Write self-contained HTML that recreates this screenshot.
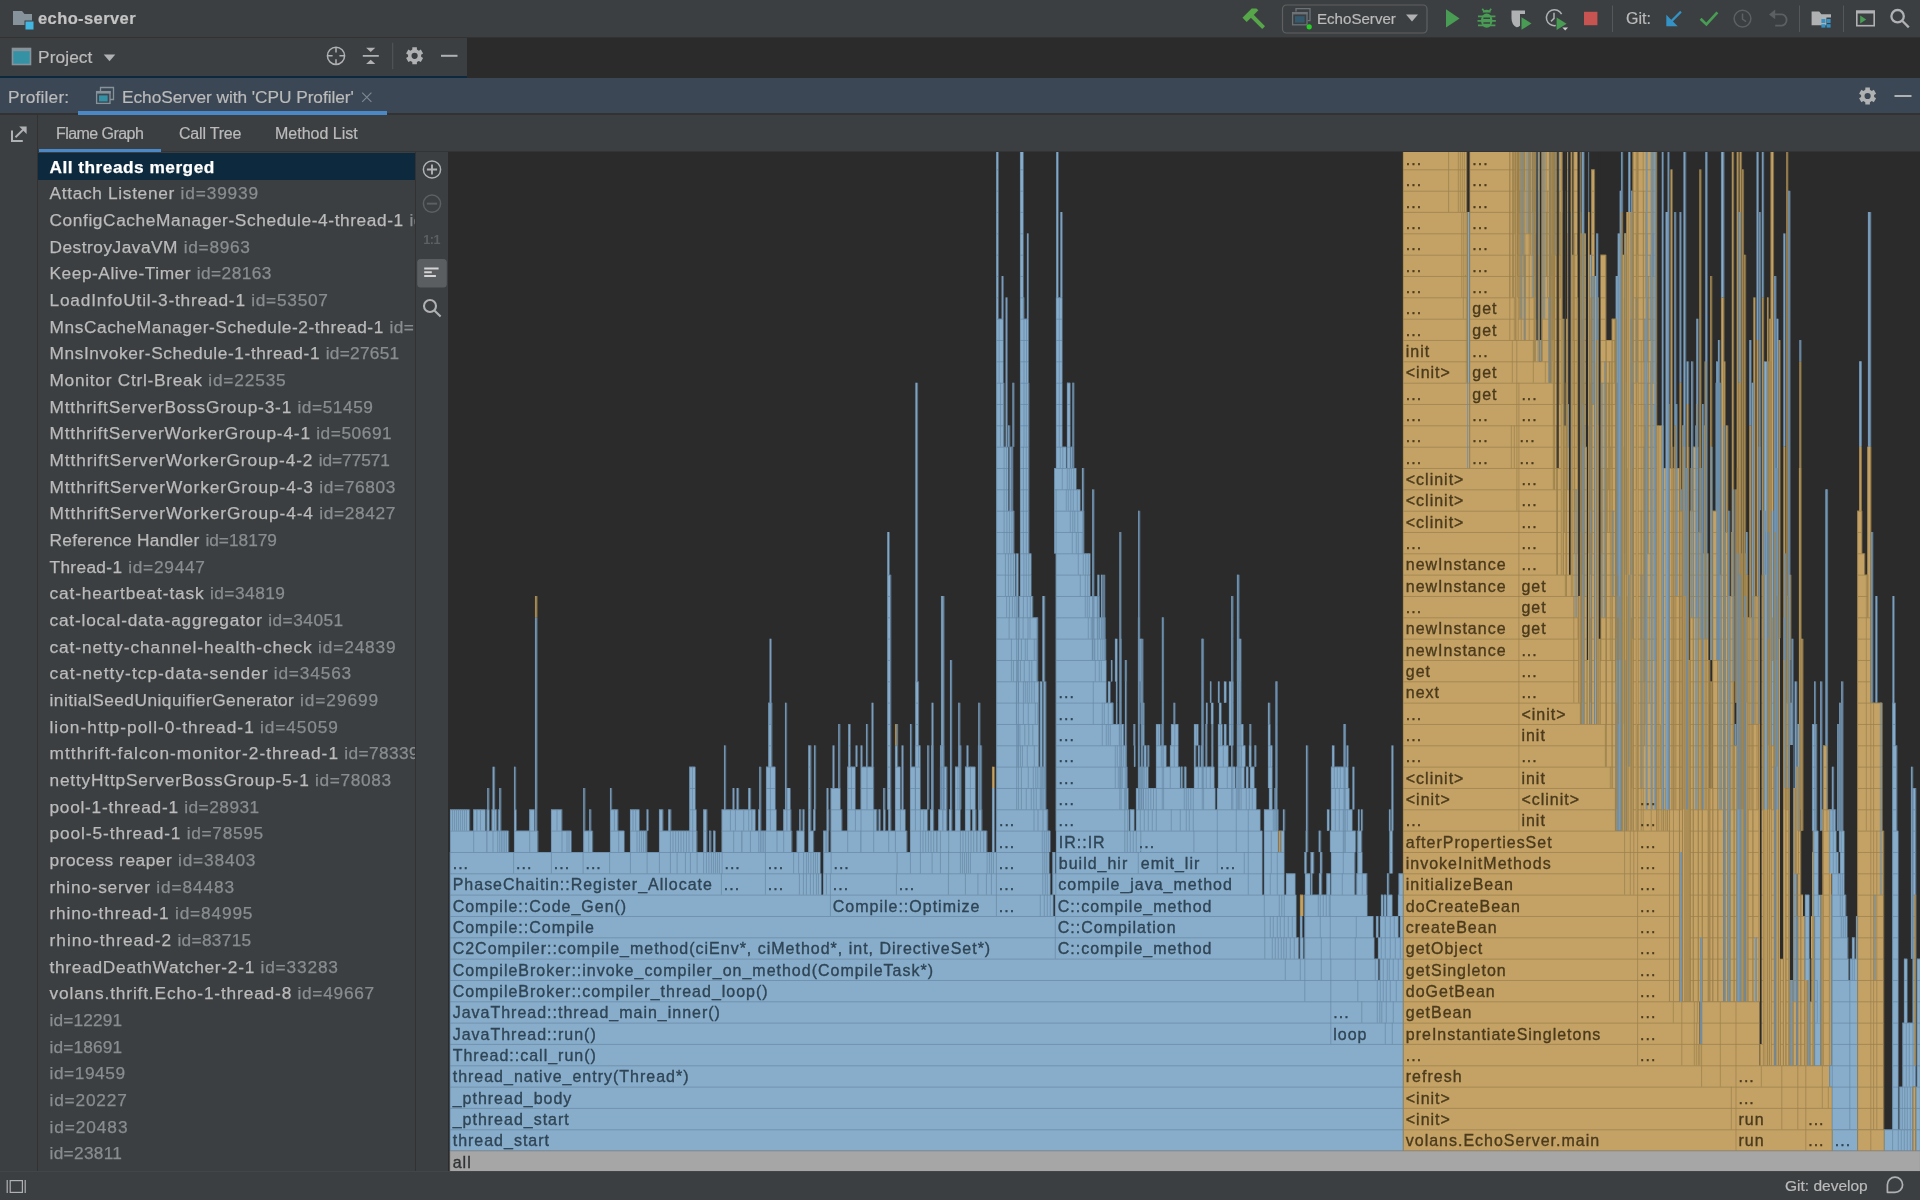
<!DOCTYPE html>
<html><head><meta charset="utf-8"><title>echo-server</title>
<style>
html,body{margin:0;padding:0;background:#3c3f41;}
body{width:1920px;height:1200px;overflow:hidden;position:relative;font-family:"Liberation Sans",sans-serif;color:#bbbbbb;}
.abs{position:absolute;}
svg,.t,#list{will-change:transform;}
.t{position:absolute;white-space:nowrap;line-height:1;-webkit-text-stroke:0.2px;}
#topbar{left:0;top:0;width:1920px;height:37px;background:#3c3f41;}
#topline{left:0;top:37px;width:1920px;height:1px;background:#323232;}
#editor{left:467px;top:38px;width:1453px;height:40px;background:#2b2b2b;}
#projhdr{left:0;top:38px;width:467px;height:38px;background:#3c3f41;}
#projline{left:0;top:76px;width:467px;height:2px;background:#0d293e;}
#profhdr{left:0;top:78px;width:1920px;height:35px;background:#3b4754;border-bottom:2px solid #323232;}
#subtabs{left:0;top:115px;width:1920px;height:36px;background:#3c3f41;border-bottom:1px solid #333435;}
#gutter{left:0;top:115px;width:37px;height:1056px;background:#3c3f41;border-right:1px solid #323232;}
#list{left:38px;top:152px;width:377px;height:1019px;background:#3c3f41;overflow:hidden;}
#tool{left:415px;top:152px;width:33.3px;height:1019px;background:#3c3f41;border-left:1px solid #323232;box-sizing:border-box;}
#flamebg{left:448.3px;top:152px;width:1471.7px;height:1019px;background:#2b2b2b;}
#status{left:0;top:1170.8px;width:1920px;height:29.2px;background:#3c3f41;border-top:1px solid #434547;box-sizing:border-box;}
.row{position:absolute;left:0;width:377px;height:27px;white-space:nowrap;font-size:17.3px;line-height:29.4px;color:#bbbbbb;-webkit-text-stroke:0.25px;overflow:hidden;}
.row b,.row i{position:absolute;top:0;font-weight:normal;font-style:normal;white-space:pre;}
.row i{color:#8a8d8f;}
.sel{background:#0d293e;color:#ffffff;}
.sel b{font-weight:bold;}
</style></head><body>
<div id="topbar" class="abs"></div>
<div id="topline" class="abs"></div>
<div id="editor" class="abs"></div>
<div id="projhdr" class="abs"></div>
<div id="projline" class="abs"></div>
<div id="profhdr" class="abs"></div>
<div id="subtabs" class="abs"></div>
<div id="gutter" class="abs"></div>
<div id="list" class="abs">
<div class="row sel" style="top:0.67px"><b style="left:11.5px;letter-spacing:0.485px">All threads merged</b></div>
<div class="row" style="top:27.34px"><b style="left:11.5px;letter-spacing:0.676px">Attach Listener</b> <i style="left:142.45px;letter-spacing:0.884px">id=39939</i></div>
<div class="row" style="top:54.00px"><b style="left:11.5px;letter-spacing:0.603px">ConfigCacheManager-Schedule-4-thread-1</b> <i style="left:371.45px;letter-spacing:0.42px">id=60675</i></div>
<div class="row" style="top:80.67px"><b style="left:11.5px;letter-spacing:0.503px">DestroyJavaVM</b> <i style="left:145.70px;letter-spacing:0.717px">id=8963</i></div>
<div class="row" style="top:107.34px"><b style="left:11.5px;letter-spacing:0.544px">Keep-Alive-Timer</b> <i style="left:158.70px;letter-spacing:0.456px">id=28163</i></div>
<div class="row" style="top:134.00px"><b style="left:11.5px;letter-spacing:0.808px">LoadInfoUtil-3-thread-1</b> <i style="left:213.20px;letter-spacing:0.742px">id=53507</i></div>
<div class="row" style="top:160.67px"><b style="left:11.5px;letter-spacing:0.578px">MnsCacheManager-Schedule-2-thread-1</b> <i style="left:351.45px;letter-spacing:0.42px">id=26883</i></div>
<div class="row" style="top:187.34px"><b style="left:11.5px;letter-spacing:0.599px">MnsInvoker-Schedule-1-thread-1</b> <i style="left:287.70px;letter-spacing:0.277px">id=27651</i></div>
<div class="row" style="top:214.00px"><b style="left:11.5px;letter-spacing:0.723px">Monitor Ctrl-Break</b> <i style="left:170.20px;letter-spacing:0.849px">id=22535</i></div>
<div class="row" style="top:240.67px"><b style="left:11.5px;letter-spacing:0.802px">MtthriftServerBossGroup-3-1</b> <i style="left:259.45px;letter-spacing:0.563px">id=51459</i></div>
<div class="row" style="top:267.34px"><b style="left:11.5px;letter-spacing:0.809px">MtthriftServerWorkerGroup-4-1</b> <i style="left:278.20px;letter-spacing:0.563px">id=50691</i></div>
<div class="row" style="top:294.00px"><b style="left:11.5px;letter-spacing:0.898px">MtthriftServerWorkerGroup-4-2</b> <i style="left:280.70px;letter-spacing:-0.044px">id=77571</i></div>
<div class="row" style="top:320.67px"><b style="left:11.5px;letter-spacing:0.916px">MtthriftServerWorkerGroup-4-3</b> <i style="left:281.20px;letter-spacing:0.67px">id=76803</i></div>
<div class="row" style="top:347.34px"><b style="left:11.5px;letter-spacing:0.916px">MtthriftServerWorkerGroup-4-4</b> <i style="left:281.20px;letter-spacing:0.67px">id=28427</i></div>
<div class="row" style="top:374.00px"><b style="left:11.5px;letter-spacing:0.293px">Reference Handler</b> <i style="left:167.45px;letter-spacing:-0.008px">id=18179</i></div>
<div class="row" style="top:400.67px"><b style="left:11.5px;letter-spacing:0.339px">Thread-1</b> <i style="left:90.20px;letter-spacing:0.742px">id=29447</i></div>
<div class="row" style="top:427.34px"><b style="left:11.5px;letter-spacing:0.881px">cat-heartbeat-task</b> <i style="left:171.95px;letter-spacing:0.492px">id=34819</i></div>
<div class="row" style="top:454.00px"><b style="left:11.5px;letter-spacing:0.809px">cat-local-data-aggregator</b> <i style="left:230.20px;letter-spacing:0.492px">id=34051</i></div>
<div class="row" style="top:480.67px"><b style="left:11.5px;letter-spacing:0.894px">cat-netty-channel-health-check</b> <i style="left:279.95px;letter-spacing:0.884px">id=24839</i></div>
<div class="row" style="top:507.34px"><b style="left:11.5px;letter-spacing:1.038px">cat-netty-tcp-data-sender</b> <i style="left:235.70px;letter-spacing:0.849px">id=34563</i></div>
<div class="row" style="top:534.00px"><b style="left:11.5px;letter-spacing:0.473px">initialSeedUniquifierGenerator</b> <i style="left:261.95px;letter-spacing:0.956px">id=29699</i></div>
<div class="row" style="top:560.67px"><b style="left:11.5px;letter-spacing:1.026px">lion-http-poll-0-thread-1</b> <i style="left:221.95px;letter-spacing:0.92px">id=45059</i></div>
<div class="row" style="top:587.34px"><b style="left:11.5px;letter-spacing:1.059px">mtthrift-falcon-monitor-2-thread-1</b> <i style="left:306.20px;letter-spacing:0.42px">id=78339</i></div>
<div class="row" style="top:614.00px"><b style="left:11.5px;letter-spacing:0.815px">nettyHttpServerBossGroup-5-1</b> <i style="left:276.95px;letter-spacing:0.67px">id=78083</i></div>
<div class="row" style="top:640.67px"><b style="left:11.5px;letter-spacing:0.738px">pool-1-thread-1</b> <i style="left:146.20px;letter-spacing:0.492px">id=28931</i></div>
<div class="row" style="top:667.34px"><b style="left:11.5px;letter-spacing:0.916px">pool-5-thread-1</b> <i style="left:148.70px;letter-spacing:0.706px">id=78595</i></div>
<div class="row" style="top:694.00px"><b style="left:11.5px;letter-spacing:0.537px">process reaper</b> <i style="left:139.95px;letter-spacing:0.849px">id=38403</i></div>
<div class="row" style="top:720.67px"><b style="left:11.5px;letter-spacing:0.754px">rhino-server</b> <i style="left:118.20px;letter-spacing:0.92px">id=84483</i></div>
<div class="row" style="top:747.34px"><b style="left:11.5px;letter-spacing:0.822px">rhino-thread-1</b> <i style="left:136.95px;letter-spacing:0.849px">id=84995</i></div>
<div class="row" style="top:774.00px"><b style="left:11.5px;letter-spacing:1.014px">rhino-thread-2</b> <i style="left:139.45px;letter-spacing:0.313px">id=83715</i></div>
<div class="row" style="top:800.67px"><b style="left:11.5px;letter-spacing:0.724px">threadDeathWatcher-2-1</b> <i style="left:222.45px;letter-spacing:0.849px">id=33283</i></div>
<div class="row" style="top:827.34px"><b style="left:11.5px;letter-spacing:0.847px">volans.thrift.Echo-1-thread-8</b> <i style="left:259.45px;letter-spacing:0.742px">id=49667</i></div>
<div class="row" style="top:854.00px"><i style="left:11.50px;letter-spacing:0.127px">id=12291</i></div>
<div class="row" style="top:880.67px"><i style="left:11.50px;letter-spacing:0.127px">id=18691</i></div>
<div class="row" style="top:907.34px"><i style="left:11.50px;letter-spacing:0.556px">id=19459</i></div>
<div class="row" style="top:934.00px"><i style="left:11.50px;letter-spacing:0.806px">id=20227</i></div>
<div class="row" style="top:960.67px"><i style="left:11.50px;letter-spacing:0.913px">id=20483</i></div>
<div class="row" style="top:987.34px"><i style="left:11.50px;letter-spacing:0.31px">id=23811</i></div>
</div>
<div id="tool" class="abs"></div>
<div id="flamebg" class="abs"></div>
<div id="status" class="abs"></div>

<!-- top bar text -->
<div class="t" style="left:37.5px;top:10px;font-size:16.5px;font-weight:bold;letter-spacing:0.4px;color:#c4c4c4;">echo-server</div>
<div class="t" style="left:1317.4px;top:11.3px;font-size:15.1px;color:#bbbbbb;">EchoServer</div>
<div class="t" style="left:1625.6px;top:11px;font-size:16px;color:#bbbbbb;">Git:</div>
<div class="t" style="left:37.6px;top:48.6px;font-size:17.3px;letter-spacing:0.1px;color:#bbbbbb;">Project</div>
<div class="t" style="left:8.3px;top:89px;font-size:17.3px;letter-spacing:0.2px;color:#bbbbbb;">Profiler:</div>
<div class="t" style="left:121.5px;top:89px;font-size:17.3px;letter-spacing:-0.05px;color:#bbbbbb;">EchoServer with 'CPU Profiler'</div>
<div class="t" style="left:56px;top:126px;font-size:16px;letter-spacing:-0.55px;color:#bbbbbb;">Flame Graph</div>
<div class="t" style="left:178.8px;top:126px;font-size:16px;letter-spacing:-0.2px;color:#bbbbbb;">Call Tree</div>
<div class="t" style="left:275px;top:126px;font-size:16px;color:#bbbbbb;">Method List</div>
<div class="t" style="left:1785px;top:1178px;font-size:15.5px;color:#bbbbbb;">Git: develop</div>

<!-- tab underlines -->
<div class="abs" style="left:78px;top:110.7px;width:309px;height:4.1px;background:#4a88c7;"></div>
<div class="abs" style="left:39px;top:149px;width:122px;height:3px;background:#4a88c7;"></div>

<svg class="abs" style="left:0;top:0" width="1920" height="1200" viewBox="0 0 1920 1200">
<path fill="#87939a" d="M13 11h9l2.5 3H32v11H13z"/><rect x="24.5" y="20.5" width="9.5" height="9.5" fill="#3c3f41"/><rect x="25.5" y="21.5" width="8" height="8" fill="#40b6e0"/>
<rect x="12.5" y="48.5" width="18" height="16" fill="#3592a5" stroke="#87939a" stroke-width="1.6"/><rect x="12" y="48" width="19" height="3.2" fill="#87939a"/>
<path fill="#afb1b3" d="M103.7 54.6h11.6l-5.8 6.6z"/>
<g fill="none" stroke="#afb1b3" stroke-width="1.5"><circle cx="336" cy="55.8" r="8.6"/><path d="M336 47.2v5.2M336 59.2v5.2M327.4 55.8h5.2M339.4 55.8h5.2"/></g>
<path fill="#afb1b3" d="M362.8 54.9h16v1.8h-16zM366.1 47.8h9.2l-4.6 4.3zM366.1 64h9.2l-4.6 -4.3z"/>
<rect x="392.2" y="42.7" width="1" height="26.5" fill="#555759"/>
<path fill="#afb1b3" fill-rule="evenodd" d="M412.27 49.62 L412.34 47.30 L416.86 47.30 L416.93 49.62 L418.79 50.70 L420.83 49.59 L423.10 53.51 L421.11 54.73 L421.11 56.87 L423.10 58.09 L420.83 62.01 L418.79 60.90 L416.93 61.98 L416.86 64.30 L412.34 64.30 L412.27 61.98 L410.41 60.90 L408.37 62.01 L406.10 58.09 L408.09 56.87 L408.09 54.73 L406.10 53.51 L408.37 49.59 L410.41 50.70Z M411.50 55.80 a3.10 3.10 0 1 0 6.20 0 a3.10 3.10 0 1 0 -6.20 0Z"/>
<rect x="441" y="54.8" width="16.5" height="2" fill="#afb1b3"/>
<g fill="none" stroke="#87939a" stroke-width="1.3"><path d="M100.5 91.5v-4h13v12h-3.5"/><rect x="96.6" y="91.6" width="13.4" height="11.8" fill="#3b4754"/></g><rect x="96" y="91" width="14.6" height="2.6" fill="#87939a"/><rect x="99" y="95.4" width="8.6" height="6" fill="#3592a5"/>
<path stroke="#7d8893" stroke-width="1.2" fill="none" d="M362.2 92.7l9.2 9.2M371.4 92.7l-9.2 9.2"/>
<path fill="#afb1b3" fill-rule="evenodd" d="M1865.27 89.82 L1865.34 87.50 L1869.86 87.50 L1869.93 89.82 L1871.79 90.90 L1873.83 89.79 L1876.10 93.71 L1874.11 94.93 L1874.11 97.07 L1876.10 98.29 L1873.83 102.21 L1871.79 101.10 L1869.93 102.18 L1869.86 104.50 L1865.34 104.50 L1865.27 102.18 L1863.41 101.10 L1861.37 102.21 L1859.10 98.29 L1861.09 97.07 L1861.09 94.93 L1859.10 93.71 L1861.37 89.79 L1863.41 90.90Z M1864.50 96.00 a3.10 3.10 0 1 0 6.20 0 a3.10 3.10 0 1 0 -6.20 0Z"/>
<rect x="1894.5" y="95" width="17" height="2" fill="#afb1b3"/>
<g fill="none" stroke="#afb1b3" stroke-width="2"><path d="M12 130.5v10.5h10.8"/><path d="M15.5 137.3L25.2 127.6"/></g><path fill="#afb1b3" d="M19.2 126.6h7.4v7.4z"/>
<g fill="none" stroke="#afb1b3" stroke-width="1.5"><circle cx="432" cy="169.5" r="8.6"/></g><path fill="#afb1b3" d="M426.9 168.6h10.2v1.9h-10.2zM431.05 164.4h1.9v10.2h-1.9z"/>
<g fill="none" stroke="#5d6062" stroke-width="1.5"><circle cx="432" cy="203.6" r="8.6"/></g><rect x="426.9" y="202.7" width="10.2" height="1.9" fill="#5d6062"/>
<text x="431.7" y="244.2" text-anchor="middle" font-family="Liberation Sans, sans-serif" font-weight="bold" font-size="12.6" letter-spacing="-0.4" fill="#5d6062">1:1</text>
<rect x="417.2" y="259" width="29.6" height="28.6" rx="3.5" fill="#5a5e61"/>
<path fill="#d4d4d4" d="M424.2 267.4h14.4v2.1h-14.4zM424.2 271.2h7.6v2h-7.6zM424.2 275h11.7v2.1h-11.7z"/>
<g fill="none" stroke="#afb1b3" stroke-width="2.1"><circle cx="430" cy="306" r="6"/><path d="M434.4 310.4l6.2 6.2"/></g>
<g transform="translate(1254.5 18.5) rotate(-45)"><rect x="-2" y="-4" width="4" height="17" rx="0.8" fill="#57a64a"/><path fill="#57a64a" d="M-8 -9h13l3.5 3.2v2.8h-16.5z"/></g>
<rect x="1282.5" y="5" width="144.5" height="28" rx="4" fill="none" stroke="#5e6162" stroke-width="1.2"/>
<g fill="none" stroke="#6b7379" stroke-width="1.3"><path d="M1296 11.5v-2.8h14v12h-2.5"/><rect x="1292.6" y="12.6" width="14.4" height="12.2" fill="#3c3f41"/></g><rect x="1292" y="12" width="15.6" height="2.4" fill="#6b7379"/><rect x="1295" y="16.2" width="9.6" height="6.4" fill="#355a6e"/><circle cx="1309.2" cy="26.8" r="2.6" fill="#23d123"/>
<path fill="#afb1b3" d="M1406 14.6h12l-6 7z"/>
<path fill="#499c54" d="M1446 9.2l13.6 9.2l-13.6 9.2z"/>
<g fill="#499c54"><ellipse cx="1486.7" cy="20.6" rx="5.7" ry="7.2"/><path d="M1482.6 12.6a4.2 3.6 0 0 1 8.2 0z"/><path d="M1478 15.6h17.4v1.7h-17.4zM1477.5 20h18.4v1.7h-18.4zM1478 24.6h17.4v1.7h-17.4z"/><path d="M1481.6 9.2l1.4-.9 2 3-1.4.9zM1491.8 9.2l-1.4-.9-2 3 1.4.9z"/></g><path fill="#3c3f41" d="M1483.4 17.5h6.6v1.5h-6.6zM1483.4 22.3h6.6v1.5h-6.6z"/>
<path fill="#afb1b3" d="M1511.5 10.5h13.5v3.4h-5v11.8q-2 1.6-3.5 1.6q-5-2.6-5-9z"/><path fill="#3c3f41" d="M1518.2 13.9h1.8v6h-1.8z" opacity="0"/><path fill="#499c54" d="M1521.5 17.2l10 6.3l-10 6.3z"/>
<g fill="none" stroke="#afb1b3" stroke-width="1.5"><path d="M1561.6 14.2a8 8 0 1 0 -5.8 11.4"/><path d="M1554 12.8v5.6l-3 3"/></g><path fill="#499c54" d="M1556.6 17.4l10 6.3l-10 6.3z"/><path fill="#d0d0d0" d="M1562.4 27.6h5.6l-2.8 3z"/>
<rect x="1584" y="11.8" width="13.4" height="13.4" fill="#c75450"/>
<rect x="1612" y="5.5" width="1" height="26.5" fill="#555759"/>
<path stroke="#3592c4" stroke-width="2.2" fill="none" d="M1681 11.6l-12.5 12.5"/><path fill="#3592c4" d="M1666.3 14.8v11.4h11.4z"/>
<path stroke="#499c54" stroke-width="2.7" fill="none" d="M1700.6 18.8l5.8 5.6l11-12"/>
<g fill="none" stroke="#5d6062" stroke-width="1.5"><circle cx="1742.5" cy="18.6" r="8.4"/><path d="M1742.5 13.5v5.6l3.6 2.6"/></g>
<path fill="none" stroke="#5d6062" stroke-width="1.8" d="M1772.5 14.4h9.2a4.9 5.6 0 0 1 0 11.2h-6.5"/><path fill="#5d6062" d="M1769 14.4l6.2-4.8v9.6z"/>
<rect x="1799" y="5.5" width="1" height="26.5" fill="#555759"/>
<path fill="#afb1b3" d="M1811.6 11.4h7.6l2.2 2.8h9.6v3.4h-4.6v7.6h-14.8z"/><g fill="#3592c4"><rect x="1821.4" y="19" width="4" height="4"/><rect x="1826.6" y="19" width="4" height="4"/><rect x="1821.4" y="24.2" width="4" height="3.4"/><rect x="1826.6" y="24.2" width="4" height="3.4"/></g>
<rect x="1843" y="5.5" width="1" height="26.5" fill="#555759"/>
<rect x="1856.8" y="11.3" width="17.4" height="14.4" fill="none" stroke="#afb1b3" stroke-width="1.6"/><rect x="1856" y="10.5" width="19" height="3" fill="#afb1b3"/><path fill="#499c54" d="M1860.2 15.4l6 4l-6 4z"/>
<g fill="none" stroke="#afb1b3" stroke-width="2.3"><circle cx="1897.6" cy="16.2" r="6.2"/><path d="M1902.2 20.8l6.6 6.6"/></g>
<g fill="none" stroke="#afb1b3" stroke-width="1.2"><rect x="10.2" y="1180.6" width="12.2" height="11.8"/><path d="M7.2 1180v13M25.2 1180v13"/></g>
<path fill="none" stroke="#afb1b3" stroke-width="1.7" stroke-linejoin="round" d="M1887.4 1184.7A7.6 7.6 0 1 1 1895 1192.3L1887.4 1192.3Z"/>
</svg>
<svg class="abs" style="left:449px;top:152px;" width="1471" height="1018.8" viewBox="449 152 1471 1018.8" font-family="Liberation Sans, sans-serif" font-size="16" letter-spacing="1">
<path fill="#a6a6a6" d="M449.9 1150.8h1470.2v21.3h-1470.2z"/>
<path fill="#87adcb" d="M449.9 1129.4h953.1v21.3h-953.1zM449.9 1108.1h953.1v21.3h-953.1zM449.9 1086.8h953.1v21.3h-953.1zM449.9 1065.4h953.1v21.3h-953.1zM449.9 1044.1h953.1v21.3h-953.1zM449.9 1022.8h880.6v21.3h-880.6zM1330.5 1022.8h54.5v21.3h-54.5zM1385 1022.8h7v21.3h-7zM1392 1022.8h11v21.3h-11zM449.9 1001.4h880.6v21.3h-880.6zM1330.5 1001.4h31v21.3h-31zM1361.5 1001.4h15.5v21.3h-15.5zM1377 1001.4h2.5v21.3h-2.5zM1379.5 1001.4h2v21.3h-2zM1381.5 1001.4h4.5v21.3h-4.5zM1386 1001.4h7v21.3h-7zM1393 1001.4h10v21.3h-10zM449.9 980.1h854.6v21.3h-854.6zM1304.5 980.1h26v21.3h-26zM1330.5 980.1h27v21.3h-27zM1357.5 980.1h19.5v21.3h-19.5zM1377 980.1h3v21.3h-3zM1380 980.1h3v21.3h-3zM1383 980.1h3v21.3h-3zM1386 980.1h4v21.3h-4zM1390 980.1h6v21.3h-6zM1396 980.1h7v21.3h-7zM449.9 958.8h835.1v21.3h-835.1zM1285 958.8h15v21.3h-15zM1300 958.8h4.5v21.3h-4.5zM1304.5 958.8h16.5v21.3h-16.5zM1321 958.8h9.5v21.3h-9.5zM1330.5 958.8h24.5v21.3h-24.5zM1355 958.8h20v21.3h-20zM1375 958.8h3v21.3h-3zM1379.7 958.8h3.3v21.3h-3.3zM1383 958.8h4v21.3h-4zM1387 958.8h2v21.3h-2zM1389 958.8h4v21.3h-4zM1393 958.8h5v21.3h-5zM1398 958.8h5v21.3h-5zM449.9 937.4h605.1v21.3h-605.1zM1055 937.4h209.5v21.3h-209.5zM1264.5 937.4h7.5v21.3h-7.5zM1272 937.4h3v21.3h-3zM1275 937.4h3v21.3h-3zM1278 937.4h3v21.3h-3zM1281 937.4h2.5v21.3h-2.5zM1283.5 937.4h2.5v21.3h-2.5zM1286 937.4h4v21.3h-4zM1290 937.4h4v21.3h-4zM1294 937.4h4.5v21.3h-4.5zM1300 937.4h3v21.3h-3zM1304.5 937.4h16.5v21.3h-16.5zM1321 937.4h9v21.3h-9zM1330 937.4h25v21.3h-25zM1355 937.4h19v21.3h-19zM1378 937.4h3v21.3h-3zM1381 937.4h4v21.3h-4zM1385 937.4h5v21.3h-5zM1390 937.4h5v21.3h-5zM1395 937.4h5v21.3h-5zM1400 937.4h3v21.3h-3zM449.9 916.1h605.1v21.3h-605.1zM1055 916.1h209.5v21.3h-209.5zM1264.5 916.1h5.5v21.3h-5.5zM1270 916.1h3v21.3h-3zM1273 916.1h4v21.3h-4zM1277 916.1h3v21.3h-3zM1280 916.1h4v21.3h-4zM1284 916.1h4v21.3h-4zM1288 916.1h4v21.3h-4zM1292 916.1h4v21.3h-4zM1300 916.1h2v21.3h-2zM1304.5 916.1h15.5v21.3h-15.5zM1320 916.1h10v21.3h-10zM1330 916.1h26v21.3h-26zM1356 916.1h17v21.3h-17zM1376 916.1h2v21.3h-2zM1380 916.1h5v21.3h-5zM1385 916.1h5v21.3h-5zM1390 916.1h4v21.3h-4zM1394 916.1h4v21.3h-4zM1400 916.1h3v21.3h-3zM449.9 894.8h380.1v21.3h-380.1zM830 894.8h166v21.3h-166zM996 894.8h44v21.3h-44zM1040 894.8h4v21.3h-4zM1044 894.8h3v21.3h-3zM1047 894.8h3v21.3h-3zM1050 894.8h3v21.3h-3zM1055 894.8h209v21.3h-209zM1264 894.8h15v21.3h-15zM1279 894.8h2.5v21.3h-2.5zM1281.5 894.8h2.5v21.3h-2.5zM1284 894.8h12v21.3h-12zM1304.5 894.8h13.5v21.3h-13.5zM1318 894.8h2v21.3h-2zM1320 894.8h3v21.3h-3zM1323 894.8h3v21.3h-3zM1326 894.8h3v21.3h-3zM1329 894.8h1v21.3h-1zM1330 894.8h37v21.3h-37zM1381 894.8h2v21.3h-2zM1384 894.8h2v21.3h-2zM1387 894.8h5v21.3h-5zM1398 894.8h5v21.3h-5zM449.9 873.4h271.1v21.3h-271.1zM721 873.4h44v21.3h-44zM765 873.4h34v21.3h-34zM799 873.4h4v21.3h-4zM803 873.4h3v21.3h-3zM806 873.4h4v21.3h-4zM810 873.4h3v21.3h-3zM813 873.4h3v21.3h-3zM816 873.4h2v21.3h-2zM818 873.4h3v21.3h-3zM823 873.4h3v21.3h-3zM826 873.4h4v21.3h-4zM830 873.4h66v21.3h-66zM896 873.4h52v21.3h-52zM948 873.4h17v21.3h-17zM965 873.4h12.5v21.3h-12.5zM977.5 873.4h8.5v21.3h-8.5zM986 873.4h5v21.3h-5zM991 873.4h5v21.3h-5zM996 873.4h46.5v21.3h-46.5zM1042.5 873.4h2.5v21.3h-2.5zM1045 873.4h2v21.3h-2zM1047 873.4h3v21.3h-3zM1052.5 873.4h3v21.3h-3zM1055.5 873.4h192.5v21.3h-192.5zM1248 873.4h14v21.3h-14zM1264 873.4h6v21.3h-6zM1270 873.4h7v21.3h-7zM1277 873.4h7v21.3h-7zM1286 873.4h9v21.3h-9zM1305 873.4h5v21.3h-5zM1311 873.4h1v21.3h-1zM1319 873.4h2.5v21.3h-2.5zM1326.5 873.4h3.5v21.3h-3.5zM1331 873.4h11v21.3h-11zM1342 873.4h12.7v21.3h-12.7zM1356.5 873.4h5.5v21.3h-5.5zM1362 873.4h4.7v21.3h-4.7zM1387 873.4h1.6v21.3h-1.6zM1398.7 873.4h4.3v21.3h-4.3zM449.9 852.1h63.4v21.3h-63.4zM513.3 852.1h37.7v21.3h-37.7zM551 852.1h31.7v21.3h-31.7zM582.7 852.1h26.6v21.3h-26.6zM609.3 852.1h20.7v21.3h-20.7zM630 852.1h16.7v21.3h-16.7zM646.7 852.1h12.3v21.3h-12.3zM659 852.1h11v21.3h-11zM670 852.1h6.7v21.3h-6.7zM676.7 852.1h8.3v21.3h-8.3zM685 852.1h5v21.3h-5zM690 852.1h6.7v21.3h-6.7zM696.7 852.1h6.6v21.3h-6.6zM703.3 852.1h2.7v21.3h-2.7zM706 852.1h2.5v21.3h-2.5zM708.5 852.1h2.5v21.3h-2.5zM711 852.1h2v21.3h-2zM713 852.1h2v21.3h-2zM715 852.1h2v21.3h-2zM717 852.1h2v21.3h-2zM719 852.1h2.7v21.3h-2.7zM721.7 852.1h43.3v21.3h-43.3zM765 852.1h28.3v21.3h-28.3zM793.3 852.1h5v21.3h-5zM798.3 852.1h5v21.3h-5zM803.3 852.1h2.7v21.3h-2.7zM806 852.1h2v21.3h-2zM808 852.1h2.5v21.3h-2.5zM810.5 852.1h2.5v21.3h-2.5zM813 852.1h2v21.3h-2zM815 852.1h2v21.3h-2zM817 852.1h3v21.3h-3zM823.3 852.1h7.4v21.3h-7.4zM830.7 852.1h66v21.3h-66zM896.7 852.1h13.3v21.3h-13.3zM910 852.1h10v21.3h-10zM920 852.1h11.7v21.3h-11.7zM931.7 852.1h8.3v21.3h-8.3zM940 852.1h8.3v21.3h-8.3zM948.3 852.1h11.7v21.3h-11.7zM960 852.1h2v21.3h-2zM962 852.1h2v21.3h-2zM964 852.1h2v21.3h-2zM966 852.1h2v21.3h-2zM968 852.1h2v21.3h-2zM970 852.1h16.7v21.3h-16.7zM986.7 852.1h2.3v21.3h-2.3zM989 852.1h2v21.3h-2zM991 852.1h2v21.3h-2zM993 852.1h3v21.3h-3zM996 852.1h46.5v21.3h-46.5zM1042.5 852.1h2v21.3h-2zM1044.5 852.1h2v21.3h-2zM1046.5 852.1h2.5v21.3h-2.5zM1052.5 852.1h2.5v21.3h-2.5zM1056 852.1h82v21.3h-82zM1138 852.1h79v21.3h-79zM1217 852.1h27v21.3h-27zM1244 852.1h4v21.3h-4zM1248 852.1h14v21.3h-14zM1264 852.1h7v21.3h-7zM1271 852.1h6v21.3h-6zM1277 852.1h7v21.3h-7zM1304.5 852.1h1.8v21.3h-1.8zM1310.7 852.1h2.8v21.3h-2.8zM1320 852.1h1.8v21.3h-1.8zM1331 852.1h12v21.3h-12zM1343 852.1h11.7v21.3h-11.7zM1357.5 852.1h4.5v21.3h-4.5zM1389.5 852.1h2.8v21.3h-2.8zM450 830.8h23.3v21.3h-23.3zM473.3 830.8h13.3v21.3h-13.3zM486.7 830.8h6v21.3h-6zM492.7 830.8h4.7v21.3h-4.7zM497.3 830.8h2v21.3h-2zM499.3 830.8h1.7v21.3h-1.7zM501 830.8h1.7v21.3h-1.7zM502.7 830.8h1.7v21.3h-1.7zM504.3 830.8h1.7v21.3h-1.7zM506 830.8h2.3v21.3h-2.3zM514 830.8h15.3v21.3h-15.3zM529.3 830.8h8.3v21.3h-8.3zM551 830.8h10.7v21.3h-10.7zM561.7 830.8h5v21.3h-5zM566.7 830.8h2v21.3h-2zM568.7 830.8h2.3v21.3h-2.3zM583.3 830.8h5v21.3h-5zM588.3 830.8h4v21.3h-4zM610 830.8h8.3v21.3h-8.3zM618.3 830.8h5.7v21.3h-5.7zM630 830.8h6.7v21.3h-6.7zM636.7 830.8h2.3v21.3h-2.3zM639 830.8h2v21.3h-2zM641 830.8h2v21.3h-2zM643 830.8h2v21.3h-2zM645 830.8h1.7v21.3h-1.7zM659 830.8h11v21.3h-11zM670 830.8h2.7v21.3h-2.7zM672.7 830.8h2.7v21.3h-2.7zM675.3 830.8h2.7v21.3h-2.7zM678 830.8h2.7v21.3h-2.7zM680.7 830.8h2.7v21.3h-2.7zM683.3 830.8h2.7v21.3h-2.7zM686 830.8h2.7v21.3h-2.7zM688.7 830.8h3.7v21.3h-3.7zM692.3 830.8h4.3v21.3h-4.3zM703.3 830.8h3.3v21.3h-3.3zM709.3 830.8h1.3v21.3h-1.3zM713.3 830.8h1.7v21.3h-1.7zM721.7 830.8h11.7v21.3h-11.7zM733.3 830.8h8.3v21.3h-8.3zM741.7 830.8h8.3v21.3h-8.3zM750 830.8h8.3v21.3h-8.3zM758.3 830.8h1.7v21.3h-1.7zM760 830.8h1.7v21.3h-1.7zM761.7 830.8h1.7v21.3h-1.7zM763.3 830.8h1.7v21.3h-1.7zM765 830.8h11.7v21.3h-11.7zM776.7 830.8h6.7v21.3h-6.7zM783.3 830.8h8.3v21.3h-8.3zM796.7 830.8h7.3v21.3h-7.3zM808.3 830.8h5v21.3h-5zM823.3 830.8h2v21.3h-2zM825.3 830.8h1.3v21.3h-1.3zM826.7 830.8h1.7v21.3h-1.7zM830.7 830.8h16.7v21.3h-16.7zM847.3 830.8h13.3v21.3h-13.3zM860.7 830.8h12.7v21.3h-12.7zM873.3 830.8h15v21.3h-15zM888.3 830.8h6.7v21.3h-6.7zM895 830.8h11.7v21.3h-11.7zM910 830.8h10v21.3h-10zM920 830.8h2.7v21.3h-2.7zM922.7 830.8h2.7v21.3h-2.7zM925.3 830.8h2.7v21.3h-2.7zM928 830.8h2.7v21.3h-2.7zM930.7 830.8h2.7v21.3h-2.7zM933.3 830.8h3.3v21.3h-3.3zM936.7 830.8h3.3v21.3h-3.3zM940 830.8h8.3v21.3h-8.3zM948.3 830.8h11.7v21.3h-11.7zM960 830.8h2.7v21.3h-2.7zM962.7 830.8h2.7v21.3h-2.7zM965.3 830.8h2.7v21.3h-2.7zM968 830.8h2.7v21.3h-2.7zM970.7 830.8h2.7v21.3h-2.7zM973.3 830.8h3.3v21.3h-3.3zM976.7 830.8h3.3v21.3h-3.3zM980 830.8h3.3v21.3h-3.3zM983.3 830.8h3.3v21.3h-3.3zM996 830.8h46v21.3h-46zM1042 830.8h2v21.3h-2zM1044 830.8h2v21.3h-2zM1046 830.8h2v21.3h-2zM1048 830.8h2v21.3h-2zM1056 830.8h68.5v21.3h-68.5zM1124.5 830.8h2.5v21.3h-2.5zM1127 830.8h3v21.3h-3zM1130 830.8h3v21.3h-3zM1133 830.8h3v21.3h-3zM1136 830.8h4.5v21.3h-4.5zM1140.5 830.8h53.1v21.3h-53.1zM1193.6 830.8h23.4v21.3h-23.4zM1217 830.8h19v21.3h-19zM1236 830.8h12v21.3h-12zM1248 830.8h14v21.3h-14zM1264 830.8h7v21.3h-7zM1271 830.8h7v21.3h-7zM1280.6 830.8h3.4v21.3h-3.4zM1305.8 830.8h1.6v21.3h-1.6zM1318.8 830.8h1.6v21.3h-1.6zM1330 830.8h13v21.3h-13zM1343 830.8h12.5v21.3h-12.5zM1357.5 830.8h4v21.3h-4zM1389.5 830.8h2.8v21.3h-2.8zM450 809.4h2v21.3h-2zM452 809.4h2v21.3h-2zM454 809.4h2v21.3h-2zM456 809.4h2v21.3h-2zM458 809.4h2v21.3h-2zM460 809.4h2v21.3h-2zM462 809.4h2v21.3h-2zM464 809.4h2v21.3h-2zM466 809.4h3.3v21.3h-3.3zM473.3 809.4h3.3v21.3h-3.3zM476.7 809.4h3.3v21.3h-3.3zM480 809.4h5v21.3h-5zM486.7 809.4h2.3v21.3h-2.3zM491.7 809.4h2.7v21.3h-2.7zM494.3 809.4h2.3v21.3h-2.3zM498.3 809.4h2.3v21.3h-2.3zM514 809.4h2v21.3h-2zM529.3 809.4h5v21.3h-5zM535 809.4h1.7v21.3h-1.7zM551 809.4h5.7v21.3h-5.7zM556.7 809.4h5v21.3h-5zM583.3 809.4h1.3v21.3h-1.3zM589.3 809.4h1.3v21.3h-1.3zM610 809.4h4v21.3h-4zM614 809.4h3.7v21.3h-3.7zM630 809.4h2.7v21.3h-2.7zM632.7 809.4h2.7v21.3h-2.7zM635.3 809.4h3.7v21.3h-3.7zM646.7 809.4h1.3v21.3h-1.3zM659 809.4h3.7v21.3h-3.7zM668.3 809.4h2.3v21.3h-2.3zM689.3 809.4h3v21.3h-3zM692.3 809.4h3.7v21.3h-3.7zM703.3 809.4h3.3v21.3h-3.3zM721.7 809.4h8.3v21.3h-8.3zM730 809.4h5v21.3h-5zM735 809.4h8.3v21.3h-8.3zM743.3 809.4h5v21.3h-5zM748.3 809.4h3.3v21.3h-3.3zM751.7 809.4h3.3v21.3h-3.3zM758.3 809.4h2.3v21.3h-2.3zM766 809.4h4v21.3h-4zM770 809.4h6v21.3h-6zM783.3 809.4h3.3v21.3h-3.3zM786.7 809.4h4v21.3h-4zM799.3 809.4h1.3v21.3h-1.3zM802.7 809.4h1.3v21.3h-1.3zM808.3 809.4h2.3v21.3h-2.3zM813.3 809.4h1.7v21.3h-1.7zM826.7 809.4h2v21.3h-2zM830.7 809.4h11v21.3h-11zM847.3 809.4h7.7v21.3h-7.7zM855 809.4h5.7v21.3h-5.7zM860.7 809.4h12.7v21.3h-12.7zM873.3 809.4h3.3v21.3h-3.3zM878.7 809.4h1.3v21.3h-1.3zM883.3 809.4h1.7v21.3h-1.7zM888.3 809.4h2.3v21.3h-2.3zM895 809.4h5v21.3h-5zM900 809.4h5v21.3h-5zM910 809.4h5v21.3h-5zM915 809.4h5v21.3h-5zM920 809.4h3.3v21.3h-3.3zM923.3 809.4h4v21.3h-4zM930 809.4h3.3v21.3h-3.3zM938.3 809.4h4.3v21.3h-4.3zM942.7 809.4h4v21.3h-4zM949 809.4h2.7v21.3h-2.7zM955 809.4h5v21.3h-5zM965 809.4h5v21.3h-5zM972.3 809.4h3.3v21.3h-3.3zM978.3 809.4h3.3v21.3h-3.3zM992 788.1h2.2v64h-2.2zM487.3 788.1h1.3v21.3h-1.3zM492.7 766.8h1.7v42.7h-1.7zM499.3 788.1h1.3v21.3h-1.3zM514 766.8h1.3v42.7h-1.3zM583.3 788.1h1.3v21.3h-1.3zM610 788.1h1.3v21.3h-1.3zM724 745.4h1.3v64h-1.3zM732.7 788.1h1.3v21.3h-1.3zM736.7 788.1h1.7v21.3h-1.7zM748.3 788.1h2v21.3h-2zM759.3 766.8h1.3v42.7h-1.3zM785 702.8h1.3v106.7h-1.3zM786.7 788.1h3.3v21.3h-3.3zM814 745.4h1.3v64h-1.3zM826.7 788.1h1.3v21.3h-1.3zM832.7 745.4h1.3v42.7h-1.3zM838.3 724.1h1.3v64h-1.3zM855.7 745.4h1.3v21.3h-1.3zM860.7 745.4h1.3v21.3h-1.3zM866 724.1h1.3v42.7h-1.3zM871.7 702.8h1.3v64h-1.3zM883.3 788.1h1.3v21.3h-1.3zM901.7 745.4h1.3v64h-1.3zM910 724.1h1.3v42.7h-1.3zM927.3 745.4h1.3v64h-1.3zM931.7 702.8h1.3v106.7h-1.3zM950 660.1h1.3v149.3h-1.3zM958.3 702.8h1.3v64h-1.3zM966.7 745.4h1.3v21.3h-1.3zM980 745.4h1.3v64h-1.3zM978.3 702.8h1.3v106.7h-1.3zM689.3 766.8h2.7v42.7h-2.7zM692 766.8h3v42.7h-3zM766 766.8h4v42.7h-4zM770 766.8h5v42.7h-5zM768.3 702.8h3.3v64h-3.3zM769.7 638.8h1.3v85.3h-1.3zM808.3 745.4h2.3v64h-2.3zM830.7 788.1h9.3v21.3h-9.3zM847.3 766.8h3.7v42.7h-3.7zM851 766.8h4v42.7h-4zM848.3 724.1h1.7v42.7h-1.7zM860.7 766.8h6v42.7h-6zM866.7 766.8h6.7v42.7h-6.7zM895 766.8h5v42.7h-5zM895 745.4h2.3v21.3h-2.3zM896.3 724.1h1v21.3h-1zM910 766.8h5v42.7h-5zM915 745.4h5v64h-5zM940 745.4h3.3v64h-3.3zM943.3 766.8h3.3v42.7h-3.3zM955 766.8h5v42.7h-5zM965 766.8h5v42.7h-5zM970 766.8h5v42.7h-5zM535 617.4h1.7v192h-1.7zM887.3 574.8h3.2v234.7h-3.2zM887.3 532.1h1.7v42.7h-1.7zM915.3 681.4h3v85.3h-3zM915.5 382.8h1.7v298.7h-1.7zM941 596.1h1.5v213.3h-1.5zM931.2 745.4h1.2v64h-1.2zM940 766.8h1.2v42.7h-1.2zM942.5 596.1h1.2v213.3h-1.2zM950 660.1h1.2v149.3h-1.2zM957.5 766.8h2v42.7h-2zM959.5 745.4h1.2v64h-1.2zM978 745.4h1.2v64h-1.2zM996.2 809.4h37.5v21.3h-37.5zM1033.7 809.4h4v21.3h-4zM1037.7 809.4h5v21.3h-5zM1042.7 809.4h4v21.3h-4zM1046.7 809.4h0.8v21.3h-0.8zM996.2 788.1h24.8v21.3h-24.8zM1021 788.1h5v21.3h-5zM1026 788.1h5v21.3h-5zM1031 788.1h2.5v21.3h-2.5zM1033.5 788.1h2.5v21.3h-2.5zM1036 788.1h5v21.3h-5zM1041 788.1h4v21.3h-4zM996.2 766.8h24.8v21.3h-24.8zM1021 766.8h7v21.3h-7zM1028 766.8h5v21.3h-5zM1033 766.8h2.5v21.3h-2.5zM1035.5 766.8h2v21.3h-2zM1037.5 766.8h4v21.3h-4zM1041.5 766.8h3v21.3h-3zM996.2 745.4h21.3v21.3h-21.3zM1017.5 745.4h2.5v21.3h-2.5zM1020 745.4h2v21.3h-2zM1022 745.4h5v21.3h-5zM1027 745.4h7v21.3h-7zM1034 745.4h4.7v21.3h-4.7zM996.2 724.1h21.3v21.3h-21.3zM1017.5 724.1h2v21.3h-2zM1019.5 724.1h5v21.3h-5zM1024.5 724.1h4v21.3h-4zM1028.5 724.1h4v21.3h-4zM1032.5 724.1h6.2v21.3h-6.2zM996.2 702.8h19.8v21.3h-19.8zM1016 702.8h7v21.3h-7zM1023 702.8h5v21.3h-5zM1028 702.8h7v21.3h-7zM1035 702.8h2.5v21.3h-2.5zM1037.5 702.8h1.2v21.3h-1.2zM996.2 681.4h19.8v21.3h-19.8zM1016 681.4h2v21.3h-2zM1018 681.4h5v21.3h-5zM1023 681.4h2v21.3h-2zM1025 681.4h2v21.3h-2zM1027 681.4h2v21.3h-2zM1029 681.4h2.5v21.3h-2.5zM1031.5 681.4h2.5v21.3h-2.5zM1034 681.4h4.7v21.3h-4.7zM996.2 660.1h14.8v21.3h-14.8zM1011 660.1h2v21.3h-2zM1013 660.1h4v21.3h-4zM1017 660.1h3v21.3h-3zM1020 660.1h4v21.3h-4zM1024 660.1h5v21.3h-5zM1029 660.1h2.5v21.3h-2.5zM1031.5 660.1h5v21.3h-5zM1036.5 660.1h1v21.3h-1zM996.2 638.8h14.8v21.3h-14.8zM1011 638.8h7v21.3h-7zM1018 638.8h3v21.3h-3zM1021 638.8h4v21.3h-4zM1025 638.8h2v21.3h-2zM1027 638.8h7v21.3h-7zM1034 638.8h2v21.3h-2zM1036 638.8h1.5v21.3h-1.5zM996.2 617.4h12.5v21.3h-12.5zM1008.7 617.4h7v21.3h-7zM1015.7 617.4h3v21.3h-3zM1018.7 617.4h4v21.3h-4zM1022.7 617.4h5v21.3h-5zM1027.7 617.4h2v21.3h-2zM1029.7 617.4h7v21.3h-7zM1036.7 617.4h0.8v21.3h-0.8zM1040 681.4h2v128h-2zM1043.5 681.4h2.2v128h-2.2zM1042.5 596.1h2v85.3h-2zM996.2 596.1h10v21.3h-10zM1006.2 596.1h2.8v21.3h-2.8zM1009 596.1h3v21.3h-3zM1012 596.1h2.5v21.3h-2.5zM1014.5 596.1h3v21.3h-3zM1019 596.1h4v21.3h-4zM1023 596.1h4v21.3h-4zM1027 596.1h3v21.3h-3zM1030 596.1h2.5v21.3h-2.5zM996.2 574.8h8.8v21.3h-8.8zM1005 574.8h3v21.3h-3zM1008 574.8h2.5v21.3h-2.5zM1010.5 574.8h2.5v21.3h-2.5zM1013 574.8h2v21.3h-2zM1020 574.8h3.5v21.3h-3.5zM1023.5 574.8h2.5v21.3h-2.5zM1026 574.8h2.5v21.3h-2.5zM1028.5 574.8h2.5v21.3h-2.5zM996.2 553.4h8.8v21.3h-8.8zM1005 553.4h3v21.3h-3zM1008 553.4h2.5v21.3h-2.5zM1010.5 553.4h2.5v21.3h-2.5zM1013 553.4h2v21.3h-2zM1020 553.4h3.5v21.3h-3.5zM1023.5 553.4h2.5v21.3h-2.5zM1026 553.4h2.5v21.3h-2.5zM1028.5 553.4h2.5v21.3h-2.5zM1016.2 553.4h1.8v256h-1.8zM996.2 532.1h7.5v21.3h-7.5zM1003.7 532.1h2.8v21.3h-2.8zM1006.5 532.1h2.5v21.3h-2.5zM1009 532.1h2.5v21.3h-2.5zM1011.5 532.1h2.2v21.3h-2.2zM1020 532.1h3v21.3h-3zM1023 532.1h3v21.3h-3zM1026 532.1h2.7v21.3h-2.7zM996.2 510.8h7.5v21.3h-7.5zM1003.7 510.8h2.8v21.3h-2.8zM1006.5 510.8h2.5v21.3h-2.5zM1009 510.8h2.5v21.3h-2.5zM1011.5 510.8h2.2v21.3h-2.2zM1020 510.8h3v21.3h-3zM1023 510.8h3v21.3h-3zM1026 510.8h2.7v21.3h-2.7zM996.2 489.4h7.5v21.3h-7.5zM1003.7 489.4h2.3v21.3h-2.3zM1006 489.4h2v21.3h-2zM1009.5 489.4h1.5v21.3h-1.5zM1011.5 489.4h1v21.3h-1zM1020 489.4h3v21.3h-3zM1023 489.4h3v21.3h-3zM1026 489.4h2.7v21.3h-2.7zM996.2 468.1h7.5v21.3h-7.5zM1003.7 468.1h2.3v21.3h-2.3zM1006 468.1h2v21.3h-2zM1009.5 468.1h1.5v21.3h-1.5zM1011.5 468.1h1v21.3h-1zM1020 468.1h3v21.3h-3zM1023 468.1h3v21.3h-3zM1026 468.1h2.7v21.3h-2.7zM996.2 446.8h7.5v21.3h-7.5zM1003.7 446.8h2.3v21.3h-2.3zM1006 446.8h2v21.3h-2zM1009.5 446.8h1.5v21.3h-1.5zM1011.5 446.8h1v21.3h-1zM1020 446.8h3v21.3h-3zM1023 446.8h3v21.3h-3zM1026 446.8h2.7v21.3h-2.7zM996.2 425.4h3.8v21.3h-3.8zM1000 425.4h3.7v21.3h-3.7zM1020 425.4h3.7v21.3h-3.7zM1023.7 425.4h2.3v21.3h-2.3zM1026 425.4h2.7v21.3h-2.7zM996.2 404.1h3.8v21.3h-3.8zM1000 404.1h3.7v21.3h-3.7zM1020 404.1h3.7v21.3h-3.7zM1023.7 404.1h2.3v21.3h-2.3zM1026 404.1h2.7v21.3h-2.7zM996.2 382.8h3.8v21.3h-3.8zM1000 382.8h3.7v21.3h-3.7zM1020 382.8h3.7v21.3h-3.7zM1023.7 382.8h2.3v21.3h-2.3zM1026 382.8h2.7v21.3h-2.7zM1005.7 297.4h1.3v149.3h-1.3zM1012.5 382.8h1.2v64h-1.2zM1008 425.4h1.5v21.3h-1.5zM996.2 361.4h2.5v21.3h-2.5zM998.7 361.4h4.3v21.3h-4.3zM1020 361.4h3.7v21.3h-3.7zM1023.7 361.4h2.5v21.3h-2.5zM1026.2 361.4h2v21.3h-2zM996.2 340.1h2.5v21.3h-2.5zM998.7 340.1h4.3v21.3h-4.3zM1020 340.1h3.7v21.3h-3.7zM1023.7 340.1h2.5v21.3h-2.5zM1026.2 340.1h2v21.3h-2zM996.2 318.8h2.5v21.3h-2.5zM998.7 318.8h4.3v21.3h-4.3zM1020 318.8h3.7v21.3h-3.7zM1023.7 318.8h2.5v21.3h-2.5zM1026.2 318.8h2v21.3h-2zM996.2 148.1h1.8v170.7h-1.8zM1001.7 276.1h1.3v42.7h-1.3zM1020 148.1h3v170.7h-3zM1023 297.4h0.7v21.3h-0.7zM1027 233.4h1.2v85.3h-1.2zM1055.8 809.4h68.7v21.3h-68.7zM1124.5 809.4h3v21.3h-3zM1127.5 809.4h1.5v21.3h-1.5zM1055.8 788.1h68.7v21.3h-68.7zM1124.5 788.1h3.5v21.3h-3.5zM1055.8 766.8h59.2v21.3h-59.2zM1115 766.8h3v21.3h-3zM1118 766.8h2v21.3h-2zM1120 766.8h2v21.3h-2zM1122 766.8h5v21.3h-5zM1055.8 745.4h59.2v21.3h-59.2zM1115 745.4h2v21.3h-2zM1117 745.4h4v21.3h-4zM1121 745.4h2v21.3h-2zM1123 745.4h3v21.3h-3zM1055.8 724.1h46.2v21.3h-46.2zM1102 724.1h4v21.3h-4zM1106 724.1h2v21.3h-2zM1108 724.1h2v21.3h-2zM1110 724.1h9v21.3h-9zM1119 724.1h2v21.3h-2zM1121 724.1h2.5v21.3h-2.5zM1055.8 702.8h37.2v21.3h-37.2zM1093 702.8h9v21.3h-9zM1102 702.8h2v21.3h-2zM1104 702.8h4v21.3h-4zM1108 702.8h4v21.3h-4zM1112 702.8h1v21.3h-1zM1055.8 681.4h37.2v21.3h-37.2zM1093 681.4h13v21.3h-13zM1130 809.4h4v21.3h-4zM1055.8 660.1h39.2v21.3h-39.2zM1095 660.1h4v21.3h-4zM1099 660.1h2v21.3h-2zM1101 660.1h5v21.3h-5zM1055.8 638.8h36.2v21.3h-36.2zM1092 638.8h2.5v21.3h-2.5zM1094.5 638.8h3v21.3h-3zM1097.5 638.8h3v21.3h-3zM1100.5 638.8h2v21.3h-2zM1102.5 638.8h3v21.3h-3zM1055.8 617.4h32.2v21.3h-32.2zM1088 617.4h3v21.3h-3zM1091 617.4h2v21.3h-2zM1093 617.4h4v21.3h-4zM1097 617.4h2v21.3h-2zM1099 617.4h2.5v21.3h-2.5zM1101.5 617.4h2.5v21.3h-2.5zM1104 617.4h1v21.3h-1zM1055.8 596.1h29.2v21.3h-29.2zM1085 596.1h2v21.3h-2zM1087 596.1h2v21.3h-2zM1089 596.1h4v21.3h-4zM1093 596.1h4v21.3h-4zM1097 596.1h2v21.3h-2zM1055.8 574.8h24.2v21.3h-24.2zM1080 574.8h5v21.3h-5zM1085 574.8h2.5v21.3h-2.5zM1087.5 574.8h2.5v21.3h-2.5zM1055.8 553.4h22.2v21.3h-22.2zM1078 553.4h5v21.3h-5zM1083 553.4h2.5v21.3h-2.5zM1085.5 553.4h2.5v21.3h-2.5zM1088 553.4h2v21.3h-2zM1055.8 532.1h16.2v21.3h-16.2zM1054.2 532.1h1.6v21.3h-1.6zM1072 532.1h4v21.3h-4zM1076 532.1h2v21.3h-2zM1078 532.1h4v21.3h-4zM1082 532.1h1.7v21.3h-1.7zM1055.8 510.8h14.2v21.3h-14.2zM1054.2 510.8h1.6v21.3h-1.6zM1070 510.8h2.5v21.3h-2.5zM1072.5 510.8h2v21.3h-2zM1074.5 510.8h3v21.3h-3zM1077.5 510.8h5v21.3h-5zM1082.5 510.8h1.2v21.3h-1.2zM1055.8 489.4h10.2v21.3h-10.2zM1054.2 489.4h1.6v21.3h-1.6zM1066 489.4h2v21.3h-2zM1068 489.4h2.5v21.3h-2.5zM1070.5 489.4h2.5v21.3h-2.5zM1073 489.4h4v21.3h-4zM1077 489.4h3v21.3h-3zM1054.2 468.1h7.8v21.3h-7.8zM1062 468.1h5v21.3h-5zM1067 468.1h2v21.3h-2zM1069 468.1h2v21.3h-2zM1071 468.1h2.5v21.3h-2.5zM1073.5 468.1h2.5v21.3h-2.5zM1097.5 574.8h1.5v64h-1.5zM1101 574.8h1.5v64h-1.5zM1103.5 574.8h1v64h-1zM1082 468.1h1.5v42.7h-1.5zM1092.2 489.4h1.5v170.7h-1.5zM1056 446.8h4v21.3h-4zM1060 446.8h2.5v21.3h-2.5zM1062.5 446.8h3.5v21.3h-3.5zM1067 446.8h3v21.3h-3zM1070.5 446.8h1.5v21.3h-1.5zM1072.5 446.8h1.2v21.3h-1.2zM1056 425.4h3v21.3h-3zM1059 425.4h3v21.3h-3zM1067 425.4h3v21.3h-3zM1072.5 425.4h1.2v21.3h-1.2zM1056 404.1h3v21.3h-3zM1059 404.1h3v21.3h-3zM1067 404.1h3v21.3h-3zM1072.5 404.1h1.2v21.3h-1.2zM1056 382.8h3v21.3h-3zM1059 382.8h3v21.3h-3zM1067 382.8h3v21.3h-3zM1072.5 382.8h1.2v21.3h-1.2zM1056 297.4h3v85.3h-3zM1059 297.4h3v85.3h-3zM1056.2 148.1h1.8v149.3h-1.8zM1060.5 212.1h1.5v85.3h-1.5zM1119.5 532.1h1.2v277.3h-1.2zM1138.2 510.8h1.2v298.7h-1.2zM1162 617.4h1.2v192h-1.2zM1125 660.1h1.2v149.3h-1.2zM1141.2 638.8h1.5v170.7h-1.5zM1202 638.8h1.2v170.7h-1.2zM1231.2 596.1h1.2v213.3h-1.2zM1237 574.8h1.5v234.7h-1.5zM1238.8 638.8h2v170.7h-2zM1275.8 681.4h1.2v149.3h-1.2zM1343.8 724.1h1.2v128h-1.2zM1136 809.4h4v21.3h-4zM1140 809.4h4v21.3h-4zM1144 809.4h4v21.3h-4zM1148 809.4h4v21.3h-4zM1152 809.4h4v21.3h-4zM1156 809.4h15v21.3h-15zM1171 809.4h9v21.3h-9zM1180 809.4h6v21.3h-6zM1186 809.4h3v21.3h-3zM1189 809.4h4v21.3h-4zM1193 809.4h24v21.3h-24zM1217 809.4h19v21.3h-19zM1236 809.4h12v21.3h-12zM1248 809.4h12v21.3h-12zM1264 809.4h9v21.3h-9zM1273 809.4h1.4v21.3h-1.4zM1274.4 809.4h1.6v21.3h-1.6zM1276 809.4h2v21.3h-2zM1136 788.1h2.4v21.3h-2.4zM1138.4 788.1h2.4v21.3h-2.4zM1140.8 788.1h2.4v21.3h-2.4zM1143.2 788.1h2.4v21.3h-2.4zM1145.6 788.1h2.4v21.3h-2.4zM1148 788.1h2.4v21.3h-2.4zM1150.4 788.1h2.8v21.3h-2.8zM1153.2 788.1h2.8v21.3h-2.8zM1156 788.1h28v21.3h-28zM1184 788.1h2v21.3h-2zM1186 788.1h2v21.3h-2zM1188 788.1h2.4v21.3h-2.4zM1190.4 788.1h2.6v21.3h-2.6zM1193 788.1h22v21.3h-22zM1217 788.1h19v21.3h-19zM1236 788.1h10v21.3h-10zM1246 788.1h3v21.3h-3zM1249 788.1h3v21.3h-3zM1252 788.1h4v21.3h-4zM1269 788.1h3v21.3h-3zM1274.6 788.1h1v21.3h-1zM1138 766.8h2v21.3h-2zM1140 766.8h2v21.3h-2zM1142 766.8h2v21.3h-2zM1144 766.8h2v21.3h-2zM1146 766.8h2v21.3h-2zM1156 766.8h14v21.3h-14zM1170 766.8h10v21.3h-10zM1181 766.8h1.4v21.3h-1.4zM1184.4 766.8h1.6v21.3h-1.6zM1194 766.8h4v21.3h-4zM1198 766.8h4v21.3h-4zM1202 766.8h4v21.3h-4zM1206 766.8h4v21.3h-4zM1210 766.8h4v21.3h-4zM1218 766.8h9v21.3h-9zM1227 766.8h8v21.3h-8zM1236 766.8h4v21.3h-4zM1240 766.8h4v21.3h-4zM1246 766.8h2v21.3h-2zM1250 766.8h4v21.3h-4zM1268 766.8h4v21.3h-4zM1275.6 766.8h1v21.3h-1zM1134 745.4h1v21.3h-1zM1138 745.4h1.2v21.3h-1.2zM1141 745.4h1.2v21.3h-1.2zM1144 745.4h2v21.3h-2zM1147.6 745.4h1.2v21.3h-1.2zM1156 745.4h5v21.3h-5zM1161 745.4h5v21.3h-5zM1170 745.4h4v21.3h-4zM1174 745.4h4v21.3h-4zM1194 745.4h1.6v21.3h-1.6zM1198 745.4h1.6v21.3h-1.6zM1201 745.4h1.4v21.3h-1.4zM1205.6 745.4h1.2v21.3h-1.2zM1211.6 745.4h1.2v21.3h-1.2zM1218 745.4h5v21.3h-5zM1223 745.4h5v21.3h-5zM1237 745.4h4v21.3h-4zM1241 745.4h4v21.3h-4zM1249 745.4h2v21.3h-2zM1254.6 745.4h1.2v21.3h-1.2zM1268 745.4h2v21.3h-2zM1270 745.4h2v21.3h-2zM1275.6 745.4h1v21.3h-1zM1133.6 724.1h1.2v21.3h-1.2zM1138 724.1h1.4v21.3h-1.4zM1142 724.1h2v21.3h-2zM1156 724.1h2v21.3h-2zM1158 724.1h2v21.3h-2zM1161.6 724.1h1.2v21.3h-1.2zM1171 724.1h3.4v21.3h-3.4zM1174.4 724.1h3.6v21.3h-3.6zM1194 724.1h2v21.3h-2zM1196 724.1h2v21.3h-2zM1201.6 724.1h1.2v21.3h-1.2zM1205.6 724.1h1.2v21.3h-1.2zM1211.6 724.1h1.2v21.3h-1.2zM1218 724.1h2v21.3h-2zM1220 724.1h2v21.3h-2zM1224 724.1h2v21.3h-2zM1229 724.1h2v21.3h-2zM1231 724.1h2v21.3h-2zM1237 724.1h3v21.3h-3zM1240 724.1h3v21.3h-3zM1249.6 724.1h1.2v21.3h-1.2zM1268 724.1h2v21.3h-2zM1275.6 724.1h1v21.3h-1zM1116 702.8h1v21.3h-1zM1120 702.8h1v21.3h-1zM1138 702.8h1.6v21.3h-1.6zM1140.8 702.8h1.6v21.3h-1.6zM1142.8 702.8h1.2v21.3h-1.2zM1162 702.8h1v21.3h-1zM1173.6 702.8h1.2v21.3h-1.2zM1201.6 702.8h1v21.3h-1zM1206 702.8h1.2v21.3h-1.2zM1211 702.8h2v21.3h-2zM1219 702.8h2v21.3h-2zM1229 702.8h2v21.3h-2zM1231 702.8h2v21.3h-2zM1238 702.8h2v21.3h-2zM1268 702.8h1.6v21.3h-1.6zM1275.6 702.8h1v21.3h-1zM1108 681.4h2v21.3h-2zM1116 681.4h1v21.3h-1zM1120 681.4h1v21.3h-1zM1138 681.4h1.6v21.3h-1.6zM1140.4 681.4h1.6v21.3h-1.6zM1162 681.4h1v21.3h-1zM1201.6 681.4h1v21.3h-1zM1210 681.4h1v21.3h-1zM1218 681.4h1.2v21.3h-1.2zM1224 681.4h2v21.3h-2zM1229 681.4h2v21.3h-2zM1231 681.4h2v21.3h-2zM1238 681.4h2v21.3h-2zM1275.6 681.4h1v21.3h-1zM1111 660.1h1v21.3h-1zM1115 660.1h2v21.3h-2zM1120 660.1h1v21.3h-1zM1125 660.1h1v21.3h-1zM1138 660.1h1.6v21.3h-1.6zM1139.6 660.1h1.4v21.3h-1.4zM1162 660.1h1v21.3h-1zM1201.6 660.1h1v21.3h-1zM1231.6 660.1h1v21.3h-1zM1237 660.1h2v21.3h-2zM1104 638.8h1v21.3h-1zM1115 638.8h2v21.3h-2zM1120 638.8h1v21.3h-1zM1138 638.8h1.6v21.3h-1.6zM1139.6 638.8h1.4v21.3h-1.4zM1162 638.8h1v21.3h-1zM1201.6 638.8h1v21.3h-1zM1231.6 638.8h1v21.3h-1zM1237.6 638.8h1.2v21.3h-1.2zM1138 617.4h1.2v21.3h-1.2zM1162 617.4h1v21.3h-1zM1231.6 617.4h1v21.3h-1zM1237.6 617.4h1v21.3h-1zM1231.6 596.1h1v21.3h-1zM1237.6 596.1h1v21.3h-1zM1237.6 574.8h1v21.3h-1zM1283 809.4h1.4v21.3h-1.4zM1306 745.4h1.4v85.3h-1.4zM1327 809.4h2v21.3h-2zM1331 809.4h4v21.3h-4zM1335 809.4h4v21.3h-4zM1339 809.4h4v21.3h-4zM1343 809.4h4v21.3h-4zM1347 809.4h5v21.3h-5zM1331 788.1h4v21.3h-4zM1335 788.1h4v21.3h-4zM1339 788.1h5v21.3h-5zM1344 788.1h5v21.3h-5zM1331 766.8h3v21.3h-3zM1334 766.8h3v21.3h-3zM1337 766.8h3v21.3h-3zM1340 766.8h4v21.3h-4zM1344 766.8h4v21.3h-4zM1332 745.4h2v21.3h-2zM1343.7 724.1h1.6v42.7h-1.6zM1346.7 745.4h1.3v21.3h-1.3zM1352.6 766.8h1.4v42.7h-1.4zM1358 809.4h1.3v21.3h-1.3zM1361 809.4h1.3v21.3h-1.3zM1389 809.4h1.4v21.3h-1.4zM1391.6 745.4h1.4v85.3h-1.4zM1832 1129.4h25.3v21.3h-25.3zM1884 1129.4h8.3v21.3h-8.3zM1892.3 1129.4h5.7v21.3h-5.7zM1898 1129.4h3v21.3h-3zM1901 1129.4h3v21.3h-3zM1904 1129.4h3v21.3h-3zM1907 1129.4h3v21.3h-3zM1910 1129.4h2.7v21.3h-2.7zM1915.6 1129.4h4.4v21.3h-4.4zM1467.3 212.1h1.9v256h-1.9zM1539.2 148.1h2v213.3h-2zM1549.2 148.1h1.3v234.7h-1.3zM1581.8 148.1h2v576h-2zM1586.8 148.1h1.6v64h-1.6zM1589.3 254.8h2v469.3h-2zM1594.3 276.1h2v448h-2zM1596.3 233.4h1.5v106.7h-1.5zM1615.8 276.1h2v554.7h-2zM1617.8 233.4h2v597.3h-2zM1619.8 190.8h1.3v640h-1.3zM1621.1 148.1h1.3v64h-1.3zM1628.4 148.1h1.6v64h-1.6zM1644.2 318.8h1.3v320h-1.3zM1581.1 318.8h1.3v256h-1.3zM1535.7 148.1h1.3v170.7h-1.3zM1531.9 148.1h1.3v149.3h-1.3zM1574.8 489.4h1.3v128h-1.3zM1593 276.1h1.3v128h-1.3zM1651.6 233.4h1.3v149.3h-1.3zM1557.5 148.1h1.3v106.7h-1.3zM1553.8 148.1h1.3v106.7h-1.3zM1640.4 574.8h1.3v213.3h-1.3zM1624.6 233.4h1.3v341.3h-1.3zM1624.6 660.1h1.3v170.7h-1.3zM1598.2 318.8h1.3v106.7h-1.3zM1631.1 190.8h1.3v213.3h-1.3zM1649.8 254.8h1.3v85.3h-1.3zM1615.4 553.4h1.3v106.7h-1.3zM1630.4 318.8h1.3v256h-1.3zM1537.7 190.8h1.3v170.7h-1.3zM1543 148.1h1.3v170.7h-1.3zM1611.9 510.8h1.3v85.3h-1.3zM1528.6 148.1h1.3v85.3h-1.3zM1523.8 254.8h1.3v85.3h-1.3zM1651.9 148.1h1.3v128h-1.3zM1579.3 254.8h1.3v277.3h-1.3zM1522.3 148.1h1.3v106.7h-1.3zM1537 148.1h1.3v192h-1.3zM1568.7 212.1h1.3v277.3h-1.3zM1604.2 361.4h1.3v256h-1.3zM1653.7 404.1h1.3v256h-1.3zM1539.6 148.1h1.3v85.3h-1.3zM1628.1 574.8h1.3v192h-1.3zM1563.1 190.8h1.3v234.7h-1.3zM1601.1 382.8h1.3v234.7h-1.3zM1526.6 148.1h1.3v85.3h-1.3zM1592.4 276.1h1.3v128h-1.3zM1520.2 148.1h1.3v170.7h-1.3zM1635.7 297.4h1.3v85.3h-1.3zM1548.2 297.4h1.3v85.3h-1.3zM1643.6 446.8h1.3v234.7h-1.3zM1615.9 382.8h1.3v213.3h-1.3zM1583.1 425.4h1.3v170.7h-1.3zM1631.8 382.8h1.3v256h-1.3zM1590.2 382.8h1.3v192h-1.3zM1567.8 148.1h1.3v298.7h-1.3z"/>
<path fill="#c4a265" d="M1300 894.8h3v21.3h-3zM1278.6 830.8h2v21.3h-2zM992 766.8h2.2v21.3h-2.2zM895 724.1h1.3v21.3h-1.3zM535 596.1h1.7v21.3h-1.7zM1403 1129.4h332.7v21.3h-332.7zM1735.7 1129.4h69.7v21.3h-69.7zM1805.4 1129.4h26.6v21.3h-26.6zM1857.3 1129.4h13.1v21.3h-13.1zM1870.4 1129.4h13.6v21.3h-13.6zM1912.7 1129.4h2.9v21.3h-2.9zM1403 1108.1h328v21.3h-328zM1731 1108.1h4.7v21.3h-4.7zM1735.7 1108.1h45.8v21.3h-45.8zM1781.5 1108.1h16v21.3h-16zM1797.5 1108.1h7.9v21.3h-7.9zM1805.4 1108.1h26.6v21.3h-26.6zM1403 1086.8h328v21.3h-328zM1731 1086.8h4.7v21.3h-4.7zM1735.7 1086.8h45.8v21.3h-45.8zM1781.5 1086.8h16v21.3h-16zM1797.5 1086.8h7.9v21.3h-7.9zM1805.4 1086.8h16.6v21.3h-16.6zM1822 1086.8h6v21.3h-6zM1828 1086.8h4v21.3h-4zM1403 1065.4h298.3v21.3h-298.3zM1701.3 1065.4h18.7v21.3h-18.7zM1720 1065.4h15.7v21.3h-15.7zM1735.7 1065.4h25.3v21.3h-25.3zM1761 1065.4h20.5v21.3h-20.5zM1781.5 1065.4h16v21.3h-16zM1797.5 1065.4h7.9v21.3h-7.9zM1805.4 1065.4h16.6v21.3h-16.6zM1822 1065.4h7.5v21.3h-7.5zM1403 1044.1h234.3v21.3h-234.3zM1637.3 1044.1h44.1v21.3h-44.1zM1681.4 1044.1h12.6v21.3h-12.6zM1694 1044.1h2v21.3h-2zM1696 1044.1h2v21.3h-2zM1698 1044.1h1.5v21.3h-1.5zM1699.5 1044.1h1.8v21.3h-1.8zM1701.3 1044.1h18.7v21.3h-18.7zM1720 1044.1h15.7v21.3h-15.7zM1735.7 1044.1h23.8v21.3h-23.8zM1403 1022.8h234.3v21.3h-234.3zM1637.3 1022.8h44.1v21.3h-44.1zM1681.4 1022.8h12.6v21.3h-12.6zM1694 1022.8h2.5v21.3h-2.5zM1696.5 1022.8h3v21.3h-3zM1701.3 1022.8h18.7v21.3h-18.7zM1720 1022.8h15.7v21.3h-15.7zM1735.7 1022.8h23.8v21.3h-23.8zM1403 1001.4h234.3v21.3h-234.3zM1637.3 1001.4h35.7v21.3h-35.7zM1673 1001.4h8.4v21.3h-8.4zM1681.4 1001.4h12.6v21.3h-12.6zM1694 1001.4h3v21.3h-3zM1697 1001.4h2.5v21.3h-2.5zM1701.3 1001.4h18.7v21.3h-18.7zM1720 1001.4h15.7v21.3h-15.7zM1735.7 1001.4h23.8v21.3h-23.8zM1403 980.1h234.3v21.3h-234.3zM1637.3 980.1h31.9v21.3h-31.9zM1403 958.8h234.3v21.3h-234.3zM1637.3 958.8h31.9v21.3h-31.9zM1403 937.4h234.3v21.3h-234.3zM1637.3 937.4h31.9v21.3h-31.9zM1403 916.1h234.3v21.3h-234.3zM1637.3 916.1h31.9v21.3h-31.9zM1403 894.8h234.3v21.3h-234.3zM1637.3 894.8h31.9v21.3h-31.9zM1403 873.4h221.3v21.3h-221.3zM1624.3 873.4h5.7v21.3h-5.7zM1630 873.4h3.5v21.3h-3.5zM1633.5 873.4h3.8v21.3h-3.8zM1637.3 873.4h31.9v21.3h-31.9zM1403 852.1h221.3v21.3h-221.3zM1624.3 852.1h5.7v21.3h-5.7zM1630 852.1h3.5v21.3h-3.5zM1633.5 852.1h3.8v21.3h-3.8zM1637.3 852.1h31.9v21.3h-31.9zM1403 830.8h221.3v21.3h-221.3zM1624.3 830.8h5.7v21.3h-5.7zM1630 830.8h3.5v21.3h-3.5zM1633.5 830.8h3.8v21.3h-3.8zM1637.3 830.8h31.9v21.3h-31.9zM1403 809.4h115.6v21.3h-115.6zM1518.6 809.4h96.4v21.3h-96.4zM1403 788.1h115.6v21.3h-115.6zM1518.6 788.1h96.4v21.3h-96.4zM1403 766.8h115.6v21.3h-115.6zM1518.6 766.8h91.4v21.3h-91.4zM1403 745.4h115.6v21.3h-115.6zM1518.6 745.4h86.4v21.3h-86.4zM1403 724.1h115.6v21.3h-115.6zM1518.6 724.1h86.4v21.3h-86.4zM1403 702.8h115.6v21.3h-115.6zM1518.6 702.8h61.4v21.3h-61.4zM1403 681.4h115.6v21.3h-115.6zM1518.6 681.4h54.9v21.3h-54.9zM1403 660.1h115.6v21.3h-115.6zM1518.6 660.1h54.9v21.3h-54.9zM1403 638.8h115.6v21.3h-115.6zM1518.6 638.8h54.9v21.3h-54.9zM1403 617.4h115.6v21.3h-115.6zM1518.6 617.4h54.9v21.3h-54.9zM1403 596.1h115.6v21.3h-115.6zM1518.6 596.1h54.9v21.3h-54.9zM1403 574.8h115.6v21.3h-115.6zM1518.6 574.8h46.4v21.3h-46.4zM1403 553.4h115.6v21.3h-115.6zM1518.6 553.4h37.9v21.3h-37.9zM1403 532.1h115.6v21.3h-115.6zM1518.6 532.1h37.9v21.3h-37.9zM1403 510.8h115.6v21.3h-115.6zM1518.6 510.8h37.9v21.3h-37.9zM1403 489.4h113.6v21.3h-113.6zM1516.6 489.4h2v21.3h-2zM1518.6 489.4h37.9v21.3h-37.9zM1403 468.1h113.6v21.3h-113.6zM1516.6 468.1h2v21.3h-2zM1518.6 468.1h34.4v21.3h-34.4zM1403 446.8h66.5v21.3h-66.5zM1469.5 446.8h41.5v21.3h-41.5zM1511 446.8h3v21.3h-3zM1514 446.8h2.6v21.3h-2.6zM1516.6 446.8h2v21.3h-2zM1518.6 446.8h34.4v21.3h-34.4zM1403 425.4h66.5v21.3h-66.5zM1469.5 425.4h41.5v21.3h-41.5zM1511 425.4h3v21.3h-3zM1514 425.4h2.6v21.3h-2.6zM1516.6 425.4h2v21.3h-2zM1518.6 425.4h34.4v21.3h-34.4zM1403 404.1h66.5v21.3h-66.5zM1469.5 404.1h46.9v21.3h-46.9zM1516.4 404.1h2.2v21.3h-2.2zM1518.6 404.1h34.4v21.3h-34.4zM1403 382.8h66.5v21.3h-66.5zM1469.5 382.8h46.9v21.3h-46.9zM1516.4 382.8h2.2v21.3h-2.2zM1518.6 382.8h34.4v21.3h-34.4zM1403 361.4h63v21.3h-63zM1466 361.4h1.2v21.3h-1.2zM1469.5 361.4h42.5v21.3h-42.5zM1512 361.4h4.4v21.3h-4.4zM1516.4 361.4h16.6v21.3h-16.6zM1533 361.4h12v21.3h-12zM1403 340.1h63v21.3h-63zM1466 340.1h1.2v21.3h-1.2zM1469.5 340.1h42.5v21.3h-42.5zM1512 340.1h4.4v21.3h-4.4zM1516.4 340.1h16.6v21.3h-16.6zM1403 318.8h63v21.3h-63zM1466 318.8h1.2v21.3h-1.2zM1469.5 318.8h39.9v21.3h-39.9zM1509.4 318.8h4.6v21.3h-4.6zM1403 297.4h60v21.3h-60zM1463 297.4h3v21.3h-3zM1466 297.4h1.2v21.3h-1.2zM1469.5 297.4h39.9v21.3h-39.9zM1509.4 297.4h4.6v21.3h-4.6zM1403 276.1h58.5v21.3h-58.5zM1461.5 276.1h2v21.3h-2zM1463.5 276.1h2.3v21.3h-2.3zM1465.8 276.1h1.4v21.3h-1.4zM1469.5 276.1h39.9v21.3h-39.9zM1403 254.8h58.5v21.3h-58.5zM1461.5 254.8h2v21.3h-2zM1463.5 254.8h2.3v21.3h-2.3zM1465.8 254.8h1.4v21.3h-1.4zM1469.5 254.8h39.9v21.3h-39.9zM1403 233.4h58.5v21.3h-58.5zM1461.5 233.4h2v21.3h-2zM1463.5 233.4h2.3v21.3h-2.3zM1465.8 233.4h1.4v21.3h-1.4zM1469.5 233.4h39.9v21.3h-39.9zM1403 212.1h58.5v21.3h-58.5zM1461.5 212.1h2v21.3h-2zM1463.5 212.1h2.3v21.3h-2.3zM1465.8 212.1h1.4v21.3h-1.4zM1469.5 212.1h39.9v21.3h-39.9zM1403 190.8h45.3v21.3h-45.3zM1448.3 190.8h9.7v21.3h-9.7zM1458 190.8h2v21.3h-2zM1460 190.8h2v21.3h-2zM1462 190.8h2v21.3h-2zM1464 190.8h2.6v21.3h-2.6zM1469.5 190.8h39.9v21.3h-39.9zM1403 169.4h45.3v21.3h-45.3zM1448.3 169.4h9.7v21.3h-9.7zM1458 169.4h2v21.3h-2zM1460 169.4h2v21.3h-2zM1462 169.4h2v21.3h-2zM1464 169.4h2.6v21.3h-2.6zM1469.5 169.4h39.9v21.3h-39.9zM1403 148.1h45.3v21.3h-45.3zM1448.3 148.1h9.7v21.3h-9.7zM1458 148.1h2v21.3h-2zM1460 148.1h2v21.3h-2zM1462 148.1h2v21.3h-2zM1464 148.1h2.6v21.3h-2.6zM1469.5 148.1h39.9v21.3h-39.9zM1509.4 148.1h6v149.3h-6zM1515.4 148.1h2.5v192h-2.5zM1517.9 148.1h3v192h-3zM1520.9 148.1h8v192h-8zM1528.9 148.1h5v192h-5zM1533.9 148.1h1.3v213.3h-1.3zM1535.2 148.1h4v213.3h-4zM1541.2 148.1h8v213.3h-8zM1550.5 148.1h2v234.7h-2zM1552.5 148.1h1.5v234.7h-1.5zM1554 148.1h3v341.3h-3zM1557 148.1h4v426.7h-4zM1561 148.1h2v426.7h-2zM1563 382.8h3v192h-3zM1566 148.1h5v448h-5zM1571 148.1h1.5v448h-1.5zM1572.5 148.1h6v448h-6zM1578.5 148.1h2v554.7h-2zM1580.5 233.4h1.3v490.7h-1.3zM1583.8 233.4h3v490.7h-3zM1586.8 212.1h2.5v512h-2.5zM1591.3 169.4h3v554.7h-3zM1596.3 340.1h1.5v384h-1.5zM1597.8 297.4h2v426.7h-2zM1599.8 254.8h6v469.3h-6zM1605.8 340.1h6v426.7h-6zM1611.8 318.8h4v469.3h-4zM1621.1 212.1h1.3v618.7h-1.3zM1622.4 254.8h2v576h-2zM1624.4 233.4h2v597.3h-2zM1626.4 212.1h2v618.7h-2zM1628.4 212.1h2v618.7h-2zM1630.4 212.1h2.5v618.7h-2.5zM1632.9 148.1h3v682.7h-3zM1635.9 148.1h2v682.7h-2zM1637.9 148.1h5v682.7h-5zM1642.9 148.1h8v682.7h-8zM1650.9 148.1h5.6v682.7h-5.6zM1615 809.4h0.8v21.3h-0.8zM1615 788.1h0.8v21.3h-0.8zM1610 766.8h1.8v21.3h-1.8zM1605 745.4h0.8v21.3h-0.8zM1605 724.1h0.8v21.3h-0.8zM1580 702.8h0.5v21.3h-0.5zM1573.5 681.4h5v21.3h-5zM1573.5 660.1h5v21.3h-5zM1573.5 638.8h5v21.3h-5zM1573.5 617.4h5v21.3h-5zM1573.5 596.1h5v21.3h-5zM1565 574.8h1v21.3h-1zM1556.5 553.4h0.5v21.3h-0.5zM1556.5 532.1h0.5v21.3h-0.5zM1556.5 510.8h0.5v21.3h-0.5zM1556.5 489.4h0.5v21.3h-0.5zM1553 468.1h1v21.3h-1zM1553 446.8h1v21.3h-1zM1553 425.4h1v21.3h-1zM1553 404.1h1v21.3h-1zM1553 382.8h1v21.3h-1zM1545 361.4h4.2v21.3h-4.2zM1533 340.1h0.9v21.3h-0.9zM1514 318.8h1.4v21.3h-1.4zM1514 297.4h1.4v21.3h-1.4zM1656.5 425.4h2v405.3h-2zM1658.5 425.4h2.5v405.3h-2.5zM1661 425.4h2v405.3h-2zM1663 468.1h4v362.7h-4zM1667 404.1h2.2v426.7h-2.2zM1637.3 809.4h27.7v21.3h-27.7zM1637.3 788.1h27.7v21.3h-27.7zM1637.3 766.8h22.7v21.3h-22.7zM1637.3 745.4h22.7v21.3h-22.7zM1637.3 724.1h22.7v21.3h-22.7z"/>
<path fill="none" stroke="#8e8e8e" stroke-width="0.7" d="M449.9 1151.1h1470.2"/>
<path fill="none" stroke="#6788a5" stroke-width="0.7" d="M996.2 148.4h1.8M1020 148.4h3M996.2 169.8h1.8M1020 169.8h3M996.2 191.2h1.8M1020 191.2h3M996.2 212.4h1.8M1020 212.4h3M996.2 233.8h1.8M1020 233.8h3M996.2 255.2h1.8M1020 255.2h3M996.2 276.5h1.8M1020 276.5h3M996.2 297.8h1.8M1020 297.8h3.7M1056 297.8h6M996.2 319.2h6.8M1020 319.2h8.2M1056 319.2h6M996.2 340.5h6.8M1020 340.5h8.2M1056 340.5h6M996.2 361.8h6.8M1020 361.8h8.2M1056 361.8h6M996.2 383.2h7.5M1020 383.2h8.7M1056 383.2h6M1067 383.2h3M1072.5 383.2h1.2M996.2 404.5h7.5M1020 404.5h8.7M1056 404.5h6M1067 404.5h3M1072.5 404.5h1.2M996.2 425.8h7.5M1020 425.8h8.7M1056 425.8h6M1067 425.8h3M1072.5 425.8h1.2M996.2 447.2h11.8M1009.5 447.2h1.5M1011.5 447.2h1M1020 447.2h8.7M1056 447.2h10M1067 447.2h3M1070.5 447.2h1.5M1072.5 447.2h1.2M996.2 468.5h11.8M1009.5 468.5h1.5M1011.5 468.5h1M1020 468.5h8.7M1054.2 468.5h21.8M996.2 489.8h11.8M1009.5 489.8h1.5M1011.5 489.8h1M1020 489.8h8.7M1054.2 489.8h25.8M996.2 511.2h17.5M1020 511.2h8.7M1054.2 511.2h29.5M996.2 532.5h17.5M1020 532.5h8.7M1054.2 532.5h29.5M996.2 553.8h18.8M1020 553.8h11M1055.8 553.8h34.2M887.3 575.1h3.2M996.2 575.1h18.8M1020 575.1h11M1055.8 575.1h34.2M887.3 596.5h3.2M996.2 596.5h21.3M1019 596.5h13.5M1055.8 596.5h43.2M887.3 617.8h3.2M996.2 617.8h41.3M1055.8 617.8h49.2M887.3 639.1h3.2M996.2 639.1h41.3M1055.8 639.1h49.7M887.3 660.5h3.2M996.2 660.5h41.3M1055.8 660.5h50.2M887.3 681.8h3.2M915.3 681.8h3M996.2 681.8h42.5M1055.8 681.8h50.2M768.3 703.1h3.3M887.3 703.1h3.2M915.3 703.1h3M996.2 703.1h42.5M1055.8 703.1h57.2M768.3 724.5h3.3M848.3 724.5h1.7M887.3 724.5h3.2M896.3 724.5h1M915.3 724.5h3M996.2 724.5h42.5M1055.8 724.5h67.7M1133.6 724.5h1.2M1138 724.5h1.4M1142 724.5h2M1156 724.5h4M1161.6 724.5h1.2M1171 724.5h7M1194 724.5h4M1201.6 724.5h1.2M1205.6 724.5h1.2M1211.6 724.5h1.2M1218 724.5h4M1224 724.5h2M1229 724.5h4M1237 724.5h6M1249.6 724.5h1.2M1268 724.5h2M1275.6 724.5h1M768.3 745.8h3.3M808.3 745.8h2.3M848.3 745.8h1.7M887.3 745.8h3.2M895 745.8h2.3M915 745.8h5M940 745.8h3.3M996.2 745.8h42.5M1055.8 745.8h70.2M1134 745.8h1M1138 745.8h1.2M1141 745.8h1.2M1144 745.8h2M1147.6 745.8h1.2M1156 745.8h10M1170 745.8h8M1194 745.8h1.6M1198 745.8h1.6M1201 745.8h1.4M1205.6 745.8h1.2M1211.6 745.8h1.2M1218 745.8h10M1237 745.8h8M1249 745.8h2M1254.6 745.8h1.2M1268 745.8h4M1275.6 745.8h1M689.3 767.1h5.7M766 767.1h9M808.3 767.1h2.3M847.3 767.1h7.7M860.7 767.1h12.7M887.3 767.1h3.2M895 767.1h5M910 767.1h10M940 767.1h6.7M955 767.1h5M965 767.1h10M996.2 767.1h48.3M1055.8 767.1h71.2M1138 767.1h10M1156 767.1h24M1181 767.1h1.4M1184.4 767.1h1.6M1194 767.1h20M1218 767.1h17M1236 767.1h8M1246 767.1h2M1250 767.1h4M1268 767.1h4M1275.6 767.1h1M1331 767.1h17M689.3 788.5h5.7M766 788.5h9M808.3 788.5h2.3M830.7 788.5h9.3M847.3 788.5h7.7M860.7 788.5h12.7M887.3 788.5h3.2M895 788.5h5M910 788.5h10M940 788.5h6.7M955 788.5h5M965 788.5h10M996.2 788.5h48.8M1055.8 788.5h72.2M1136 788.5h79M1217 788.5h39M1269 788.5h3M1274.6 788.5h1M1331 788.5h18M450 809.8h19.3M473.3 809.8h11.7M486.7 809.8h2.3M491.7 809.8h5M498.3 809.8h2.3M514 809.8h2M529.3 809.8h5M535 809.8h1.7M551 809.8h10.7M583.3 809.8h1.3M589.3 809.8h1.3M610 809.8h7.7M630 809.8h9M646.7 809.8h1.3M659 809.8h3.7M668.3 809.8h2.3M689.3 809.8h6.7M703.3 809.8h3.3M721.7 809.8h33.3M758.3 809.8h2.3M766 809.8h10M783.3 809.8h7.3M799.3 809.8h1.3M802.7 809.8h1.3M808.3 809.8h2.3M813.3 809.8h1.7M826.7 809.8h2M830.7 809.8h11M847.3 809.8h29.3M878.7 809.8h1.3M883.3 809.8h1.7M888.3 809.8h2.3M895 809.8h10M910 809.8h17.3M930 809.8h3.3M938.3 809.8h8.3M949 809.8h2.7M955 809.8h5M965 809.8h5M972.3 809.8h3.3M978.3 809.8h3.3M996.2 809.8h51.3M1055.8 809.8h73.2M1130 809.8h4M1136 809.8h124M1264 809.8h14M1331 809.8h21M450 831.1h58.3M514 831.1h23.7M551 831.1h20M583.3 831.1h9M610 831.1h14M630 831.1h16.7M659 831.1h37.7M703.3 831.1h3.3M709.3 831.1h1.3M713.3 831.1h1.7M721.7 831.1h70M796.7 831.1h7.3M808.3 831.1h5M823.3 831.1h5M830.7 831.1h76M910 831.1h76.7M996 831.1h54M1056 831.1h206M1264 831.1h14M1280.6 831.1h3.4M1305.8 831.1h1.6M1318.8 831.1h1.6M1330 831.1h25.5M1357.5 831.1h4M1389.5 831.1h2.8M449.9 852.5h370.1M823.3 852.5h225.7M1052.5 852.5h2.5M1056 852.5h206M1264 852.5h20M1304.5 852.5h1.8M1310.7 852.5h2.8M1320 852.5h1.8M1331 852.5h23.7M1357.5 852.5h4.5M1389.5 852.5h2.8M449.9 873.8h371.1M823 873.8h227M1052.5 873.8h209.5M1264 873.8h20M1286 873.8h9M1305 873.8h5M1311 873.8h1M1319 873.8h2.5M1326.5 873.8h3.5M1331 873.8h23.7M1356.5 873.8h10.2M1387 873.8h1.6M1398.7 873.8h4.3M449.9 895.1h603.1M1055 895.1h241M1304.5 895.1h62.5M1381 895.1h2M1384 895.1h2M1387 895.1h5M1398 895.1h5M449.9 916.5h846.1M1300 916.5h2M1304.5 916.5h68.5M1376 916.5h2M1380 916.5h18M1400 916.5h3M449.9 937.8h848.6M1300 937.8h3M1304.5 937.8h69.5M1378 937.8h25M449.9 959.1h928.1M1379.7 959.1h23.3M449.9 980.5h953.1M449.9 1001.8h953.1M449.9 1023.1h953.1M449.9 1044.4h953.1M449.9 1065.8h953.1M449.9 1087.1h953.1M449.9 1108.4h953.1M449.9 1129.8h953.1M1832 1129.8h25.3M1884 1129.8h28.7M1915.6 1129.8h4.4"/>
<path fill="none" stroke="#9a7f4c" stroke-width="0.7" d="M1403 148.4h63.6M1469.5 148.4h45.9M1517.9 148.4h16M1535.2 148.4h4M1541.2 148.4h8M1554 148.4h7M1566 148.4h5M1572.5 148.4h6M1632.9 148.4h3M1637.9 148.4h18.6M1403 169.8h63.6M1469.5 169.8h45.9M1517.9 169.8h16M1535.2 169.8h4M1541.2 169.8h8M1554 169.8h7M1566 169.8h5M1572.5 169.8h6M1591.3 169.8h3M1632.9 169.8h3M1637.9 169.8h18.6M1403 191.2h63.6M1469.5 191.2h45.9M1517.9 191.2h16M1535.2 191.2h4M1541.2 191.2h8M1554 191.2h7M1566 191.2h5M1572.5 191.2h6M1591.3 191.2h3M1632.9 191.2h3M1637.9 191.2h18.6M1403 212.4h64.2M1469.5 212.4h45.9M1517.9 212.4h16M1535.2 212.4h4M1541.2 212.4h8M1554 212.4h7M1566 212.4h5M1572.5 212.4h6M1591.3 212.4h3M1632.9 212.4h3M1637.9 212.4h18.6M1403 233.8h64.2M1469.5 233.8h45.9M1517.9 233.8h16M1535.2 233.8h4M1541.2 233.8h8M1554 233.8h7M1566 233.8h5M1572.5 233.8h6M1583.8 233.8h3M1591.3 233.8h3M1632.9 233.8h3M1637.9 233.8h18.6M1403 255.2h64.2M1469.5 255.2h45.9M1517.9 255.2h16M1535.2 255.2h4M1541.2 255.2h8M1554 255.2h7M1566 255.2h5M1572.5 255.2h6M1583.8 255.2h3M1591.3 255.2h3M1599.8 255.2h6M1632.9 255.2h3M1637.9 255.2h18.6M1403 276.5h64.2M1469.5 276.5h45.9M1517.9 276.5h16M1535.2 276.5h4M1541.2 276.5h8M1554 276.5h7M1566 276.5h5M1572.5 276.5h6M1583.8 276.5h3M1591.3 276.5h3M1599.8 276.5h6M1632.9 276.5h3M1637.9 276.5h18.6M1403 297.8h64.2M1469.5 297.8h45.9M1517.9 297.8h16M1535.2 297.8h4M1541.2 297.8h8M1554 297.8h7M1566 297.8h5M1572.5 297.8h6M1583.8 297.8h3M1591.3 297.8h3M1599.8 297.8h6M1632.9 297.8h3M1637.9 297.8h18.6M1403 319.2h64.2M1469.5 319.2h45.9M1517.9 319.2h16M1535.2 319.2h4M1541.2 319.2h8M1554 319.2h7M1566 319.2h5M1572.5 319.2h6M1583.8 319.2h3M1591.3 319.2h3M1599.8 319.2h6M1611.8 319.2h4M1632.9 319.2h3M1637.9 319.2h18.6M1403 340.5h64.2M1469.5 340.5h64.4M1535.2 340.5h4M1541.2 340.5h8M1554 340.5h7M1566 340.5h5M1572.5 340.5h6M1583.8 340.5h3M1591.3 340.5h3M1599.8 340.5h16M1632.9 340.5h3M1637.9 340.5h18.6M1403 361.8h64.2M1469.5 361.8h79.7M1554 361.8h7M1566 361.8h5M1572.5 361.8h6M1583.8 361.8h3M1591.3 361.8h3M1599.8 361.8h16M1632.9 361.8h3M1637.9 361.8h18.6M1403 383.2h158M1563 383.2h8M1572.5 383.2h6M1583.8 383.2h3M1591.3 383.2h3M1599.8 383.2h16M1632.9 383.2h3M1637.9 383.2h18.6M1403 404.5h158M1563 404.5h8M1572.5 404.5h6M1583.8 404.5h3M1591.3 404.5h3M1599.8 404.5h16M1632.9 404.5h3M1637.9 404.5h18.6M1667 404.5h2.2M1403 425.8h158M1563 425.8h8M1572.5 425.8h6M1583.8 425.8h3M1591.3 425.8h3M1599.8 425.8h16M1632.9 425.8h3M1637.9 425.8h18.6M1667 425.8h2.2M1403 447.2h158M1563 447.2h8M1572.5 447.2h6M1583.8 447.2h3M1591.3 447.2h3M1599.8 447.2h16M1632.9 447.2h3M1637.9 447.2h18.6M1667 447.2h2.2M1403 468.5h158M1563 468.5h8M1572.5 468.5h6M1583.8 468.5h3M1591.3 468.5h3M1599.8 468.5h16M1632.9 468.5h3M1637.9 468.5h18.6M1663 468.5h6.2M1403 489.8h158M1563 489.8h8M1572.5 489.8h6M1583.8 489.8h3M1591.3 489.8h3M1599.8 489.8h16M1632.9 489.8h3M1637.9 489.8h18.6M1663 489.8h6.2M1403 511.2h158M1563 511.2h8M1572.5 511.2h6M1583.8 511.2h3M1591.3 511.2h3M1599.8 511.2h16M1632.9 511.2h3M1637.9 511.2h18.6M1663 511.2h6.2M1403 532.5h158M1563 532.5h8M1572.5 532.5h6M1583.8 532.5h3M1591.3 532.5h3M1599.8 532.5h16M1632.9 532.5h3M1637.9 532.5h18.6M1663 532.5h6.2M1403 553.8h158M1563 553.8h8M1572.5 553.8h6M1583.8 553.8h3M1591.3 553.8h3M1599.8 553.8h16M1632.9 553.8h3M1637.9 553.8h18.6M1663 553.8h6.2M1403 575.1h168M1572.5 575.1h6M1583.8 575.1h3M1591.3 575.1h3M1599.8 575.1h16M1632.9 575.1h3M1637.9 575.1h18.6M1663 575.1h6.2M1403 596.5h175.5M1583.8 596.5h3M1591.3 596.5h3M1599.8 596.5h16M1632.9 596.5h3M1637.9 596.5h18.6M1663 596.5h6.2M1403 617.8h175.5M1583.8 617.8h3M1591.3 617.8h3M1599.8 617.8h16M1632.9 617.8h3M1637.9 617.8h18.6M1663 617.8h6.2M1403 639.1h175.5M1583.8 639.1h3M1591.3 639.1h3M1599.8 639.1h16M1632.9 639.1h3M1637.9 639.1h18.6M1663 639.1h6.2M1403 660.5h175.5M1583.8 660.5h3M1591.3 660.5h3M1599.8 660.5h16M1632.9 660.5h3M1637.9 660.5h18.6M1663 660.5h6.2M1403 681.8h175.5M1583.8 681.8h3M1591.3 681.8h3M1599.8 681.8h16M1632.9 681.8h3M1637.9 681.8h18.6M1663 681.8h6.2M1403 703.1h177.5M1583.8 703.1h3M1591.3 703.1h3M1599.8 703.1h16M1632.9 703.1h3M1637.9 703.1h18.6M1663 703.1h6.2M895 724.5h1.3M1403 724.5h212.8M1632.9 724.5h3M1637.3 724.5h22.7M1663 724.5h6.2M1403 745.8h212.8M1632.9 745.8h3M1637.3 745.8h22.7M1663 745.8h6.2M1403 767.1h212.8M1632.9 767.1h3M1637.3 767.1h22.7M1663 767.1h6.2M1403 788.5h212.8M1632.9 788.5h3M1637.3 788.5h31.9M1403 809.8h212.8M1632.9 809.8h3M1637.3 809.8h31.9M1278.6 831.1h2M1403 831.1h266.2M1403 852.5h266.2M1403 873.8h266.2M1300 895.1h3M1403 895.1h266.2M1403 916.5h266.2M1403 937.8h266.2M1403 959.1h266.2M1403 980.5h266.2M1403 1001.8h296.5M1701.3 1001.8h58.2M1403 1023.1h296.5M1701.3 1023.1h58.2M1403 1044.4h356.5M1403 1065.8h426.5M1403 1087.1h429M1403 1108.4h429M1403 1129.8h429M1857.3 1129.8h26.7M1912.7 1129.8h2.9"/>
<path fill="none" stroke="#8e8e8e" stroke-width="0.7" d="M450.2 1150.8v21.3M1920.3 1150.8v21.3"/>
<path fill="none" stroke="#6788a5" stroke-width="0.7" d="M450.2 1129.4v21.3M1403.3 1129.4v21.3M450.2 1108.1v21.3M1403.3 1108.1v21.3M450.2 1086.8v21.3M1403.3 1086.8v21.3M450.2 1065.4v21.3M1403.3 1065.4v21.3M450.2 1044.1v21.3M1403.3 1044.1v21.3M450.2 1022.8v21.3M1330.8 1022.8v21.3M1385.3 1022.8v21.3M1392.3 1022.8v21.3M1403.3 1022.8v21.3M450.2 1001.4v21.3M1330.8 1001.4v21.3M1361.8 1001.4v21.3M1377.3 1001.4v21.3M1379.8 1001.4v21.3M1381.8 1001.4v21.3M1386.3 1001.4v21.3M1393.3 1001.4v21.3M1403.3 1001.4v21.3M450.2 980.1v21.3M1304.8 980.1v21.3M1330.8 980.1v21.3M1357.8 980.1v21.3M1377.3 980.1v21.3M1380.3 980.1v21.3M1383.3 980.1v21.3M1386.3 980.1v21.3M1390.3 980.1v21.3M1396.3 980.1v21.3M1403.3 980.1v21.3M450.2 958.8v21.3M1285.3 958.8v21.3M1300.3 958.8v21.3M1304.8 958.8v21.3M1321.3 958.8v21.3M1330.8 958.8v21.3M1355.3 958.8v21.3M1375.3 958.8v21.3M1378.3 958.8v21.3M1380 958.8v21.3M1383.3 958.8v21.3M1387.3 958.8v21.3M1389.3 958.8v21.3M1393.3 958.8v21.3M1398.3 958.8v21.3M1403.3 958.8v21.3M450.2 937.4v21.3M1055.3 937.4v21.3M1264.8 937.4v21.3M1272.3 937.4v21.3M1275.3 937.4v21.3M1278.3 937.4v21.3M1281.3 937.4v21.3M1283.8 937.4v21.3M1286.3 937.4v21.3M1290.3 937.4v21.3M1294.3 937.4v21.3M1298.8 937.4v21.3M1300.3 937.4v21.3M1303.3 937.4v21.3M1304.8 937.4v21.3M1321.3 937.4v21.3M1330.3 937.4v21.3M1355.3 937.4v21.3M1374.3 937.4v21.3M1378.3 937.4v21.3M1381.3 937.4v21.3M1385.3 937.4v21.3M1390.3 937.4v21.3M1395.3 937.4v21.3M1400.3 937.4v21.3M1403.3 937.4v21.3M450.2 916.1v21.3M1055.3 916.1v21.3M1264.8 916.1v21.3M1270.3 916.1v21.3M1273.3 916.1v21.3M1277.3 916.1v21.3M1280.3 916.1v21.3M1284.3 916.1v21.3M1288.3 916.1v21.3M1292.3 916.1v21.3M1296.3 916.1v21.3M1300.3 916.1v21.3M1302.3 916.1v21.3M1304.8 916.1v21.3M1320.3 916.1v21.3M1330.3 916.1v21.3M1356.3 916.1v21.3M1373.3 916.1v21.3M1376.3 916.1v21.3M1378.3 916.1v21.3M1380.3 916.1v21.3M1385.3 916.1v21.3M1390.3 916.1v21.3M1394.3 916.1v21.3M1398.3 916.1v21.3M1400.3 916.1v21.3M1403.3 916.1v21.3M450.2 894.8v21.3M830.4 894.8v21.3M996.4 894.8v21.3M1040.3 894.8v21.3M1044.3 894.8v21.3M1047.3 894.8v21.3M1050.3 894.8v21.3M1053.3 894.8v21.3M1055.3 894.8v21.3M1264.3 894.8v21.3M1279.3 894.8v21.3M1281.8 894.8v21.3M1284.3 894.8v21.3M1296.3 894.8v21.3M1304.8 894.8v21.3M1318.3 894.8v21.3M1320.3 894.8v21.3M1323.3 894.8v21.3M1326.3 894.8v21.3M1329.3 894.8v21.3M1330.3 894.8v21.3M1367.3 894.8v21.3M1381.3 894.8v21.3M1383.3 894.8v21.3M1384.3 894.8v21.3M1386.3 894.8v21.3M1387.3 894.8v21.3M1392.3 894.8v21.3M1398.3 894.8v21.3M1403.3 894.8v21.3M450.2 873.4v21.3M721.4 873.4v21.3M765.4 873.4v21.3M799.4 873.4v21.3M803.4 873.4v21.3M806.4 873.4v21.3M810.4 873.4v21.3M813.4 873.4v21.3M816.4 873.4v21.3M818.4 873.4v21.3M821.4 873.4v21.3M823.4 873.4v21.3M826.4 873.4v21.3M830.4 873.4v21.3M896.4 873.4v21.3M948.4 873.4v21.3M965.4 873.4v21.3M977.9 873.4v21.3M986.4 873.4v21.3M991.4 873.4v21.3M996.4 873.4v21.3M1042.8 873.4v21.3M1045.3 873.4v21.3M1047.3 873.4v21.3M1050.3 873.4v21.3M1052.8 873.4v21.3M1055.8 873.4v21.3M1248.3 873.4v21.3M1262.3 873.4v21.3M1264.3 873.4v21.3M1270.3 873.4v21.3M1277.3 873.4v21.3M1284.3 873.4v21.3M1286.3 873.4v21.3M1295.3 873.4v21.3M1305.3 873.4v21.3M1310.3 873.4v21.3M1311.3 873.4v21.3M1312.3 873.4v21.3M1319.3 873.4v21.3M1321.8 873.4v21.3M1326.8 873.4v21.3M1330.3 873.4v21.3M1331.3 873.4v21.3M1342.3 873.4v21.3M1355 873.4v21.3M1356.8 873.4v21.3M1362.3 873.4v21.3M1367 873.4v21.3M1387.3 873.4v21.3M1388.9 873.4v21.3M1399 873.4v21.3M1403.3 873.4v21.3M450.2 852.1v21.3M513.6 852.1v21.3M551.4 852.1v21.3M583.1 852.1v21.3M609.6 852.1v21.3M630.4 852.1v21.3M647.1 852.1v21.3M659.4 852.1v21.3M670.4 852.1v21.3M677.1 852.1v21.3M685.4 852.1v21.3M690.4 852.1v21.3M697.1 852.1v21.3M703.6 852.1v21.3M706.4 852.1v21.3M708.9 852.1v21.3M711.4 852.1v21.3M713.4 852.1v21.3M715.4 852.1v21.3M717.4 852.1v21.3M719.4 852.1v21.3M722.1 852.1v21.3M765.4 852.1v21.3M793.6 852.1v21.3M798.6 852.1v21.3M803.6 852.1v21.3M806.4 852.1v21.3M808.4 852.1v21.3M810.9 852.1v21.3M813.4 852.1v21.3M815.4 852.1v21.3M817.4 852.1v21.3M820.4 852.1v21.3M823.6 852.1v21.3M831.1 852.1v21.3M897.1 852.1v21.3M910.4 852.1v21.3M920.4 852.1v21.3M932.1 852.1v21.3M940.4 852.1v21.3M948.6 852.1v21.3M960.4 852.1v21.3M962.4 852.1v21.3M964.4 852.1v21.3M966.4 852.1v21.3M968.4 852.1v21.3M970.4 852.1v21.3M987.1 852.1v21.3M989.4 852.1v21.3M991.4 852.1v21.3M993.4 852.1v21.3M996.4 852.1v21.3M1042.8 852.1v21.3M1044.8 852.1v21.3M1046.8 852.1v21.3M1049.3 852.1v21.3M1052.8 852.1v21.3M1055.3 852.1v21.3M1056.3 852.1v21.3M1138.3 852.1v21.3M1217.3 852.1v21.3M1244.3 852.1v21.3M1248.3 852.1v21.3M1262.3 852.1v21.3M1264.3 852.1v21.3M1271.3 852.1v21.3M1277.3 852.1v21.3M1284.3 852.1v21.3M1304.8 852.1v21.3M1306.6 852.1v21.3M1311 852.1v21.3M1313.8 852.1v21.3M1320.3 852.1v21.3M1322.1 852.1v21.3M1331.3 852.1v21.3M1343.3 852.1v21.3M1355 852.1v21.3M1357.8 852.1v21.3M1362.3 852.1v21.3M1389.8 852.1v21.3M1392.6 852.1v21.3M450.4 830.8v21.3M473.7 830.8v21.3M487 830.8v21.3M493 830.8v21.3M497.7 830.8v21.3M499.7 830.8v21.3M501.4 830.8v21.3M503 830.8v21.3M504.7 830.8v21.3M506.4 830.8v21.3M508.7 830.8v21.3M514.4 830.8v21.3M529.7 830.8v21.3M538 830.8v21.3M551.4 830.8v21.3M562 830.8v21.3M567 830.8v21.3M569 830.8v21.3M571.4 830.8v21.3M583.7 830.8v21.3M588.7 830.8v21.3M592.7 830.8v21.3M610.4 830.8v21.3M618.7 830.8v21.3M624.4 830.8v21.3M630.4 830.8v21.3M637 830.8v21.3M639.4 830.8v21.3M641.4 830.8v21.3M643.4 830.8v21.3M645.4 830.8v21.3M647 830.8v21.3M659.4 830.8v21.3M670.4 830.8v21.3M673 830.8v21.3M675.7 830.8v21.3M678.4 830.8v21.3M681 830.8v21.3M683.7 830.8v21.3M686.4 830.8v21.3M689 830.8v21.3M692.7 830.8v21.3M697 830.8v21.3M703.7 830.8v21.3M707 830.8v21.3M709.7 830.8v21.3M711 830.8v21.3M713.7 830.8v21.3M715.4 830.8v21.3M722 830.8v21.3M733.7 830.8v21.3M742 830.8v21.3M750.4 830.8v21.3M758.7 830.8v21.3M760.4 830.8v21.3M762 830.8v21.3M763.7 830.8v21.3M765.4 830.8v21.3M777 830.8v21.3M783.7 830.8v21.3M792 830.8v21.3M797 830.8v21.3M804.4 830.8v21.3M808.7 830.8v21.3M813.7 830.8v21.3M823.7 830.8v21.3M825.7 830.8v21.3M827 830.8v21.3M828.7 830.8v21.3M831 830.8v21.3M847.7 830.8v21.3M861 830.8v21.3M873.7 830.8v21.3M888.7 830.8v21.3M895.4 830.8v21.3M907 830.8v21.3M910.4 830.8v21.3M920.4 830.8v21.3M923 830.8v21.3M925.7 830.8v21.3M928.4 830.8v21.3M931 830.8v21.3M933.7 830.8v21.3M937 830.8v21.3M940.4 830.8v21.3M948.7 830.8v21.3M960.4 830.8v21.3M963 830.8v21.3M965.7 830.8v21.3M968.4 830.8v21.3M971 830.8v21.3M973.7 830.8v21.3M977 830.8v21.3M980.4 830.8v21.3M983.7 830.8v21.3M987 830.8v21.3M996.4 830.8v21.3M1042.3 830.8v21.3M1044.3 830.8v21.3M1046.3 830.8v21.3M1048.3 830.8v21.3M1050.3 830.8v21.3M1056.3 830.8v21.3M1124.8 830.8v21.3M1127.3 830.8v21.3M1130.3 830.8v21.3M1133.3 830.8v21.3M1136.3 830.8v21.3M1140.8 830.8v21.3M1193.9 830.8v21.3M1217.3 830.8v21.3M1236.3 830.8v21.3M1248.3 830.8v21.3M1262.3 830.8v21.3M1264.3 830.8v21.3M1271.3 830.8v21.3M1278.3 830.8v21.3M1280.9 830.8v21.3M1284.3 830.8v21.3M1306.1 830.8v21.3M1307.8 830.8v21.3M1319.1 830.8v21.3M1320.8 830.8v21.3M1330.3 830.8v21.3M1343.3 830.8v21.3M1355.8 830.8v21.3M1357.8 830.8v21.3M1361.8 830.8v21.3M1389.8 830.8v21.3M1392.6 830.8v21.3M450.4 809.4v21.3M452.4 809.4v21.3M454.4 809.4v21.3M456.4 809.4v21.3M458.4 809.4v21.3M460.4 809.4v21.3M462.4 809.4v21.3M464.4 809.4v21.3M466.4 809.4v21.3M469.7 809.4v21.3M473.7 809.4v21.3M477 809.4v21.3M480.4 809.4v21.3M485.4 809.4v21.3M487 809.4v21.3M489.4 809.4v21.3M492 809.4v21.3M494.7 809.4v21.3M497 809.4v21.3M498.7 809.4v21.3M501 809.4v21.3M514.4 809.4v21.3M516.4 809.4v21.3M529.7 809.4v21.3M534.7 809.4v21.3M535.4 809.4v21.3M537 809.4v21.3M551.4 809.4v21.3M557 809.4v21.3M562 809.4v21.3M583.7 809.4v21.3M585 809.4v21.3M589.7 809.4v21.3M591 809.4v21.3M610.4 809.4v21.3M614.4 809.4v21.3M618 809.4v21.3M630.4 809.4v21.3M633 809.4v21.3M635.7 809.4v21.3M639.4 809.4v21.3M647 809.4v21.3M648.4 809.4v21.3M659.4 809.4v21.3M663 809.4v21.3M668.7 809.4v21.3M671 809.4v21.3M689.7 809.4v21.3M692.7 809.4v21.3M696.4 809.4v21.3M703.7 809.4v21.3M707 809.4v21.3M722 809.4v21.3M730.4 809.4v21.3M735.4 809.4v21.3M743.7 809.4v21.3M748.7 809.4v21.3M752 809.4v21.3M755.4 809.4v21.3M758.7 809.4v21.3M761 809.4v21.3M766.4 809.4v21.3M770.4 809.4v21.3M776.4 809.4v21.3M783.7 809.4v21.3M787 809.4v21.3M791 809.4v21.3M799.7 809.4v21.3M801 809.4v21.3M803 809.4v21.3M804.4 809.4v21.3M808.7 809.4v21.3M811 809.4v21.3M813.7 809.4v21.3M815.4 809.4v21.3M827 809.4v21.3M829 809.4v21.3M831 809.4v21.3M842 809.4v21.3M847.7 809.4v21.3M855.4 809.4v21.3M861 809.4v21.3M873.7 809.4v21.3M877 809.4v21.3M879 809.4v21.3M880.4 809.4v21.3M883.7 809.4v21.3M885.4 809.4v21.3M888.7 809.4v21.3M891 809.4v21.3M895.4 809.4v21.3M900.4 809.4v21.3M905.4 809.4v21.3M910.4 809.4v21.3M915.4 809.4v21.3M920.4 809.4v21.3M923.7 809.4v21.3M927.7 809.4v21.3M930.4 809.4v21.3M933.7 809.4v21.3M938.7 809.4v21.3M943 809.4v21.3M947 809.4v21.3M949.4 809.4v21.3M952 809.4v21.3M955.4 809.4v21.3M960.4 809.4v21.3M965.4 809.4v21.3M970.4 809.4v21.3M972.7 809.4v21.3M976 809.4v21.3M978.7 809.4v21.3M982 809.4v21.3M992.4 788.1v64M994.6 788.1v64M487.7 788.1v21.3M489 788.1v21.3M493 766.8v42.7M494.7 766.8v42.7M499.7 788.1v21.3M501 788.1v21.3M514.4 766.8v42.7M515.7 766.8v42.7M583.7 788.1v21.3M585 788.1v21.3M610.4 788.1v21.3M611.7 788.1v21.3M724.4 745.4v64M725.7 745.4v64M733 788.1v21.3M734.4 788.1v21.3M737 788.1v21.3M738.7 788.1v21.3M748.7 788.1v21.3M750.7 788.1v21.3M759.7 766.8v42.7M761 766.8v42.7M785.4 702.8v106.7M786.7 702.8v106.7M787 788.1v21.3M790.4 788.1v21.3M814.4 745.4v64M815.7 745.4v64M827 788.1v21.3M828.4 788.1v21.3M833 745.4v42.7M834.4 745.4v42.7M838.7 724.1v64M840 724.1v64M856 745.4v21.3M857.4 745.4v21.3M861 745.4v21.3M862.4 745.4v21.3M866.4 724.1v42.7M867.7 724.1v42.7M872 702.8v64M873.4 702.8v64M883.7 788.1v21.3M885 788.1v21.3M902 745.4v64M903.4 745.4v64M910.4 724.1v42.7M911.7 724.1v42.7M927.7 745.4v64M929 745.4v64M932 702.8v106.7M933.4 702.8v106.7M950.4 660.1v149.3M951.7 660.1v149.3M958.7 702.8v64M960 702.8v64M967 745.4v21.3M968.4 745.4v21.3M980.4 745.4v64M981.7 745.4v64M978.7 702.8v106.7M980 702.8v106.7M689.7 766.8v42.7M692.4 766.8v42.7M695.4 766.8v42.7M766.4 766.8v42.7M770.4 766.8v42.7M775.4 766.8v42.7M768.7 702.8v64M772 702.8v64M770 638.8v85.3M771.4 638.8v85.3M808.7 745.4v64M811 745.4v64M831 788.1v21.3M840.4 788.1v21.3M847.7 766.8v42.7M851.4 766.8v42.7M855.4 766.8v42.7M848.7 724.1v42.7M850.4 724.1v42.7M861 766.8v42.7M867 766.8v42.7M873.7 766.8v42.7M895.4 766.8v42.7M900.4 766.8v42.7M895.4 745.4v21.3M897.7 745.4v21.3M896.7 724.1v21.3M897.7 724.1v21.3M910.4 766.8v42.7M915.4 766.8v42.7M915.4 745.4v64M920.4 745.4v64M940.4 745.4v64M943.7 745.4v64M943.7 766.8v42.7M947 766.8v42.7M955.4 766.8v42.7M960.4 766.8v42.7M965.4 766.8v42.7M970.4 766.8v42.7M975.4 766.8v42.7M535.4 617.4v192M537.1 617.4v192M887.6 574.8v234.7M890.9 574.8v234.7M887.6 532.1v42.7M889.4 532.1v42.7M915.6 681.4v85.3M918.6 681.4v85.3M915.9 382.8v298.7M917.6 382.8v298.7M941.4 596.1v213.3M942.9 596.1v213.3M931.6 745.4v64M932.9 745.4v64M940.4 766.8v42.7M941.6 766.8v42.7M944.1 596.1v213.3M951.6 660.1v149.3M957.9 766.8v42.7M959.9 766.8v42.7M959.9 745.4v64M961.1 745.4v64M978.4 745.4v64M979.6 745.4v64M996.6 809.4v21.3M1034 809.4v21.3M1038 809.4v21.3M1043 809.4v21.3M1047 809.4v21.3M1047.8 809.4v21.3M996.6 788.1v21.3M1021.4 788.1v21.3M1026.3 788.1v21.3M1031.3 788.1v21.3M1033.8 788.1v21.3M1036.3 788.1v21.3M1041.3 788.1v21.3M1045.3 788.1v21.3M996.6 766.8v21.3M1021.4 766.8v21.3M1028.3 766.8v21.3M1033.3 766.8v21.3M1035.8 766.8v21.3M1037.8 766.8v21.3M1041.8 766.8v21.3M1044.8 766.8v21.3M996.6 745.4v21.3M1017.9 745.4v21.3M1020.4 745.4v21.3M1022.4 745.4v21.3M1027.3 745.4v21.3M1034.3 745.4v21.3M1039 745.4v21.3M996.6 724.1v21.3M1017.9 724.1v21.3M1019.9 724.1v21.3M1024.8 724.1v21.3M1028.8 724.1v21.3M1032.8 724.1v21.3M1039 724.1v21.3M996.6 702.8v21.3M1016.4 702.8v21.3M1023.4 702.8v21.3M1028.3 702.8v21.3M1035.3 702.8v21.3M1037.8 702.8v21.3M1039 702.8v21.3M996.6 681.4v21.3M1016.4 681.4v21.3M1018.4 681.4v21.3M1023.4 681.4v21.3M1025.3 681.4v21.3M1027.3 681.4v21.3M1029.3 681.4v21.3M1031.8 681.4v21.3M1034.3 681.4v21.3M1039 681.4v21.3M996.6 660.1v21.3M1011.4 660.1v21.3M1013.4 660.1v21.3M1017.4 660.1v21.3M1020.4 660.1v21.3M1024.3 660.1v21.3M1029.3 660.1v21.3M1031.8 660.1v21.3M1036.8 660.1v21.3M1037.8 660.1v21.3M996.6 638.8v21.3M1011.4 638.8v21.3M1018.4 638.8v21.3M1021.4 638.8v21.3M1025.3 638.8v21.3M1027.3 638.8v21.3M1034.3 638.8v21.3M1036.3 638.8v21.3M1037.8 638.8v21.3M996.6 617.4v21.3M1009.1 617.4v21.3M1016.1 617.4v21.3M1019.1 617.4v21.3M1023.1 617.4v21.3M1028 617.4v21.3M1030 617.4v21.3M1037 617.4v21.3M1037.8 617.4v21.3M1040.3 681.4v128M1042.3 681.4v128M1043.8 681.4v128M1046 681.4v128M1042.8 596.1v85.3M1044.8 596.1v85.3M996.6 596.1v21.3M1006.6 596.1v21.3M1009.4 596.1v21.3M1012.4 596.1v21.3M1014.9 596.1v21.3M1017.9 596.1v21.3M1019.4 596.1v21.3M1023.4 596.1v21.3M1027.3 596.1v21.3M1030.3 596.1v21.3M1032.8 596.1v21.3M996.6 574.8v21.3M1005.4 574.8v21.3M1008.4 574.8v21.3M1010.9 574.8v21.3M1013.4 574.8v21.3M1015.4 574.8v21.3M1020.4 574.8v21.3M1023.9 574.8v21.3M1026.3 574.8v21.3M1028.8 574.8v21.3M1031.3 574.8v21.3M996.6 553.4v21.3M1005.4 553.4v21.3M1008.4 553.4v21.3M1010.9 553.4v21.3M1013.4 553.4v21.3M1015.4 553.4v21.3M1020.4 553.4v21.3M1023.9 553.4v21.3M1026.3 553.4v21.3M1028.8 553.4v21.3M1031.3 553.4v21.3M1016.6 553.4v256M1018.4 553.4v256M996.6 532.1v21.3M1004.1 532.1v21.3M1006.9 532.1v21.3M1009.4 532.1v21.3M1011.9 532.1v21.3M1014.1 532.1v21.3M1020.4 532.1v21.3M1023.4 532.1v21.3M1026.3 532.1v21.3M1029 532.1v21.3M996.6 510.8v21.3M1004.1 510.8v21.3M1006.9 510.8v21.3M1009.4 510.8v21.3M1011.9 510.8v21.3M1014.1 510.8v21.3M1020.4 510.8v21.3M1023.4 510.8v21.3M1026.3 510.8v21.3M1029 510.8v21.3M996.6 489.4v21.3M1004.1 489.4v21.3M1006.4 489.4v21.3M1008.4 489.4v21.3M1009.9 489.4v21.3M1011.4 489.4v21.3M1011.9 489.4v21.3M1012.9 489.4v21.3M1020.4 489.4v21.3M1023.4 489.4v21.3M1026.3 489.4v21.3M1029 489.4v21.3M996.6 468.1v21.3M1004.1 468.1v21.3M1006.4 468.1v21.3M1008.4 468.1v21.3M1009.9 468.1v21.3M1011.4 468.1v21.3M1011.9 468.1v21.3M1012.9 468.1v21.3M1020.4 468.1v21.3M1023.4 468.1v21.3M1026.3 468.1v21.3M1029 468.1v21.3M996.6 446.8v21.3M1004.1 446.8v21.3M1006.4 446.8v21.3M1008.4 446.8v21.3M1009.9 446.8v21.3M1011.4 446.8v21.3M1011.9 446.8v21.3M1012.9 446.8v21.3M1020.4 446.8v21.3M1023.4 446.8v21.3M1026.3 446.8v21.3M1029 446.8v21.3M996.6 425.4v21.3M1000.4 425.4v21.3M1004.1 425.4v21.3M1020.4 425.4v21.3M1024 425.4v21.3M1026.3 425.4v21.3M1029 425.4v21.3M996.6 404.1v21.3M1000.4 404.1v21.3M1004.1 404.1v21.3M1020.4 404.1v21.3M1024 404.1v21.3M1026.3 404.1v21.3M1029 404.1v21.3M996.6 382.8v21.3M1000.4 382.8v21.3M1004.1 382.8v21.3M1020.4 382.8v21.3M1024 382.8v21.3M1026.3 382.8v21.3M1029 382.8v21.3M1006.1 297.4v149.3M1007.4 297.4v149.3M1012.9 382.8v64M1014.1 382.8v64M1008.4 425.4v21.3M1009.9 425.4v21.3M996.6 361.4v21.3M999.1 361.4v21.3M1003.4 361.4v21.3M1020.4 361.4v21.3M1024 361.4v21.3M1026.5 361.4v21.3M1028.5 361.4v21.3M996.6 340.1v21.3M999.1 340.1v21.3M1003.4 340.1v21.3M1020.4 340.1v21.3M1024 340.1v21.3M1026.5 340.1v21.3M1028.5 340.1v21.3M996.6 318.8v21.3M999.1 318.8v21.3M1003.4 318.8v21.3M1020.4 318.8v21.3M1024 318.8v21.3M1026.5 318.8v21.3M1028.5 318.8v21.3M996.6 148.1v170.7M998.4 148.1v170.7M1002.1 276.1v42.7M1003.4 276.1v42.7M1020.4 148.1v170.7M1023.4 148.1v170.7M1023.4 297.4v21.3M1024 297.4v21.3M1027.3 233.4v85.3M1028.5 233.4v85.3M1056.1 809.4v21.3M1124.8 809.4v21.3M1127.8 809.4v21.3M1129.3 809.4v21.3M1056.1 788.1v21.3M1124.8 788.1v21.3M1128.3 788.1v21.3M1056.1 766.8v21.3M1115.3 766.8v21.3M1118.3 766.8v21.3M1120.3 766.8v21.3M1122.3 766.8v21.3M1127.3 766.8v21.3M1056.1 745.4v21.3M1115.3 745.4v21.3M1117.3 745.4v21.3M1121.3 745.4v21.3M1123.3 745.4v21.3M1126.3 745.4v21.3M1056.1 724.1v21.3M1102.3 724.1v21.3M1106.3 724.1v21.3M1108.3 724.1v21.3M1110.3 724.1v21.3M1119.3 724.1v21.3M1121.3 724.1v21.3M1123.8 724.1v21.3M1056.1 702.8v21.3M1093.3 702.8v21.3M1102.3 702.8v21.3M1104.3 702.8v21.3M1108.3 702.8v21.3M1112.3 702.8v21.3M1113.3 702.8v21.3M1056.1 681.4v21.3M1093.3 681.4v21.3M1106.3 681.4v21.3M1130.3 809.4v21.3M1134.3 809.4v21.3M1056.1 660.1v21.3M1095.3 660.1v21.3M1099.3 660.1v21.3M1101.3 660.1v21.3M1106.3 660.1v21.3M1056.1 638.8v21.3M1092.3 638.8v21.3M1094.8 638.8v21.3M1097.8 638.8v21.3M1100.8 638.8v21.3M1102.8 638.8v21.3M1105.8 638.8v21.3M1056.1 617.4v21.3M1088.3 617.4v21.3M1091.3 617.4v21.3M1093.3 617.4v21.3M1097.3 617.4v21.3M1099.3 617.4v21.3M1101.8 617.4v21.3M1104.3 617.4v21.3M1105.3 617.4v21.3M1056.1 596.1v21.3M1085.3 596.1v21.3M1087.3 596.1v21.3M1089.3 596.1v21.3M1093.3 596.1v21.3M1097.3 596.1v21.3M1099.3 596.1v21.3M1056.1 574.8v21.3M1080.3 574.8v21.3M1085.3 574.8v21.3M1087.8 574.8v21.3M1090.3 574.8v21.3M1056.1 553.4v21.3M1078.3 553.4v21.3M1083.3 553.4v21.3M1085.8 553.4v21.3M1088.3 553.4v21.3M1090.3 553.4v21.3M1056.1 532.1v21.3M1072.3 532.1v21.3M1054.5 532.1v21.3M1076.3 532.1v21.3M1078.3 532.1v21.3M1082.3 532.1v21.3M1084 532.1v21.3M1056.1 510.8v21.3M1070.3 510.8v21.3M1054.5 510.8v21.3M1072.8 510.8v21.3M1074.8 510.8v21.3M1077.8 510.8v21.3M1082.8 510.8v21.3M1084 510.8v21.3M1056.1 489.4v21.3M1066.3 489.4v21.3M1054.5 489.4v21.3M1068.3 489.4v21.3M1070.8 489.4v21.3M1073.3 489.4v21.3M1077.3 489.4v21.3M1080.3 489.4v21.3M1054.5 468.1v21.3M1062.3 468.1v21.3M1067.3 468.1v21.3M1069.3 468.1v21.3M1071.3 468.1v21.3M1073.8 468.1v21.3M1076.3 468.1v21.3M1097.8 574.8v64M1099.3 574.8v64M1101.3 574.8v64M1102.8 574.8v64M1103.8 574.8v64M1104.8 574.8v64M1082.3 468.1v42.7M1083.8 468.1v42.7M1092.5 489.4v170.7M1094 489.4v170.7M1056.3 446.8v21.3M1060.3 446.8v21.3M1062.8 446.8v21.3M1066.3 446.8v21.3M1067.3 446.8v21.3M1070.3 446.8v21.3M1070.8 446.8v21.3M1072.3 446.8v21.3M1072.8 446.8v21.3M1074 446.8v21.3M1056.3 425.4v21.3M1059.3 425.4v21.3M1062.3 425.4v21.3M1067.3 425.4v21.3M1070.3 425.4v21.3M1072.8 425.4v21.3M1074 425.4v21.3M1056.3 404.1v21.3M1059.3 404.1v21.3M1062.3 404.1v21.3M1067.3 404.1v21.3M1070.3 404.1v21.3M1072.8 404.1v21.3M1074 404.1v21.3M1056.3 382.8v21.3M1059.3 382.8v21.3M1062.3 382.8v21.3M1067.3 382.8v21.3M1070.3 382.8v21.3M1072.8 382.8v21.3M1074 382.8v21.3M1056.3 297.4v85.3M1059.3 297.4v85.3M1062.3 297.4v85.3M1056.5 148.1v149.3M1058.3 148.1v149.3M1060.8 212.1v85.3M1062.3 212.1v85.3M1119.8 532.1v277.3M1121.1 532.1v277.3M1138.6 510.8v298.7M1139.8 510.8v298.7M1162.3 617.4v192M1163.6 617.4v192M1125.3 660.1v149.3M1126.6 660.1v149.3M1141.6 638.8v170.7M1143.1 638.8v170.7M1202.3 638.8v170.7M1203.6 638.8v170.7M1231.6 596.1v213.3M1232.8 596.1v213.3M1237.3 574.8v234.7M1238.8 574.8v234.7M1239.1 638.8v170.7M1241.1 638.8v170.7M1276.1 681.4v149.3M1277.3 681.4v149.3M1344.1 724.1v128M1345.3 724.1v128M1136.3 809.4v21.3M1140.3 809.4v21.3M1144.3 809.4v21.3M1148.3 809.4v21.3M1152.3 809.4v21.3M1156.3 809.4v21.3M1171.3 809.4v21.3M1180.3 809.4v21.3M1186.3 809.4v21.3M1189.3 809.4v21.3M1193.3 809.4v21.3M1217.3 809.4v21.3M1236.3 809.4v21.3M1248.3 809.4v21.3M1260.3 809.4v21.3M1264.3 809.4v21.3M1273.3 809.4v21.3M1274.8 809.4v21.3M1276.3 809.4v21.3M1278.3 809.4v21.3M1136.3 788.1v21.3M1138.8 788.1v21.3M1141.1 788.1v21.3M1143.5 788.1v21.3M1145.9 788.1v21.3M1148.3 788.1v21.3M1150.8 788.1v21.3M1153.5 788.1v21.3M1156.3 788.1v21.3M1184.3 788.1v21.3M1186.3 788.1v21.3M1188.3 788.1v21.3M1190.8 788.1v21.3M1193.3 788.1v21.3M1215.3 788.1v21.3M1217.3 788.1v21.3M1236.3 788.1v21.3M1246.3 788.1v21.3M1249.3 788.1v21.3M1252.3 788.1v21.3M1256.3 788.1v21.3M1269.3 788.1v21.3M1272.3 788.1v21.3M1274.9 788.1v21.3M1275.9 788.1v21.3M1138.3 766.8v21.3M1140.3 766.8v21.3M1142.3 766.8v21.3M1144.3 766.8v21.3M1146.3 766.8v21.3M1148.3 766.8v21.3M1156.3 766.8v21.3M1170.3 766.8v21.3M1180.3 766.8v21.3M1181.3 766.8v21.3M1182.8 766.8v21.3M1184.8 766.8v21.3M1186.3 766.8v21.3M1194.3 766.8v21.3M1198.3 766.8v21.3M1202.3 766.8v21.3M1206.3 766.8v21.3M1210.3 766.8v21.3M1214.3 766.8v21.3M1218.3 766.8v21.3M1227.3 766.8v21.3M1235.3 766.8v21.3M1236.3 766.8v21.3M1240.3 766.8v21.3M1244.3 766.8v21.3M1246.3 766.8v21.3M1248.3 766.8v21.3M1250.3 766.8v21.3M1254.3 766.8v21.3M1268.3 766.8v21.3M1272.3 766.8v21.3M1275.9 766.8v21.3M1276.9 766.8v21.3M1134.3 745.4v21.3M1135.3 745.4v21.3M1138.3 745.4v21.3M1139.5 745.4v21.3M1141.3 745.4v21.3M1142.5 745.4v21.3M1144.3 745.4v21.3M1146.3 745.4v21.3M1147.9 745.4v21.3M1149.1 745.4v21.3M1156.3 745.4v21.3M1161.3 745.4v21.3M1166.3 745.4v21.3M1170.3 745.4v21.3M1174.3 745.4v21.3M1178.3 745.4v21.3M1194.3 745.4v21.3M1195.9 745.4v21.3M1198.3 745.4v21.3M1199.9 745.4v21.3M1201.3 745.4v21.3M1202.8 745.4v21.3M1205.9 745.4v21.3M1207.1 745.4v21.3M1211.9 745.4v21.3M1213.1 745.4v21.3M1218.3 745.4v21.3M1223.3 745.4v21.3M1228.3 745.4v21.3M1237.3 745.4v21.3M1241.3 745.4v21.3M1245.3 745.4v21.3M1249.3 745.4v21.3M1251.3 745.4v21.3M1254.9 745.4v21.3M1256.1 745.4v21.3M1268.3 745.4v21.3M1270.3 745.4v21.3M1272.3 745.4v21.3M1275.9 745.4v21.3M1276.9 745.4v21.3M1133.9 724.1v21.3M1135.1 724.1v21.3M1138.3 724.1v21.3M1139.8 724.1v21.3M1142.3 724.1v21.3M1144.3 724.1v21.3M1156.3 724.1v21.3M1158.3 724.1v21.3M1160.3 724.1v21.3M1161.9 724.1v21.3M1163.1 724.1v21.3M1171.3 724.1v21.3M1174.8 724.1v21.3M1178.3 724.1v21.3M1194.3 724.1v21.3M1196.3 724.1v21.3M1198.3 724.1v21.3M1201.9 724.1v21.3M1203.1 724.1v21.3M1205.9 724.1v21.3M1207.1 724.1v21.3M1211.9 724.1v21.3M1213.1 724.1v21.3M1218.3 724.1v21.3M1220.3 724.1v21.3M1222.3 724.1v21.3M1224.3 724.1v21.3M1226.3 724.1v21.3M1229.3 724.1v21.3M1231.3 724.1v21.3M1233.3 724.1v21.3M1237.3 724.1v21.3M1240.3 724.1v21.3M1243.3 724.1v21.3M1249.9 724.1v21.3M1251.1 724.1v21.3M1268.3 724.1v21.3M1270.3 724.1v21.3M1275.9 724.1v21.3M1276.9 724.1v21.3M1116.3 702.8v21.3M1117.3 702.8v21.3M1120.3 702.8v21.3M1121.3 702.8v21.3M1138.3 702.8v21.3M1139.9 702.8v21.3M1141.1 702.8v21.3M1142.7 702.8v21.3M1143.1 702.8v21.3M1144.3 702.8v21.3M1162.3 702.8v21.3M1163.3 702.8v21.3M1173.9 702.8v21.3M1175.1 702.8v21.3M1201.9 702.8v21.3M1202.9 702.8v21.3M1206.3 702.8v21.3M1207.5 702.8v21.3M1211.3 702.8v21.3M1213.3 702.8v21.3M1219.3 702.8v21.3M1221.3 702.8v21.3M1229.3 702.8v21.3M1231.3 702.8v21.3M1233.3 702.8v21.3M1238.3 702.8v21.3M1240.3 702.8v21.3M1268.3 702.8v21.3M1269.9 702.8v21.3M1275.9 702.8v21.3M1276.9 702.8v21.3M1108.3 681.4v21.3M1110.3 681.4v21.3M1116.3 681.4v21.3M1117.3 681.4v21.3M1120.3 681.4v21.3M1121.3 681.4v21.3M1138.3 681.4v21.3M1139.9 681.4v21.3M1140.8 681.4v21.3M1142.3 681.4v21.3M1162.3 681.4v21.3M1163.3 681.4v21.3M1201.9 681.4v21.3M1202.9 681.4v21.3M1210.3 681.4v21.3M1211.3 681.4v21.3M1218.3 681.4v21.3M1219.5 681.4v21.3M1224.3 681.4v21.3M1226.3 681.4v21.3M1229.3 681.4v21.3M1231.3 681.4v21.3M1233.3 681.4v21.3M1238.3 681.4v21.3M1240.3 681.4v21.3M1275.9 681.4v21.3M1276.9 681.4v21.3M1111.3 660.1v21.3M1112.3 660.1v21.3M1115.3 660.1v21.3M1117.3 660.1v21.3M1120.3 660.1v21.3M1121.3 660.1v21.3M1125.3 660.1v21.3M1126.3 660.1v21.3M1138.3 660.1v21.3M1139.9 660.1v21.3M1141.3 660.1v21.3M1162.3 660.1v21.3M1163.3 660.1v21.3M1201.9 660.1v21.3M1202.9 660.1v21.3M1231.9 660.1v21.3M1232.9 660.1v21.3M1237.3 660.1v21.3M1239.3 660.1v21.3M1104.3 638.8v21.3M1105.3 638.8v21.3M1115.3 638.8v21.3M1117.3 638.8v21.3M1120.3 638.8v21.3M1121.3 638.8v21.3M1138.3 638.8v21.3M1139.9 638.8v21.3M1141.3 638.8v21.3M1162.3 638.8v21.3M1163.3 638.8v21.3M1201.9 638.8v21.3M1202.9 638.8v21.3M1231.9 638.8v21.3M1232.9 638.8v21.3M1237.9 638.8v21.3M1239.1 638.8v21.3M1138.3 617.4v21.3M1139.5 617.4v21.3M1162.3 617.4v21.3M1163.3 617.4v21.3M1231.9 617.4v21.3M1232.9 617.4v21.3M1237.9 617.4v21.3M1238.9 617.4v21.3M1231.9 596.1v21.3M1232.9 596.1v21.3M1237.9 596.1v21.3M1238.9 596.1v21.3M1237.9 574.8v21.3M1238.9 574.8v21.3M1283.3 809.4v21.3M1284.8 809.4v21.3M1306.3 745.4v85.3M1307.8 745.4v85.3M1327.3 809.4v21.3M1329.3 809.4v21.3M1331.3 809.4v21.3M1335.3 809.4v21.3M1339.3 809.4v21.3M1343.3 809.4v21.3M1347.3 809.4v21.3M1352.3 809.4v21.3M1331.3 788.1v21.3M1335.3 788.1v21.3M1339.3 788.1v21.3M1344.3 788.1v21.3M1349.3 788.1v21.3M1331.3 766.8v21.3M1334.3 766.8v21.3M1337.3 766.8v21.3M1340.3 766.8v21.3M1344.3 766.8v21.3M1348.3 766.8v21.3M1332.3 745.4v21.3M1334.3 745.4v21.3M1344 724.1v42.7M1345.6 724.1v42.7M1347 745.4v21.3M1348.3 745.4v21.3M1352.9 766.8v42.7M1354.3 766.8v42.7M1358.3 809.4v21.3M1359.6 809.4v21.3M1361.3 809.4v21.3M1362.6 809.4v21.3M1389.3 809.4v21.3M1390.8 809.4v21.3M1391.9 745.4v85.3M1393.3 745.4v85.3M1832.3 1129.4v21.3M1857.6 1129.4v21.3M1884.3 1129.4v21.3M1892.6 1129.4v21.3M1898.3 1129.4v21.3M1901.3 1129.4v21.3M1904.3 1129.4v21.3M1907.3 1129.4v21.3M1910.3 1129.4v21.3M1913 1129.4v21.3M1915.9 1129.4v21.3M1920.3 1129.4v21.3M1467.6 212.1v256M1469.5 212.1v256M1539.5 148.1v213.3M1541.5 148.1v213.3M1549.5 148.1v234.7M1550.8 148.1v234.7M1582.1 148.1v576M1584.1 148.1v576M1587.1 148.1v64M1588.7 148.1v64M1589.6 254.8v469.3M1591.6 254.8v469.3M1594.6 276.1v448M1596.6 276.1v448M1596.6 233.4v106.7M1598.1 233.4v106.7M1616.1 276.1v554.7M1618.1 276.1v554.7M1618.1 233.4v597.3M1620.1 233.4v597.3M1620.1 190.8v640M1621.4 190.8v640M1621.4 148.1v64M1622.7 148.1v64M1628.7 148.1v64M1630.3 148.1v64M1644.5 318.8v320M1645.8 318.8v320M1581.4 318.8v256M1582.7 318.8v256M1536.1 148.1v170.7M1537.4 148.1v170.7M1532.3 148.1v149.3M1533.6 148.1v149.3M1575.1 489.4v128M1576.4 489.4v128M1593.3 276.1v128M1594.6 276.1v128M1652 233.4v149.3M1653.3 233.4v149.3M1557.9 148.1v106.7M1559.2 148.1v106.7M1554.2 148.1v106.7M1555.5 148.1v106.7M1640.8 574.8v213.3M1642.1 574.8v213.3M1625 233.4v341.3M1626.3 233.4v341.3M1625 660.1v170.7M1626.3 660.1v170.7M1598.5 318.8v106.7M1599.8 318.8v106.7M1631.4 190.8v213.3M1632.7 190.8v213.3M1650.2 254.8v85.3M1651.5 254.8v85.3M1615.7 553.4v106.7M1617 553.4v106.7M1630.8 318.8v256M1632.1 318.8v256M1538.1 190.8v170.7M1539.4 190.8v170.7M1543.4 148.1v170.7M1544.7 148.1v170.7M1612.3 510.8v85.3M1613.6 510.8v85.3M1529 148.1v85.3M1530.3 148.1v85.3M1524.1 254.8v85.3M1525.4 254.8v85.3M1652.2 148.1v128M1653.5 148.1v128M1579.6 254.8v277.3M1580.9 254.8v277.3M1522.6 148.1v106.7M1523.9 148.1v106.7M1537.4 148.1v192M1538.7 148.1v192M1569.1 212.1v277.3M1570.4 212.1v277.3M1604.6 361.4v256M1605.9 361.4v256M1654 404.1v256M1655.3 404.1v256M1539.9 148.1v85.3M1541.2 148.1v85.3M1628.4 574.8v192M1629.7 574.8v192M1563.5 190.8v234.7M1564.8 190.8v234.7M1601.4 382.8v234.7M1602.7 382.8v234.7M1526.9 148.1v85.3M1528.2 148.1v85.3M1592.8 276.1v128M1594.1 276.1v128M1520.6 148.1v170.7M1521.9 148.1v170.7M1636 297.4v85.3M1637.3 297.4v85.3M1548.6 297.4v85.3M1549.9 297.4v85.3M1644 446.8v234.7M1645.3 446.8v234.7M1616.2 382.8v213.3M1617.5 382.8v213.3M1583.5 425.4v170.7M1584.8 425.4v170.7M1632.1 382.8v256M1633.4 382.8v256M1590.5 382.8v192M1591.8 382.8v192M1568.2 148.1v298.7M1569.5 148.1v298.7"/>
<path fill="none" stroke="#9a7f4c" stroke-width="0.7" d="M1300.3 894.8v21.3M1303.3 894.8v21.3M1278.9 830.8v21.3M1280.9 830.8v21.3M992.4 766.8v21.3M994.6 766.8v21.3M895.4 724.1v21.3M896.7 724.1v21.3M535.4 596.1v21.3M537.1 596.1v21.3M1403.3 1129.4v21.3M1736 1129.4v21.3M1805.8 1129.4v21.3M1832.3 1129.4v21.3M1857.6 1129.4v21.3M1870.8 1129.4v21.3M1884.3 1129.4v21.3M1913 1129.4v21.3M1915.9 1129.4v21.3M1403.3 1108.1v21.3M1731.3 1108.1v21.3M1736 1108.1v21.3M1781.8 1108.1v21.3M1797.8 1108.1v21.3M1805.8 1108.1v21.3M1832.3 1108.1v21.3M1403.3 1086.8v21.3M1731.3 1086.8v21.3M1736 1086.8v21.3M1781.8 1086.8v21.3M1797.8 1086.8v21.3M1805.8 1086.8v21.3M1822.3 1086.8v21.3M1828.3 1086.8v21.3M1832.3 1086.8v21.3M1403.3 1065.4v21.3M1701.6 1065.4v21.3M1720.3 1065.4v21.3M1736 1065.4v21.3M1761.3 1065.4v21.3M1781.8 1065.4v21.3M1797.8 1065.4v21.3M1805.8 1065.4v21.3M1822.3 1065.4v21.3M1829.8 1065.4v21.3M1403.3 1044.1v21.3M1637.6 1044.1v21.3M1681.8 1044.1v21.3M1694.3 1044.1v21.3M1696.3 1044.1v21.3M1698.3 1044.1v21.3M1699.8 1044.1v21.3M1701.6 1044.1v21.3M1720.3 1044.1v21.3M1736 1044.1v21.3M1759.8 1044.1v21.3M1403.3 1022.8v21.3M1637.6 1022.8v21.3M1681.8 1022.8v21.3M1694.3 1022.8v21.3M1696.8 1022.8v21.3M1699.8 1022.8v21.3M1701.6 1022.8v21.3M1720.3 1022.8v21.3M1736 1022.8v21.3M1759.8 1022.8v21.3M1403.3 1001.4v21.3M1637.6 1001.4v21.3M1673.3 1001.4v21.3M1681.8 1001.4v21.3M1694.3 1001.4v21.3M1697.3 1001.4v21.3M1699.8 1001.4v21.3M1701.6 1001.4v21.3M1720.3 1001.4v21.3M1736 1001.4v21.3M1759.8 1001.4v21.3M1403.3 980.1v21.3M1637.6 980.1v21.3M1669.5 980.1v21.3M1403.3 958.8v21.3M1637.6 958.8v21.3M1669.5 958.8v21.3M1403.3 937.4v21.3M1637.6 937.4v21.3M1669.5 937.4v21.3M1403.3 916.1v21.3M1637.6 916.1v21.3M1669.5 916.1v21.3M1403.3 894.8v21.3M1637.6 894.8v21.3M1669.5 894.8v21.3M1403.3 873.4v21.3M1624.6 873.4v21.3M1630.3 873.4v21.3M1633.8 873.4v21.3M1637.6 873.4v21.3M1669.5 873.4v21.3M1403.3 852.1v21.3M1624.6 852.1v21.3M1630.3 852.1v21.3M1633.8 852.1v21.3M1637.6 852.1v21.3M1669.5 852.1v21.3M1403.3 830.8v21.3M1624.6 830.8v21.3M1630.3 830.8v21.3M1633.8 830.8v21.3M1637.6 830.8v21.3M1669.5 830.8v21.3M1403.3 809.4v21.3M1518.9 809.4v21.3M1615.3 809.4v21.3M1403.3 788.1v21.3M1518.9 788.1v21.3M1615.3 788.1v21.3M1403.3 766.8v21.3M1518.9 766.8v21.3M1610.3 766.8v21.3M1403.3 745.4v21.3M1518.9 745.4v21.3M1605.3 745.4v21.3M1403.3 724.1v21.3M1518.9 724.1v21.3M1605.3 724.1v21.3M1403.3 702.8v21.3M1518.9 702.8v21.3M1580.3 702.8v21.3M1403.3 681.4v21.3M1518.9 681.4v21.3M1573.8 681.4v21.3M1403.3 660.1v21.3M1518.9 660.1v21.3M1573.8 660.1v21.3M1403.3 638.8v21.3M1518.9 638.8v21.3M1573.8 638.8v21.3M1403.3 617.4v21.3M1518.9 617.4v21.3M1573.8 617.4v21.3M1403.3 596.1v21.3M1518.9 596.1v21.3M1573.8 596.1v21.3M1403.3 574.8v21.3M1518.9 574.8v21.3M1565.3 574.8v21.3M1403.3 553.4v21.3M1518.9 553.4v21.3M1556.8 553.4v21.3M1403.3 532.1v21.3M1518.9 532.1v21.3M1556.8 532.1v21.3M1403.3 510.8v21.3M1518.9 510.8v21.3M1556.8 510.8v21.3M1403.3 489.4v21.3M1516.9 489.4v21.3M1518.9 489.4v21.3M1556.8 489.4v21.3M1403.3 468.1v21.3M1516.9 468.1v21.3M1518.9 468.1v21.3M1553.3 468.1v21.3M1403.3 446.8v21.3M1469.8 446.8v21.3M1511.3 446.8v21.3M1514.3 446.8v21.3M1516.9 446.8v21.3M1518.9 446.8v21.3M1553.3 446.8v21.3M1403.3 425.4v21.3M1469.8 425.4v21.3M1511.3 425.4v21.3M1514.3 425.4v21.3M1516.9 425.4v21.3M1518.9 425.4v21.3M1553.3 425.4v21.3M1403.3 404.1v21.3M1469.8 404.1v21.3M1516.8 404.1v21.3M1518.9 404.1v21.3M1553.3 404.1v21.3M1403.3 382.8v21.3M1469.8 382.8v21.3M1516.8 382.8v21.3M1518.9 382.8v21.3M1553.3 382.8v21.3M1403.3 361.4v21.3M1466.3 361.4v21.3M1467.5 361.4v21.3M1469.8 361.4v21.3M1512.3 361.4v21.3M1516.8 361.4v21.3M1533.3 361.4v21.3M1545.3 361.4v21.3M1403.3 340.1v21.3M1466.3 340.1v21.3M1467.5 340.1v21.3M1469.8 340.1v21.3M1512.3 340.1v21.3M1516.8 340.1v21.3M1533.3 340.1v21.3M1403.3 318.8v21.3M1466.3 318.8v21.3M1467.5 318.8v21.3M1469.8 318.8v21.3M1509.8 318.8v21.3M1514.3 318.8v21.3M1403.3 297.4v21.3M1463.3 297.4v21.3M1466.3 297.4v21.3M1467.5 297.4v21.3M1469.8 297.4v21.3M1509.8 297.4v21.3M1514.3 297.4v21.3M1403.3 276.1v21.3M1461.8 276.1v21.3M1463.8 276.1v21.3M1466.1 276.1v21.3M1467.5 276.1v21.3M1469.8 276.1v21.3M1509.8 276.1v21.3M1403.3 254.8v21.3M1461.8 254.8v21.3M1463.8 254.8v21.3M1466.1 254.8v21.3M1467.5 254.8v21.3M1469.8 254.8v21.3M1509.8 254.8v21.3M1403.3 233.4v21.3M1461.8 233.4v21.3M1463.8 233.4v21.3M1466.1 233.4v21.3M1467.5 233.4v21.3M1469.8 233.4v21.3M1509.8 233.4v21.3M1403.3 212.1v21.3M1461.8 212.1v21.3M1463.8 212.1v21.3M1466.1 212.1v21.3M1467.5 212.1v21.3M1469.8 212.1v21.3M1509.8 212.1v21.3M1403.3 190.8v21.3M1448.6 190.8v21.3M1458.3 190.8v21.3M1460.3 190.8v21.3M1462.3 190.8v21.3M1464.3 190.8v21.3M1466.9 190.8v21.3M1469.8 190.8v21.3M1509.8 190.8v21.3M1403.3 169.4v21.3M1448.6 169.4v21.3M1458.3 169.4v21.3M1460.3 169.4v21.3M1462.3 169.4v21.3M1464.3 169.4v21.3M1466.9 169.4v21.3M1469.8 169.4v21.3M1509.8 169.4v21.3M1403.3 148.1v21.3M1448.6 148.1v21.3M1458.3 148.1v21.3M1460.3 148.1v21.3M1462.3 148.1v21.3M1464.3 148.1v21.3M1466.9 148.1v21.3M1469.8 148.1v21.3M1509.8 148.1v21.3M1509.8 148.1v149.3M1515.8 148.1v149.3M1515.8 148.1v192M1518.2 148.1v192M1521.2 148.1v192M1529.2 148.1v192M1534.2 148.1v192M1534.2 148.1v213.3M1535.5 148.1v213.3M1539.5 148.1v213.3M1541.5 148.1v213.3M1549.5 148.1v213.3M1550.8 148.1v234.7M1552.8 148.1v234.7M1554.3 148.1v234.7M1554.3 148.1v341.3M1557.3 148.1v341.3M1557.3 148.1v426.7M1561.3 148.1v426.7M1563.3 148.1v426.7M1563.3 382.8v192M1566.3 382.8v192M1566.3 148.1v448M1571.3 148.1v448M1572.8 148.1v448M1578.8 148.1v448M1578.8 148.1v554.7M1580.8 148.1v554.7M1580.8 233.4v490.7M1582.1 233.4v490.7M1584.1 233.4v490.7M1587.1 233.4v490.7M1587.1 212.1v512M1589.6 212.1v512M1591.6 169.4v554.7M1594.6 169.4v554.7M1596.6 340.1v384M1598.1 340.1v384M1598.1 297.4v426.7M1600.1 297.4v426.7M1600.1 254.8v469.3M1606.1 254.8v469.3M1606.1 340.1v426.7M1612.1 340.1v426.7M1612.1 318.8v469.3M1616.1 318.8v469.3M1621.4 212.1v618.7M1622.7 212.1v618.7M1622.7 254.8v576M1624.7 254.8v576M1624.7 233.4v597.3M1626.7 233.4v597.3M1626.7 212.1v618.7M1628.7 212.1v618.7M1630.7 212.1v618.7M1633.2 212.1v618.7M1633.2 148.1v682.7M1636.2 148.1v682.7M1638.2 148.1v682.7M1643.2 148.1v682.7M1651.2 148.1v682.7M1656.8 148.1v682.7M1616.1 809.4v21.3M1616.1 788.1v21.3M1612.1 766.8v21.3M1606.1 745.4v21.3M1606.1 724.1v21.3M1580.8 702.8v21.3M1578.8 681.4v21.3M1578.8 660.1v21.3M1578.8 638.8v21.3M1578.8 617.4v21.3M1578.8 596.1v21.3M1566.3 574.8v21.3M1557.3 553.4v21.3M1557.3 532.1v21.3M1557.3 510.8v21.3M1557.3 489.4v21.3M1554.3 468.1v21.3M1554.3 446.8v21.3M1554.3 425.4v21.3M1554.3 404.1v21.3M1554.3 382.8v21.3M1549.5 361.4v21.3M1534.2 340.1v21.3M1515.8 318.8v21.3M1515.8 297.4v21.3M1564.7 190.8v213.3M1550.5 148.1v149.3M1559.3 190.8v213.3M1553.9 148.1v170.7M1609.4 361.4v170.7M1551.8 148.1v128M1647.4 382.8v170.7M1645.2 425.4v298.7M1577.1 297.4v170.7M1587 276.1v106.7M1541 148.1v106.7M1553.1 148.1v213.3M1609 382.8v106.7M1608.2 382.8v106.7M1551.3 254.8v128M1535.4 148.1v64M1606 382.8v234.7M1518.4 148.1v42.7M1536.2 233.4v85.3M1558 254.8v213.3M1540.2 169.4v192M1579.4 212.1v234.7M1546.6 212.1v64M1562.8 212.1v192M1637.1 148.1v213.3M1566.2 340.1v234.7M1600.7 510.8v149.3M1590.9 297.4v213.3M1554.6 276.1v106.7M1572.7 148.1v64M1589.9 318.8v106.7M1534.9 148.1v85.3M1581 489.4v106.7M1600 361.4v128M1512.5 148.1v149.3M1532.6 148.1v64M1574.5 340.1v213.3M1554.3 148.1v106.7M1567.6 233.4v256M1583.8 382.8v64M1558.3 169.4v213.3M1646.2 532.1v213.3M1515.8 148.1v42.7M1554.6 148.1v85.3M1631.4 617.4v213.3M1589 425.4v128M1647 233.4v64M1547.7 190.8v106.7M1616.2 489.4v149.3M1583.2 233.4v170.7M1641.2 510.8v320M1530.5 148.1v106.7M1614.3 340.1v42.7M1617.7 617.4v213.3M1562.7 148.1v42.7M1517.6 148.1v106.7M1578 361.4v277.3M1590.9 532.1v192M1624.4 297.4v256M1580.9 212.1v64M1540.6 148.1v128M1631.9 638.8v149.3M1632.8 148.1v213.3M1574.7 233.4v277.3M1532.9 148.1v42.7M1591.4 297.4v106.7M1589.8 276.1v170.7M1590.3 617.4v85.3M1617.8 574.8v85.3M1626.4 318.8v64M1560.3 212.1v85.3M1656.1 148.1v213.3M1519.4 190.8v128M1600.8 361.4v298.7M1641.2 340.1v298.7M1644.5 638.8v106.7M1600.3 361.4v85.3M1535.6 233.4v64M1619.7 596.1v64M1594.6 361.4v298.7M1569.7 148.1v42.7M1513.8 148.1v149.3M1611.1 361.4v106.7M1563.2 276.1v64M1532.3 148.1v106.7M1554.1 148.1v170.7M1601.8 468.1v85.3M1591.8 297.4v256M1553.2 148.1v192M1546.1 148.1v128M1618.4 617.4v106.7M1615.1 318.8v42.7M1524.6 254.8v85.3M1636.7 233.4v256M1577.7 233.4v213.3M1581.5 425.4v85.3M1627 596.1v234.7M1616.8 702.8v106.7M1648.4 276.1v277.3M1626.7 254.8v85.3M1524.4 148.1v42.7M1532.5 148.1v64M1632.7 468.1v170.7M1646.3 190.8v170.7M1627 468.1v106.7M1616.4 318.8v277.3M1555 148.1v128M1650.8 361.4v234.7M1517.6 148.1v128M1538.3 254.8v85.3M1517.7 169.4v128M1540.5 148.1v64M1607.6 468.1v64M1573.8 148.1v256M1645.1 404.1v213.3M1578.9 468.1v106.7M1606.4 553.4v170.7M1637.5 148.1v106.7M1534.3 190.8v85.3M1552.3 148.1v192M1553.7 361.4v64M1581.8 532.1v170.7M1645.5 425.4v170.7M1647.4 297.4v64M1609.4 361.4v85.3M1529.3 148.1v85.3M1577.7 254.8v298.7M1655.4 681.4v128M1615.3 318.8v85.3M1643.6 190.8v170.7M1610.3 446.8v213.3M1564.4 233.4v298.7M1655.4 425.4v106.7M1624.1 446.8v277.3M1542.4 148.1v213.3M1513.3 148.1v149.3M1624.6 446.8v106.7M1518.8 148.1v85.3M1615.5 361.4v320M1583.1 340.1v64M1519.2 148.1v64M1556.4 425.4v64M1649.2 596.1v106.7M1539.4 212.1v85.3M1645.8 212.1v85.3M1524.9 148.1v149.3M1523.2 148.1v128M1514.9 148.1v85.3M1573.3 148.1v192M1656.8 425.4v405.3M1658.8 425.4v405.3M1661.3 425.4v405.3M1663.3 425.4v405.3M1663.3 468.1v362.7M1667.3 468.1v362.7M1667.3 404.1v426.7M1669.5 404.1v426.7M1637.6 809.4v21.3M1665.3 809.4v21.3M1637.6 788.1v21.3M1665.3 788.1v21.3M1637.6 766.8v21.3M1660.3 766.8v21.3M1637.6 745.4v21.3M1660.3 745.4v21.3M1637.6 724.1v21.3M1660.3 724.1v21.3"/>
<path fill="#2b2b2b" d="M1562.6 147.6h2v171.2h-2zM1598.8 147.6h1.6v491.2h-1.6zM1564.6 147.6h0.9v277.8h-0.9zM1540 147.6h1.2v192.5h-1.2zM1556.7 147.6h0.9v320.5h-0.9zM1557.8 147.6h0.9v320.5h-0.9zM1585.8 147.6h1.2v299.2h-1.2zM1577.8 147.6h1.6v149.8h-1.6zM1536.4 147.6h1.2v192.5h-1.2zM1578.2 147.6h1.6v448.5h-1.6zM1572.4 147.6h0.9v107.2h-0.9zM1586.9 147.6h1.2v512.5h-1.2zM1577.5 147.6h1.2v107.2h-1.2zM1566 147.6h1.2v171.2h-1.2zM1568.2 147.6h1.2v256.5h-1.2zM1598.8 147.6h1.6v128.5h-1.6zM1569 147.6h1.6v427.2h-1.6zM1467.6 147.6h1.8v64.5h-1.8z"/>
<path fill="#c4a265" d="M1669.2 468.1h4v533.3h-4zM1670.6 169.4h1.4v298.7h-1.4zM1673.2 468.1h6v533.3h-6zM1674 446.8h1.2v21.3h-1.2zM1679.2 510.8h3v490.7h-3zM1682.2 446.8h2.5v554.7h-2.5zM1684.7 510.8h2v490.7h-2zM1685.1 468.1h2v42.7h-2zM1686.7 446.8h2v554.7h-2zM1686.7 404.1h1.6v42.7h-1.6zM1688.7 660.1h1.3v341.3h-1.3zM1690 510.8h3v490.7h-3zM1690.6 468.1h1.6v42.7h-1.6zM1693 446.8h5v554.7h-5zM1696.1 404.1h1.2v42.7h-1.2zM1698 532.1h4v469.3h-4zM1699.5 169.4h1.2v362.7h-1.2zM1702 553.4h6v448h-6zM1708 702.8h1.5v298.7h-1.5zM1708 660.1h1.6v42.7h-1.6zM1709.5 788.1h3v213.3h-3zM1710.4 681.4h1.4v106.7h-1.4zM1712.5 510.8h5v490.7h-5zM1717.5 574.8h6v426.7h-6zM1717.6 489.4h1.4v85.3h-1.4zM1724.8 532.1h3v469.3h-3zM1726 425.4h1.6v106.7h-1.6zM1729.8 596.1h4v405.3h-4zM1731.2 532.1h2v64h-2zM1733.8 745.4h3v256h-3zM1736.8 468.1h1.2v85.3h-1.2zM1740.8 553.4h2v448h-2zM1742.8 617.4h1.3v384h-1.3zM1744.1 254.8h1.2v341.3h-1.2zM1745.6 574.8h2v426.7h-2zM1747.6 617.4h5v384h-5zM1752.6 596.1h6v405.3h-6zM1758.6 596.1h1.5v405.3h-1.5zM1760.1 574.8h3v490.7h-3zM1763.1 574.8h1.5v490.7h-1.5zM1764.6 574.8h2.5v490.7h-2.5zM1767.1 638.8h2v426.7h-2zM1769.1 660.1h2v405.3h-2zM1769.3 318.8h1.6v341.3h-1.6zM1771.1 660.1h3v405.3h-3zM1772.2 617.4h1.2v42.7h-1.2zM1774.1 532.1h1.6v234.7h-1.6zM1775.6 660.1h2.5v405.3h-2.5zM1776.1 596.1h1.4v64h-1.4zM1778.1 638.8h2v426.7h-2zM1778.5 340.1h1.4v298.7h-1.4zM1780.1 937.4h3v128h-3zM1780.7 830.8h1.2v106.7h-1.2zM1783.1 660.1h2.5v405.3h-2.5zM1785.6 702.8h3v362.7h-3zM1787 596.1h1.2v106.7h-1.2zM1788.6 660.1h1.3v405.3h-1.3zM1788.6 574.8h2v85.3h-2zM1791.9 873.4h1.3v192h-1.3zM1793.2 873.4h3v192h-3zM1797.5 830.8h3v234.7h-3zM1800.5 894.8h4v170.7h-4zM1804.5 852.1h2v213.3h-2zM1806.5 852.1h1.3v213.3h-1.3zM1809.8 852.1h3v213.3h-3zM1812.8 830.8h1.5v234.7h-1.5zM1820.3 873.4h1.3v192h-1.3zM1821.6 809.4h1.5v256h-1.5zM1823.1 809.4h6v256h-6zM1829.1 809.4h2v256h-2zM1723.2 361.4h1.8v320h-1.8zM1710.3 276.1h1.2v384h-1.2zM1767 297.4h1.2v448h-1.2zM1753.5 297.4h1.5v426.7h-1.5zM1735.4 489.4h1.2v213.3h-1.2zM1703.9 425.4h1.2v213.3h-1.2zM1744.9 553.4h1.5v149.3h-1.5zM1674.4 425.4h1.2v384h-1.2zM1679.7 382.8h1.2v426.7h-1.2zM1704.7 361.4h1.2v448h-1.2zM1721.1 297.4h2.6v512h-2.6zM1731.9 148.1h1.5v661.3h-1.5zM1736.8 148.1h1.5v661.3h-1.5zM1739.7 148.1h1.5v661.3h-1.5zM1742.1 169.4h1.2v640h-1.2zM1738.6 382.8h1.5v426.7h-1.5zM1756.7 340.1h1.5v469.3h-1.5zM1761.9 297.4h1.5v512h-1.5zM1770.7 148.1h2.6v661.3h-2.6zM1786.4 148.1h1.2v661.3h-1.2zM1783.5 446.8h1.5v362.7h-1.5zM1749.4 425.4h1.5v384h-1.5zM1768.3 361.4h2.3v448h-2.3zM1799.5 361.4h1.2v448h-1.2zM1869 446.8h1.5v362.7h-1.5zM1859.6 446.8h1.5v362.7h-1.5zM1682.3 425.4h1.2v384h-1.2zM1671.5 446.8h1.2v362.7h-1.2zM1699.8 468.1h1.5v341.3h-1.5z"/>
<path fill="#87adcb" d="M1680.7 489.4h1.2v21.3h-1.2zM1682.9 425.4h1.2v21.3h-1.2zM1686.7 361.4h1.6v42.7h-1.6zM1715.7 382.8h1.6v128h-1.6zM1717.6 382.8h1.4v106.7h-1.4zM1723.5 532.1h1.3v469.3h-1.3zM1723.5 425.4h1.2v106.7h-1.2zM1727.8 596.1h2v405.3h-2zM1728.2 510.8h1.2v85.3h-1.2zM1734.7 724.1h1.2v21.3h-1.2zM1736.8 553.4h2v448h-2zM1738.8 574.8h2v426.7h-2zM1744.1 596.1h1.5v405.3h-1.5zM1745.9 532.1h1.4v42.7h-1.4zM1758.6 446.8h1.4v149.3h-1.4zM1763.1 510.8h2v64h-2zM1765.5 532.1h2v42.7h-2zM1767.5 532.1h1.4v106.7h-1.4zM1774.1 766.8h1.5v298.7h-1.5zM1774.1 276.1h1.6v256h-1.6zM1783.8 617.4h1.6v42.7h-1.6zM1789.9 702.8h2v362.7h-2zM1796.2 916.1h1.3v149.3h-1.3zM1807.8 809.4h2v256h-2zM1814.3 852.1h6v213.3h-6zM1831.1 894.8h0.9v170.7h-0.9zM1683.6 148.1h1.8v448h-1.8zM1718 340.1h1.5v320h-1.5zM1794.8 681.4h1.8v320h-1.8zM1696.4 318.8h1.5v298.7h-1.5zM1699.7 468.1h1.8v170.7h-1.8zM1705.4 148.1h1.5v490.7h-1.5zM1784.6 553.4h1.2v234.7h-1.2zM1791.6 638.8h1.2v149.3h-1.2zM1775.4 468.1h1.5v298.7h-1.5zM1759.2 212.1h1.2v512h-1.2zM1691.1 361.4h1.5v256h-1.5zM1710.5 446.8h1.5v213.3h-1.5zM1792.3 788.1h1.2v213.3h-1.2zM1716.1 361.4h1.8v298.7h-1.8zM1771.2 510.8h1.8v234.7h-1.8zM1751.7 382.8h1.8v341.3h-1.8zM1732.8 489.4h1.2v192h-1.2zM1788.2 190.8h1.5v597.3h-1.5zM1675.6 404.1h1.2v192h-1.2zM1661.9 148.1h1.2v661.3h-1.2zM1667.7 148.1h1.2v661.3h-1.2zM1665.7 212.1h2v597.3h-2zM1674.4 212.1h1.2v213.3h-1.2zM1679.7 212.1h1.2v170.7h-1.2zM1702.1 404.1h1.2v405.3h-1.2zM1695.4 425.4h1.2v384h-1.2zM1721.1 148.1h2.6v149.3h-2.6zM1738.6 212.1h1.5v170.7h-1.5zM1756.7 148.1h1.5v192h-1.5zM1761.9 148.1h1.5v149.3h-1.5zM1783.5 233.4h1.5v213.3h-1.5zM1776.5 318.8h1.5v490.7h-1.5zM1749.4 340.1h1.5v85.3h-1.5zM1764 361.4h2.9v448h-2.9zM1799.5 340.1h1.2v21.3h-1.2zM1869 212.1h1.5v234.7h-1.5zM1859.6 361.4h1.5v85.3h-1.5zM1826.1 489.4h1.2v320h-1.2zM1719.3 382.8h1.2v426.7h-1.2zM1686.1 468.1h1.2v341.3h-1.2zM1645.8 148.1h0.9v661.3h-0.9zM1651.1 148.1h0.9v661.3h-0.9zM1654.6 148.1h0.9v661.3h-0.9z"/>
<path fill="none" stroke="#9a7f4c" stroke-width="0.7" d="M1693 447.2h5M1669.2 468.5h10M1693 468.5h5M1669.2 489.8h10M1693 489.8h5M1669.2 511.2h13M1690 511.2h8M1712.5 511.2h5M1669.2 532.5h13M1690 532.5h12M1712.5 532.5h5M1724.8 532.5h3M1669.2 553.8h13M1690 553.8h18M1712.5 553.8h5M1724.8 553.8h3M1669.2 575.1h13M1690 575.1h18M1712.5 575.1h11M1724.8 575.1h3M1760.1 575.1h3M1669.2 596.5h13M1690 596.5h18M1712.5 596.5h11M1724.8 596.5h3M1729.8 596.5h4M1752.6 596.5h6M1760.1 596.5h3M1669.2 617.8h13M1690 617.8h18M1712.5 617.8h11M1724.8 617.8h3M1729.8 617.8h4M1747.6 617.8h11M1760.1 617.8h3M1669.2 639.1h13M1690 639.1h18M1712.5 639.1h11M1724.8 639.1h3M1729.8 639.1h4M1747.6 639.1h11M1760.1 639.1h3M1669.2 660.5h13M1690 660.5h18M1712.5 660.5h11M1724.8 660.5h3M1729.8 660.5h4M1747.6 660.5h11M1760.1 660.5h3M1771.1 660.5h3M1669.2 681.8h13M1690 681.8h18M1712.5 681.8h11M1724.8 681.8h3M1729.8 681.8h4M1747.6 681.8h11M1760.1 681.8h3M1771.1 681.8h3M1669.2 703.1h13M1690 703.1h18M1712.5 703.1h11M1724.8 703.1h3M1729.8 703.1h4M1747.6 703.1h11M1760.1 703.1h3M1771.1 703.1h3M1785.6 703.1h3M1669.2 724.5h13M1690 724.5h18M1712.5 724.5h11M1724.8 724.5h3M1729.8 724.5h4M1747.6 724.5h11M1760.1 724.5h3M1771.1 724.5h3M1785.6 724.5h3M1669.2 745.8h13M1690 745.8h18M1712.5 745.8h11M1724.8 745.8h3M1729.8 745.8h7M1747.6 745.8h11M1760.1 745.8h3M1771.1 745.8h3M1785.6 745.8h3M1669.2 767.1h13M1690 767.1h18M1712.5 767.1h11M1724.8 767.1h3M1729.8 767.1h7M1747.6 767.1h11M1760.1 767.1h3M1771.1 767.1h3M1785.6 767.1h3M1669.2 788.5h13M1690 788.5h18M1709.5 788.5h14M1724.8 788.5h3M1729.8 788.5h7M1747.6 788.5h11M1760.1 788.5h3M1771.1 788.5h3M1785.6 788.5h3M1669.2 809.8h13M1690 809.8h18M1709.5 809.8h14M1724.8 809.8h3M1729.8 809.8h7M1747.6 809.8h11M1760.1 809.8h3M1771.1 809.8h3M1785.6 809.8h3M1823.1 809.8h6M1669.2 831.1h13M1690 831.1h18M1709.5 831.1h14M1724.8 831.1h3M1729.8 831.1h7M1747.6 831.1h11M1760.1 831.1h3M1771.1 831.1h3M1785.6 831.1h3M1797.5 831.1h3M1823.1 831.1h6M1669.2 852.5h13M1690 852.5h18M1709.5 852.5h14M1724.8 852.5h3M1729.8 852.5h7M1747.6 852.5h11M1760.1 852.5h3M1771.1 852.5h3M1785.6 852.5h3M1797.5 852.5h3M1809.8 852.5h3M1823.1 852.5h6M1669.2 873.8h13M1690 873.8h18M1709.5 873.8h14M1724.8 873.8h3M1729.8 873.8h7M1747.6 873.8h11M1760.1 873.8h3M1771.1 873.8h3M1785.6 873.8h3M1793.2 873.8h3M1797.5 873.8h3M1809.8 873.8h3M1823.1 873.8h6M1669.2 895.1h13M1690 895.1h18M1709.5 895.1h14M1724.8 895.1h3M1729.8 895.1h7M1747.6 895.1h11M1760.1 895.1h3M1771.1 895.1h3M1785.6 895.1h3M1793.2 895.1h3M1797.5 895.1h7M1809.8 895.1h3M1823.1 895.1h6M1669.2 916.5h13M1690 916.5h18M1709.5 916.5h14M1724.8 916.5h3M1729.8 916.5h7M1747.6 916.5h11M1760.1 916.5h3M1771.1 916.5h3M1785.6 916.5h3M1793.2 916.5h3M1797.5 916.5h7M1809.8 916.5h3M1823.1 916.5h6M1669.2 937.8h13M1690 937.8h18M1709.5 937.8h14M1724.8 937.8h3M1729.8 937.8h7M1747.6 937.8h11M1760.1 937.8h3M1771.1 937.8h3M1780.1 937.8h3M1785.6 937.8h3M1793.2 937.8h3M1797.5 937.8h7M1809.8 937.8h3M1823.1 937.8h6M1669.2 959.1h13M1690 959.1h18M1709.5 959.1h14M1724.8 959.1h3M1729.8 959.1h7M1747.6 959.1h11M1760.1 959.1h3M1771.1 959.1h3M1780.1 959.1h3M1785.6 959.1h3M1793.2 959.1h3M1797.5 959.1h7M1809.8 959.1h3M1823.1 959.1h6M1669.2 980.5h13M1690 980.5h18M1709.5 980.5h14M1724.8 980.5h3M1729.8 980.5h7M1747.6 980.5h11M1760.1 980.5h3M1771.1 980.5h3M1780.1 980.5h3M1785.6 980.5h3M1793.2 980.5h3M1797.5 980.5h7M1809.8 980.5h3M1823.1 980.5h6M1760.1 1001.8h3M1771.1 1001.8h3M1780.1 1001.8h3M1785.6 1001.8h3M1793.2 1001.8h3M1797.5 1001.8h7M1809.8 1001.8h3M1823.1 1001.8h6M1760.1 1023.1h3M1771.1 1023.1h3M1780.1 1023.1h3M1785.6 1023.1h3M1793.2 1023.1h3M1797.5 1023.1h7M1809.8 1023.1h3M1823.1 1023.1h6M1760.1 1044.4h3M1771.1 1044.4h3M1780.1 1044.4h3M1785.6 1044.4h3M1793.2 1044.4h3M1797.5 1044.4h7M1809.8 1044.4h3M1823.1 1044.4h6"/>
<path fill="none" stroke="#6788a5" stroke-width="0.7" d="M1814.3 852.5h6M1814.3 873.8h6M1814.3 895.1h6M1814.3 916.5h6M1814.3 937.8h6M1814.3 959.1h6M1814.3 980.5h6M1814.3 1001.8h6M1814.3 1023.1h6M1814.3 1044.4h6"/>
<path fill="none" stroke="#9a7f4c" stroke-width="0.7" d="M1669.5 468.1v533.3M1673.5 468.1v533.3M1671 169.4v298.7M1672.4 169.4v298.7M1679.5 468.1v533.3M1674.3 446.8v21.3M1675.5 446.8v21.3M1679.5 510.8v490.7M1682.5 510.8v490.7M1682.5 446.8v554.7M1685 446.8v554.7M1685 510.8v490.7M1687 510.8v490.7M1685.4 468.1v42.7M1687.4 468.1v42.7M1687 446.8v554.7M1689 446.8v554.7M1687.1 404.1v42.7M1688.7 404.1v42.7M1689 660.1v341.3M1690.3 660.1v341.3M1690.3 510.8v490.7M1693.3 510.8v490.7M1691 468.1v42.7M1692.6 468.1v42.7M1693.3 446.8v554.7M1698.3 446.8v554.7M1696.4 404.1v42.7M1697.6 404.1v42.7M1698.3 532.1v469.3M1702.3 532.1v469.3M1699.9 169.4v362.7M1701.1 169.4v362.7M1702.3 553.4v448M1708.3 553.4v448M1708.3 702.8v298.7M1709.8 702.8v298.7M1708.4 660.1v42.7M1710 660.1v42.7M1709.8 788.1v213.3M1712.8 788.1v213.3M1710.7 681.4v106.7M1712.1 681.4v106.7M1712.8 510.8v490.7M1717.8 510.8v490.7M1717.8 574.8v426.7M1723.8 574.8v426.7M1717.9 489.4v85.3M1719.3 489.4v85.3M1725.1 532.1v469.3M1728.1 532.1v469.3M1726.3 425.4v106.7M1727.9 425.4v106.7M1730.1 596.1v405.3M1734.1 596.1v405.3M1731.6 532.1v64M1733.6 532.1v64M1734.1 745.4v256M1737.1 745.4v256M1737.2 468.1v85.3M1738.4 468.1v85.3M1741.1 553.4v448M1743.1 553.4v448M1743.1 617.4v384M1744.4 617.4v384M1744.5 254.8v341.3M1745.7 254.8v341.3M1745.9 574.8v426.7M1747.9 574.8v426.7M1747.9 617.4v384M1752.9 617.4v384M1752.9 596.1v405.3M1758.9 596.1v405.3M1760.4 596.1v405.3M1760.4 574.8v490.7M1763.4 574.8v490.7M1764.9 574.8v490.7M1767.4 574.8v490.7M1767.4 638.8v426.7M1769.4 638.8v426.7M1769.4 660.1v405.3M1771.4 660.1v405.3M1769.6 318.8v341.3M1771.2 318.8v341.3M1774.4 660.1v405.3M1772.6 617.4v42.7M1773.8 617.4v42.7M1774.5 532.1v234.7M1776.1 532.1v234.7M1775.9 660.1v405.3M1778.4 660.1v405.3M1776.5 596.1v64M1777.9 596.1v64M1778.4 638.8v426.7M1780.4 638.8v426.7M1778.8 340.1v298.7M1780.2 340.1v298.7M1780.4 937.4v128M1783.4 937.4v128M1781.1 830.8v106.7M1782.3 830.8v106.7M1783.4 660.1v405.3M1785.9 660.1v405.3M1785.9 702.8v362.7M1788.9 702.8v362.7M1787.4 596.1v106.7M1788.6 596.1v106.7M1788.9 660.1v405.3M1790.2 660.1v405.3M1789 574.8v85.3M1791 574.8v85.3M1792.2 873.4v192M1793.5 873.4v192M1796.5 873.4v192M1797.8 830.8v234.7M1800.8 830.8v234.7M1800.8 894.8v170.7M1804.8 894.8v170.7M1804.8 852.1v213.3M1806.8 852.1v213.3M1808.1 852.1v213.3M1810.1 852.1v213.3M1813.1 852.1v213.3M1813.1 830.8v234.7M1814.6 830.8v234.7M1820.6 873.4v192M1821.9 873.4v192M1821.9 809.4v256M1823.4 809.4v256M1829.4 809.4v256M1831.4 809.4v256M1723.5 361.4v320M1725.3 361.4v320M1710.7 276.1v384M1711.9 276.1v384M1767.4 297.4v448M1768.6 297.4v448M1753.8 297.4v426.7M1755.3 297.4v426.7M1735.8 489.4v213.3M1737 489.4v213.3M1704.3 425.4v213.3M1705.5 425.4v213.3M1745.3 553.4v149.3M1746.8 553.4v149.3M1674.8 425.4v384M1675.9 425.4v384M1680 382.8v426.7M1681.2 382.8v426.7M1705.1 361.4v448M1706.3 361.4v448M1721.4 297.4v512M1724.1 297.4v512M1732.2 148.1v661.3M1733.7 148.1v661.3M1737.2 148.1v661.3M1738.6 148.1v661.3M1740.1 148.1v661.3M1741.6 148.1v661.3M1742.4 169.4v640M1743.6 169.4v640M1738.9 382.8v426.7M1740.4 382.8v426.7M1757 340.1v469.3M1758.5 340.1v469.3M1762.3 297.4v512M1763.7 297.4v512M1771 148.1v661.3M1773.6 148.1v661.3M1786.8 148.1v661.3M1787.9 148.1v661.3M1783.8 446.8v362.7M1785.3 446.8v362.7M1749.7 425.4v384M1751.2 425.4v384M1768.7 361.4v448M1771 361.4v448M1799.9 361.4v448M1801.1 361.4v448M1869.3 446.8v362.7M1870.8 446.8v362.7M1860 446.8v362.7M1861.4 446.8v362.7M1682.6 425.4v384M1683.8 425.4v384M1671.8 446.8v362.7M1673 446.8v362.7M1700.1 468.1v341.3M1701.6 468.1v341.3"/>
<path fill="none" stroke="#6788a5" stroke-width="0.7" d="M1681 489.4v21.3M1682.2 489.4v21.3M1683.2 425.4v21.3M1684.4 425.4v21.3M1687.1 361.4v42.7M1688.7 361.4v42.7M1716.1 382.8v128M1717.7 382.8v128M1717.9 382.8v106.7M1719.3 382.8v106.7M1723.8 532.1v469.3M1725.1 532.1v469.3M1723.9 425.4v106.7M1725.1 425.4v106.7M1728.1 596.1v405.3M1730.1 596.1v405.3M1728.6 510.8v85.3M1729.8 510.8v85.3M1735 724.1v21.3M1736.2 724.1v21.3M1737.1 553.4v448M1739.1 553.4v448M1739.1 574.8v426.7M1741.1 574.8v426.7M1744.4 596.1v405.3M1745.9 596.1v405.3M1746.2 532.1v42.7M1747.6 532.1v42.7M1759 446.8v149.3M1760.4 446.8v149.3M1763.5 510.8v64M1765.5 510.8v64M1765.9 532.1v42.7M1767.9 532.1v42.7M1767.8 532.1v106.7M1769.2 532.1v106.7M1774.4 766.8v298.7M1775.9 766.8v298.7M1774.5 276.1v256M1776.1 276.1v256M1784.2 617.4v42.7M1785.8 617.4v42.7M1790.2 702.8v362.7M1792.2 702.8v362.7M1796.5 916.1v149.3M1797.8 916.1v149.3M1808.1 809.4v256M1810.1 809.4v256M1814.6 852.1v213.3M1820.6 852.1v213.3M1831.4 894.8v170.7M1832.3 894.8v170.7M1684 148.1v448M1685.8 148.1v448M1718.3 340.1v320M1719.8 340.1v320M1795.1 681.4v320M1796.9 681.4v320M1696.7 318.8v298.7M1698.2 318.8v298.7M1700.1 468.1v170.7M1701.9 468.1v170.7M1705.8 148.1v490.7M1707.3 148.1v490.7M1784.9 553.4v234.7M1786.1 553.4v234.7M1792 638.8v149.3M1793.2 638.8v149.3M1775.7 468.1v298.7M1777.2 468.1v298.7M1759.5 212.1v512M1760.7 212.1v512M1691.5 361.4v256M1693 361.4v256M1710.8 446.8v213.3M1712.3 446.8v213.3M1792.7 788.1v213.3M1793.9 788.1v213.3M1716.5 361.4v298.7M1718.3 361.4v298.7M1771.6 510.8v234.7M1773.4 510.8v234.7M1752.1 382.8v341.3M1753.9 382.8v341.3M1733.2 489.4v192M1734.4 489.4v192M1788.6 190.8v597.3M1790.1 190.8v597.3M1676 404.1v192M1677.2 404.1v192M1662.2 148.1v661.3M1663.4 148.1v661.3M1668.1 148.1v661.3M1669.2 148.1v661.3M1666 212.1v597.3M1668.1 212.1v597.3M1674.8 212.1v213.3M1675.9 212.1v213.3M1680 212.1v170.7M1681.2 212.1v170.7M1702.5 404.1v405.3M1703.6 404.1v405.3M1695.8 425.4v384M1696.9 425.4v384M1721.4 148.1v149.3M1724.1 148.1v149.3M1738.9 212.1v170.7M1740.4 212.1v170.7M1757 148.1v192M1758.5 148.1v192M1762.3 148.1v149.3M1763.7 148.1v149.3M1783.8 233.4v213.3M1785.3 233.4v213.3M1776.8 318.8v490.7M1778.3 318.8v490.7M1749.7 340.1v85.3M1751.2 340.1v85.3M1764.3 361.4v448M1767.2 361.4v448M1799.9 340.1v21.3M1801.1 340.1v21.3M1869.3 212.1v234.7M1870.8 212.1v234.7M1860 361.4v85.3M1861.4 361.4v85.3M1826.4 489.4v320M1827.6 489.4v320M1719.7 382.8v426.7M1720.8 382.8v426.7M1686.4 468.1v341.3M1687.6 468.1v341.3M1646.2 148.1v661.3M1647.1 148.1v661.3M1651.4 148.1v661.3M1652.3 148.1v661.3M1654.9 148.1v661.3M1655.8 148.1v661.3"/>
<path fill="#2b2b2b" d="M1760 510.3h1.6v533.8h-1.6zM1780 638.3h3v320.5h-3zM1790 744.9h3v235.2h-3zM1803 702.3h9v213.8h-9zM1808.5 915.6h2.5v43.2h-2.5zM1810.2 958.3h1.1v43.2h-1.1zM1818 830.3h4.3v64.5h-4.3z"/>
<path fill="#87adcb" d="M1805 894.8h4v85.3h-4zM1813.5 830.8h4.5v85.3h-4.5zM1817 980.1h3v42.7h-3zM1680 852.1h1.2v149.3h-1.2zM1700.2 937.4h1.2v106.7h-1.2zM1755 937.4h1.2v64h-1.2zM1832 1108.1h17.4v21.3h-17.4zM1849.4 1108.1h7.9v21.3h-7.9zM1832 1086.8h17.4v21.3h-17.4zM1849.4 1086.8h7.9v21.3h-7.9zM1832 1065.4h17.4v21.3h-17.4zM1849.4 1065.4h7.9v21.3h-7.9zM1832 1044.1h17.4v21.3h-17.4zM1849.4 1044.1h7.9v21.3h-7.9zM1832 1022.8h17.4v21.3h-17.4zM1849.4 1022.8h7.9v21.3h-7.9zM1832 1001.4h17.4v21.3h-17.4zM1849.4 1001.4h7.9v21.3h-7.9zM1832 980.1h17.4v21.3h-17.4zM1849.4 980.1h7.9v21.3h-7.9zM1829.5 1065.4h2.5v21.3h-2.5zM1832 958.8h16.5v21.3h-16.5zM1850 958.8h2v21.3h-2zM1852 958.8h2v21.3h-2zM1854 958.8h3.3v21.3h-3.3zM1832 937.4h15.7v21.3h-15.7zM1852 937.4h2.5v21.3h-2.5zM1856 937.4h1.3v21.3h-1.3zM1832 916.1h9v21.3h-9zM1841 916.1h2v21.3h-2zM1843 916.1h2v21.3h-2zM1845 916.1h2v21.3h-2zM1856 916.1h1.3v21.3h-1.3zM1832 894.8h8v21.3h-8zM1840 894.8h2v21.3h-2zM1842 894.8h3.6v21.3h-3.6zM1832 873.4h6v21.3h-6zM1838 873.4h2v21.3h-2zM1840 873.4h2v21.3h-2zM1842 873.4h2v21.3h-2zM1829.5 852.1h3.5v21.3h-3.5zM1833 852.1h3v21.3h-3zM1836 852.1h2v21.3h-2zM1840 852.1h4v21.3h-4zM1829.5 830.8h3.5v21.3h-3.5zM1833 830.8h3v21.3h-3zM1839 830.8h2v21.3h-2zM1841 830.8h3v21.3h-3zM1814.1 681.4h1.2v149.3h-1.2zM1812.1 724.1h4.4v106.7h-4.4zM1820.2 681.4h1.5v149.3h-1.5zM1825.5 489.4h1.2v256h-1.2zM1831.9 766.8h1.5v64h-1.5zM1837.2 724.1h1.5v106.7h-1.5zM1839.2 702.8h1.5v128h-1.5zM1841.2 681.4h1.5v149.3h-1.5zM1829.6 809.4h5.8v21.3h-5.8zM1797.5 724.1h1.7v106.7h-1.7zM1859.3 361.4h1.7v85.3h-1.7zM1868 212.1h1.7v234.7h-1.7zM1871 532.1h1.6v170.7h-1.6zM1875.5 596.1h1.5v106.7h-1.5zM1873.8 894.8h1.2v85.3h-1.2zM1880 702.8h1.4v192h-1.4zM1892.3 830.8h5.7v298.7h-5.7zM1892.3 745.4h4.4v85.3h-4.4zM1892.3 702.8h2.9v42.7h-2.9zM1892.6 596.1h1.4v106.7h-1.4zM1899.5 1108.1h2.5v21.3h-2.5zM1902 1108.1h2.5v21.3h-2.5zM1904.5 1108.1h2.5v21.3h-2.5zM1907 1108.1h3v21.3h-3zM1910 1108.1h2.7v21.3h-2.7zM1899.5 1086.8h2.5v21.3h-2.5zM1902 1086.8h2.5v21.3h-2.5zM1904.5 1086.8h2.5v21.3h-2.5zM1907 1086.8h3v21.3h-3zM1910 1086.8h2.7v21.3h-2.7zM1915.6 1108.1h4.4v21.3h-4.4zM1915.6 1086.8h4.4v21.3h-4.4zM1902.5 1065.4h3.5v21.3h-3.5zM1906 1065.4h3v21.3h-3zM1909 1065.4h3.7v21.3h-3.7zM1912.7 1065.4h2.9v21.3h-2.9zM1917 1065.4h3v21.3h-3zM1902.5 1044.1h3.5v21.3h-3.5zM1906 1044.1h3v21.3h-3zM1909 1044.1h3.7v21.3h-3.7zM1912.7 1044.1h2.9v21.3h-2.9zM1917 1044.1h3v21.3h-3zM1902.5 1022.8h3.5v21.3h-3.5zM1906 1022.8h3v21.3h-3zM1909 1022.8h3.7v21.3h-3.7zM1912.7 1022.8h2.9v21.3h-2.9zM1917 1022.8h3v21.3h-3zM1904 1001.4h3v21.3h-3zM1912.7 1001.4h2.9v21.3h-2.9zM1917 1001.4h3v21.3h-3zM1904 980.1h3v21.3h-3zM1912.7 980.1h2.9v21.3h-2.9zM1917 980.1h3v21.3h-3zM1904 958.8h3v21.3h-3zM1912.7 958.8h2.9v21.3h-2.9zM1917 958.8h3v21.3h-3zM1912.7 788.1h2.9v170.7h-2.9zM1911 766.8h1.5v192h-1.5z"/>
<path fill="#c4a265" d="M1823.2 745.4h3.5v85.3h-3.5zM1799 468.1h1.5v362.7h-1.5zM1801 638.8h1.7v192h-1.7zM1793.7 788.1h1.5v85.3h-1.5zM1796 766.8h2v106.7h-2zM1857.3 1108.1h13.1v21.3h-13.1zM1870.4 1108.1h2.9v21.3h-2.9zM1873.3 1108.1h3.2v21.3h-3.2zM1876.5 1108.1h7v21.3h-7zM1857.3 1086.8h13.1v21.3h-13.1zM1870.4 1086.8h2.9v21.3h-2.9zM1873.3 1086.8h3.2v21.3h-3.2zM1876.5 1086.8h7v21.3h-7zM1857.3 1065.4h13.1v21.3h-13.1zM1870.4 1065.4h2.9v21.3h-2.9zM1873.3 1065.4h3.2v21.3h-3.2zM1876.5 1065.4h7v21.3h-7zM1857.3 1044.1h13.1v21.3h-13.1zM1870.4 1044.1h2.9v21.3h-2.9zM1873.3 1044.1h3.2v21.3h-3.2zM1876.5 1044.1h7v21.3h-7zM1857.3 1022.8h13.1v21.3h-13.1zM1870.4 1022.8h2.9v21.3h-2.9zM1873.3 1022.8h3.2v21.3h-3.2zM1876.5 1022.8h7v21.3h-7zM1857.3 1001.4h13.1v21.3h-13.1zM1870.4 1001.4h2.9v21.3h-2.9zM1873.3 1001.4h3.2v21.3h-3.2zM1876.5 1001.4h7v21.3h-7zM1857.3 980.1h13.1v21.3h-13.1zM1870.4 980.1h2.9v21.3h-2.9zM1873.3 980.1h3.2v21.3h-3.2zM1876.5 980.1h7v21.3h-7zM1857.3 958.8h13.1v21.3h-13.1zM1870.4 958.8h2.9v21.3h-2.9zM1873.3 958.8h3.2v21.3h-3.2zM1876.5 958.8h7v21.3h-7zM1857.3 937.4h13.1v21.3h-13.1zM1870.4 937.4h2.9v21.3h-2.9zM1873.3 937.4h3.2v21.3h-3.2zM1876.5 937.4h7v21.3h-7zM1857.3 916.1h13.1v21.3h-13.1zM1870.4 916.1h2.9v21.3h-2.9zM1873.3 916.1h3.2v21.3h-3.2zM1876.5 916.1h7v21.3h-7zM1857.3 894.8h13.1v21.3h-13.1zM1870.4 894.8h2.9v21.3h-2.9zM1873.3 894.8h3.2v21.3h-3.2zM1876.5 894.8h7v21.3h-7zM1857.3 873.4h13.1v21.3h-13.1zM1870.4 873.4h2.9v21.3h-2.9zM1873.3 873.4h3.2v21.3h-3.2zM1876.5 873.4h7v21.3h-7zM1857.3 852.1h13.1v21.3h-13.1zM1870.4 852.1h2.9v21.3h-2.9zM1873.3 852.1h3.2v21.3h-3.2zM1876.5 852.1h7v21.3h-7zM1857.3 830.8h13.1v21.3h-13.1zM1870.4 830.8h2.9v21.3h-2.9zM1873.3 830.8h3.2v21.3h-3.2zM1876.5 830.8h7v21.3h-7zM1857.3 809.4h8.7v21.3h-8.7zM1866 809.4h4.4v21.3h-4.4zM1870.4 809.4h2.9v21.3h-2.9zM1873.3 809.4h8.7v21.3h-8.7zM1857.3 788.1h8.7v21.3h-8.7zM1866 788.1h4.4v21.3h-4.4zM1870.4 788.1h2.9v21.3h-2.9zM1873.3 788.1h8.7v21.3h-8.7zM1857.3 766.8h8.7v21.3h-8.7zM1866 766.8h4.4v21.3h-4.4zM1870.4 766.8h2.9v21.3h-2.9zM1873.3 766.8h8.7v21.3h-8.7zM1857.3 745.4h8.7v21.3h-8.7zM1866 745.4h4.4v21.3h-4.4zM1870.4 745.4h2.9v21.3h-2.9zM1873.3 745.4h8.7v21.3h-8.7zM1857.3 724.1h8.7v21.3h-8.7zM1866 724.1h4.4v21.3h-4.4zM1870.4 724.1h2.9v21.3h-2.9zM1873.3 724.1h8.7v21.3h-8.7zM1857.3 702.8h8.7v21.3h-8.7zM1866 702.8h4.4v21.3h-4.4zM1870.4 702.8h2.9v21.3h-2.9zM1873.3 702.8h8.7v21.3h-8.7zM1857.3 681.4h8.7v21.3h-8.7zM1866 681.4h4.4v21.3h-4.4zM1857.3 660.1h8.7v21.3h-8.7zM1866 660.1h4.4v21.3h-4.4zM1857.3 638.8h8.7v21.3h-8.7zM1866 638.8h4.4v21.3h-4.4zM1857.3 617.4h8.7v21.3h-8.7zM1866 617.4h4.4v21.3h-4.4zM1857.3 574.8h8.7v42.7h-8.7zM1857.3 553.4h7.2v21.3h-7.2zM1857.3 510.8h4.4v42.7h-4.4zM1866 574.8h1.7v42.7h-1.7zM1859.3 446.8h1.7v64h-1.7zM1867.3 446.8h3.1v170.7h-3.1zM1912.7 1108.1h2.9v21.3h-2.9zM1912.7 1086.8h2.9v21.3h-2.9zM1914 894.8h1.5v170.7h-1.5z"/>
<path fill="none" stroke="#6788a5" stroke-width="0.7" d="M1892.3 703.1h2.9M1812.1 724.5h4.4M1892.3 724.5h2.9M1812.1 745.8h4.4M1892.3 745.8h4.4M1812.1 767.1h4.4M1892.3 767.1h4.4M1812.1 788.5h4.4M1892.3 788.5h4.4M1912.7 788.5h2.9M1812.1 809.8h4.4M1829.6 809.8h5.8M1892.3 809.8h4.4M1912.7 809.8h2.9M1813.5 831.1h4.5M1829.5 831.1h6.5M1839 831.1h5M1892.3 831.1h5.7M1912.7 831.1h2.9M1813.5 852.5h4.5M1829.5 852.5h8.5M1840 852.5h4M1892.3 852.5h5.7M1912.7 852.5h2.9M1813.5 873.8h4.5M1832 873.8h12M1892.3 873.8h5.7M1912.7 873.8h2.9M1805 895.1h4M1813.5 895.1h4.5M1832 895.1h13.6M1892.3 895.1h5.7M1912.7 895.1h2.9M1805 916.5h4M1832 916.5h15M1856 916.5h1.3M1892.3 916.5h5.7M1912.7 916.5h2.9M1805 937.8h4M1832 937.8h15.7M1852 937.8h2.5M1856 937.8h1.3M1892.3 937.8h5.7M1912.7 937.8h2.9M1805 959.1h4M1832 959.1h16.5M1850 959.1h7.3M1892.3 959.1h5.7M1904 959.1h3M1912.7 959.1h2.9M1917 959.1h3M1832 980.5h25.3M1892.3 980.5h5.7M1904 980.5h3M1912.7 980.5h2.9M1917 980.5h3M1832 1001.8h25.3M1892.3 1001.8h5.7M1904 1001.8h3M1912.7 1001.8h2.9M1917 1001.8h3M1832 1023.1h25.3M1892.3 1023.1h5.7M1902.5 1023.1h13.1M1917 1023.1h3M1832 1044.4h25.3M1892.3 1044.4h5.7M1902.5 1044.4h13.1M1917 1044.4h3M1829.5 1065.8h27.8M1892.3 1065.8h5.7M1902.5 1065.8h13.1M1917 1065.8h3M1832 1087.1h25.3M1892.3 1087.1h5.7M1899.5 1087.1h13.2M1915.6 1087.1h4.4M1832 1108.4h25.3M1892.3 1108.4h5.7M1899.5 1108.4h13.2M1915.6 1108.4h4.4"/>
<path fill="none" stroke="#9a7f4c" stroke-width="0.7" d="M1857.3 511.2h4.4M1857.3 532.5h4.4M1857.3 553.8h7.2M1857.3 575.1h10.4M1857.3 596.5h10.4M1857.3 617.8h13.1M1857.3 639.1h13.1M1857.3 660.5h13.1M1857.3 681.8h13.1M1857.3 703.1h24.7M1857.3 724.5h24.7M1823.2 745.8h3.5M1857.3 745.8h24.7M1823.2 767.1h3.5M1857.3 767.1h24.7M1823.2 788.5h3.5M1857.3 788.5h24.7M1823.2 809.8h3.5M1857.3 809.8h24.7M1857.3 831.1h26.2M1857.3 852.5h26.2M1857.3 873.8h26.2M1857.3 895.1h26.2M1857.3 916.5h26.2M1857.3 937.8h26.2M1857.3 959.1h26.2M1857.3 980.5h26.2M1857.3 1001.8h26.2M1857.3 1023.1h26.2M1857.3 1044.4h26.2M1857.3 1065.8h26.2M1857.3 1087.1h26.2M1912.7 1087.1h2.9M1857.3 1108.4h26.2M1912.7 1108.4h2.9"/>
<path fill="none" stroke="#6788a5" stroke-width="0.7" d="M1805.3 894.8v85.3M1809.3 894.8v85.3M1813.8 830.8v85.3M1818.3 830.8v85.3M1817.3 980.1v42.7M1820.3 980.1v42.7M1680.3 852.1v149.3M1681.5 852.1v149.3M1700.5 937.4v106.7M1701.8 937.4v106.7M1755.3 937.4v64M1756.5 937.4v64M1832.3 1108.1v21.3M1849.8 1108.1v21.3M1857.6 1108.1v21.3M1832.3 1086.8v21.3M1849.8 1086.8v21.3M1857.6 1086.8v21.3M1832.3 1065.4v21.3M1849.8 1065.4v21.3M1857.6 1065.4v21.3M1832.3 1044.1v21.3M1849.8 1044.1v21.3M1857.6 1044.1v21.3M1832.3 1022.8v21.3M1849.8 1022.8v21.3M1857.6 1022.8v21.3M1832.3 1001.4v21.3M1849.8 1001.4v21.3M1857.6 1001.4v21.3M1832.3 980.1v21.3M1849.8 980.1v21.3M1857.6 980.1v21.3M1829.8 1065.4v21.3M1832.3 958.8v21.3M1848.8 958.8v21.3M1850.3 958.8v21.3M1852.3 958.8v21.3M1854.3 958.8v21.3M1857.6 958.8v21.3M1832.3 937.4v21.3M1848 937.4v21.3M1852.3 937.4v21.3M1854.8 937.4v21.3M1856.3 937.4v21.3M1857.6 937.4v21.3M1832.3 916.1v21.3M1841.3 916.1v21.3M1843.3 916.1v21.3M1845.3 916.1v21.3M1847.3 916.1v21.3M1856.3 916.1v21.3M1857.6 916.1v21.3M1832.3 894.8v21.3M1840.3 894.8v21.3M1842.3 894.8v21.3M1845.9 894.8v21.3M1832.3 873.4v21.3M1838.3 873.4v21.3M1840.3 873.4v21.3M1842.3 873.4v21.3M1844.3 873.4v21.3M1829.8 852.1v21.3M1833.3 852.1v21.3M1836.3 852.1v21.3M1838.3 852.1v21.3M1840.3 852.1v21.3M1844.3 852.1v21.3M1829.8 830.8v21.3M1833.3 830.8v21.3M1836.3 830.8v21.3M1839.3 830.8v21.3M1841.3 830.8v21.3M1844.3 830.8v21.3M1814.5 681.4v149.3M1815.6 681.4v149.3M1812.4 724.1v106.7M1816.8 724.1v106.7M1820.6 681.4v149.3M1822.1 681.4v149.3M1825.8 489.4v256M1827 489.4v256M1832.3 766.8v64M1833.7 766.8v64M1837.5 724.1v106.7M1839 724.1v106.7M1839.6 702.8v128M1841 702.8v128M1841.6 681.4v149.3M1843.1 681.4v149.3M1829.9 809.4v21.3M1835.8 809.4v21.3M1797.8 724.1v106.7M1799.6 724.1v106.7M1859.6 361.4v85.3M1861.3 361.4v85.3M1868.3 212.1v234.7M1870 212.1v234.7M1871.3 532.1v170.7M1872.9 532.1v170.7M1875.8 596.1v106.7M1877.3 596.1v106.7M1874.1 894.8v85.3M1875.3 894.8v85.3M1880.3 702.8v192M1881.8 702.8v192M1892.6 830.8v298.7M1898.3 830.8v298.7M1892.6 745.4v85.3M1897 745.4v85.3M1892.6 702.8v42.7M1895.5 702.8v42.7M1892.9 596.1v106.7M1894.3 596.1v106.7M1899.8 1108.1v21.3M1902.3 1108.1v21.3M1904.8 1108.1v21.3M1907.3 1108.1v21.3M1910.3 1108.1v21.3M1913 1108.1v21.3M1899.8 1086.8v21.3M1902.3 1086.8v21.3M1904.8 1086.8v21.3M1907.3 1086.8v21.3M1910.3 1086.8v21.3M1913 1086.8v21.3M1915.9 1108.1v21.3M1920.3 1108.1v21.3M1915.9 1086.8v21.3M1920.3 1086.8v21.3M1902.8 1065.4v21.3M1906.3 1065.4v21.3M1909.3 1065.4v21.3M1913 1065.4v21.3M1915.9 1065.4v21.3M1917.3 1065.4v21.3M1920.3 1065.4v21.3M1902.8 1044.1v21.3M1906.3 1044.1v21.3M1909.3 1044.1v21.3M1913 1044.1v21.3M1915.9 1044.1v21.3M1917.3 1044.1v21.3M1920.3 1044.1v21.3M1902.8 1022.8v21.3M1906.3 1022.8v21.3M1909.3 1022.8v21.3M1913 1022.8v21.3M1915.9 1022.8v21.3M1917.3 1022.8v21.3M1920.3 1022.8v21.3M1904.3 1001.4v21.3M1907.3 1001.4v21.3M1913 1001.4v21.3M1915.9 1001.4v21.3M1917.3 1001.4v21.3M1920.3 1001.4v21.3M1904.3 980.1v21.3M1907.3 980.1v21.3M1913 980.1v21.3M1915.9 980.1v21.3M1917.3 980.1v21.3M1920.3 980.1v21.3M1904.3 958.8v21.3M1907.3 958.8v21.3M1913 958.8v21.3M1915.9 958.8v21.3M1917.3 958.8v21.3M1920.3 958.8v21.3M1913 788.1v170.7M1915.9 788.1v170.7M1911.3 766.8v192M1912.8 766.8v192"/>
<path fill="none" stroke="#9a7f4c" stroke-width="0.7" d="M1823.5 745.4v85.3M1827 745.4v85.3M1799.3 468.1v362.7M1800.8 468.1v362.7M1801.3 638.8v192M1803.1 638.8v192M1794.1 788.1v85.3M1795.5 788.1v85.3M1796.4 766.8v106.7M1798.4 766.8v106.7M1857.6 1108.1v21.3M1870.8 1108.1v21.3M1873.6 1108.1v21.3M1876.8 1108.1v21.3M1883.8 1108.1v21.3M1857.6 1086.8v21.3M1870.8 1086.8v21.3M1873.6 1086.8v21.3M1876.8 1086.8v21.3M1883.8 1086.8v21.3M1857.6 1065.4v21.3M1870.8 1065.4v21.3M1873.6 1065.4v21.3M1876.8 1065.4v21.3M1883.8 1065.4v21.3M1857.6 1044.1v21.3M1870.8 1044.1v21.3M1873.6 1044.1v21.3M1876.8 1044.1v21.3M1883.8 1044.1v21.3M1857.6 1022.8v21.3M1870.8 1022.8v21.3M1873.6 1022.8v21.3M1876.8 1022.8v21.3M1883.8 1022.8v21.3M1857.6 1001.4v21.3M1870.8 1001.4v21.3M1873.6 1001.4v21.3M1876.8 1001.4v21.3M1883.8 1001.4v21.3M1857.6 980.1v21.3M1870.8 980.1v21.3M1873.6 980.1v21.3M1876.8 980.1v21.3M1883.8 980.1v21.3M1857.6 958.8v21.3M1870.8 958.8v21.3M1873.6 958.8v21.3M1876.8 958.8v21.3M1883.8 958.8v21.3M1857.6 937.4v21.3M1870.8 937.4v21.3M1873.6 937.4v21.3M1876.8 937.4v21.3M1883.8 937.4v21.3M1857.6 916.1v21.3M1870.8 916.1v21.3M1873.6 916.1v21.3M1876.8 916.1v21.3M1883.8 916.1v21.3M1857.6 894.8v21.3M1870.8 894.8v21.3M1873.6 894.8v21.3M1876.8 894.8v21.3M1883.8 894.8v21.3M1857.6 873.4v21.3M1870.8 873.4v21.3M1873.6 873.4v21.3M1876.8 873.4v21.3M1883.8 873.4v21.3M1857.6 852.1v21.3M1870.8 852.1v21.3M1873.6 852.1v21.3M1876.8 852.1v21.3M1883.8 852.1v21.3M1857.6 830.8v21.3M1870.8 830.8v21.3M1873.6 830.8v21.3M1876.8 830.8v21.3M1883.8 830.8v21.3M1857.6 809.4v21.3M1866.3 809.4v21.3M1870.8 809.4v21.3M1873.6 809.4v21.3M1882.3 809.4v21.3M1857.6 788.1v21.3M1866.3 788.1v21.3M1870.8 788.1v21.3M1873.6 788.1v21.3M1882.3 788.1v21.3M1857.6 766.8v21.3M1866.3 766.8v21.3M1870.8 766.8v21.3M1873.6 766.8v21.3M1882.3 766.8v21.3M1857.6 745.4v21.3M1866.3 745.4v21.3M1870.8 745.4v21.3M1873.6 745.4v21.3M1882.3 745.4v21.3M1857.6 724.1v21.3M1866.3 724.1v21.3M1870.8 724.1v21.3M1873.6 724.1v21.3M1882.3 724.1v21.3M1857.6 702.8v21.3M1866.3 702.8v21.3M1870.8 702.8v21.3M1873.6 702.8v21.3M1882.3 702.8v21.3M1857.6 681.4v21.3M1866.3 681.4v21.3M1870.8 681.4v21.3M1857.6 660.1v21.3M1866.3 660.1v21.3M1870.8 660.1v21.3M1857.6 638.8v21.3M1866.3 638.8v21.3M1870.8 638.8v21.3M1857.6 617.4v21.3M1866.3 617.4v21.3M1870.8 617.4v21.3M1857.6 574.8v42.7M1866.3 574.8v42.7M1857.6 553.4v21.3M1864.8 553.4v21.3M1857.6 510.8v42.7M1862 510.8v42.7M1868 574.8v42.7M1859.6 446.8v64M1861.3 446.8v64M1867.6 446.8v170.7M1870.8 446.8v170.7M1913 1108.1v21.3M1915.9 1108.1v21.3M1913 1086.8v21.3M1915.9 1086.8v21.3M1914.3 894.8v170.7M1915.8 894.8v170.7"/>
<g fill="#2f4454" stroke="#2f4454" stroke-width="0.35"><text x="452.7" y="1146.4">thread_start</text><text x="452.7" y="1125">_pthread_start</text><text x="452.7" y="1103.7">_pthread_body</text><text x="452.7" y="1082.4">thread_native_entry(Thread*)</text><text x="452.7" y="1061">Thread::call_run()</text><text x="452.7" y="1039.7">JavaThread::run()</text><text x="1333.3" y="1039.7">loop</text><text x="452.7" y="1018.4">JavaThread::thread_main_inner()</text><text x="1333.3" y="1018.4">...</text><text x="452.7" y="997">CompileBroker::compiler_thread_loop()</text><text x="452.7" y="975.7">CompileBroker::invoke_compiler_on_method(CompileTask*)</text><text x="452.7" y="954.4">C2Compiler::compile_method(ciEnv*, ciMethod*, int, DirectiveSet*)</text><text x="1057.8" y="954.4">C::compile_method</text><text x="452.7" y="933">Compile::Compile</text><text x="1057.8" y="933">C::Compilation</text><text x="452.7" y="911.7">Compile::Code_Gen()</text><text x="832.8" y="911.7">Compile::Optimize</text><text x="998.8" y="911.7">...</text><text x="1057.8" y="911.7">C::compile_method</text><text x="452.7" y="890.4">PhaseChaitin::Register_Allocate</text><text x="723.8" y="890.4">...</text><text x="767.8" y="890.4">...</text><text x="832.8" y="890.4">...</text><text x="898.8" y="890.4">...</text><text x="998.8" y="890.4">...</text><text x="1058.3" y="890.4">compile_java_method</text><text x="452.7" y="869">...</text><text x="516.1" y="869">...</text><text x="553.8" y="869">...</text><text x="585.5" y="869">...</text><text x="724.5" y="869">...</text><text x="767.8" y="869">...</text><text x="833.5" y="869">...</text><text x="998.8" y="869">...</text><text x="1058.8" y="869">build_hir</text><text x="1140.8" y="869">emit_lir</text><text x="1219.8" y="869">...</text><text x="998.8" y="847.7">...</text><text x="1058.8" y="847.7">IR::IR</text><text x="1138.8" y="847.7">...</text><text x="999" y="826.4">...</text><text x="1058.6" y="826.4">...</text><text x="1058.6" y="805">...</text><text x="1058.6" y="783.7">...</text><text x="1058.6" y="762.4">...</text><text x="1058.6" y="741">...</text><text x="1058.6" y="719.7">...</text><text x="1058.6" y="698.4">...</text><text x="1834.8" y="1146.4">...</text></g>
<g fill="#4a3a1c" stroke="#4a3a1c" stroke-width="0.35"><text x="1405.8" y="1146.4">volans.EchoServer.main</text><text x="1738.5" y="1146.4">run</text><text x="1808.2" y="1146.4">...</text><text x="1405.8" y="1125">&lt;init&gt;</text><text x="1738.5" y="1125">run</text><text x="1808.2" y="1125">...</text><text x="1405.8" y="1103.7">&lt;init&gt;</text><text x="1738.5" y="1103.7">...</text><text x="1405.8" y="1082.4">refresh</text><text x="1738.5" y="1082.4">...</text><text x="1405.8" y="1061">...</text><text x="1640.1" y="1061">...</text><text x="1405.8" y="1039.7">preInstantiateSingletons</text><text x="1640.1" y="1039.7">...</text><text x="1405.8" y="1018.4">getBean</text><text x="1640.1" y="1018.4">...</text><text x="1405.8" y="997">doGetBean</text><text x="1640.1" y="997">...</text><text x="1405.8" y="975.7">getSingleton</text><text x="1640.1" y="975.7">...</text><text x="1405.8" y="954.4">getObject</text><text x="1640.1" y="954.4">...</text><text x="1405.8" y="933">createBean</text><text x="1640.1" y="933">...</text><text x="1405.8" y="911.7">doCreateBean</text><text x="1640.1" y="911.7">...</text><text x="1405.8" y="890.4">initializeBean</text><text x="1640.1" y="890.4">...</text><text x="1405.8" y="869">invokeInitMethods</text><text x="1640.1" y="869">...</text><text x="1405.8" y="847.7">afterPropertiesSet</text><text x="1640.1" y="847.7">...</text><text x="1405.8" y="826.4">...</text><text x="1521.4" y="826.4">init</text><text x="1405.8" y="805">&lt;init&gt;</text><text x="1521.4" y="805">&lt;clinit&gt;</text><text x="1405.8" y="783.7">&lt;clinit&gt;</text><text x="1521.4" y="783.7">init</text><text x="1405.8" y="762.4">...</text><text x="1521.4" y="762.4">...</text><text x="1405.8" y="741">...</text><text x="1521.4" y="741">init</text><text x="1405.8" y="719.7">...</text><text x="1521.4" y="719.7">&lt;init&gt;</text><text x="1405.8" y="698.4">next</text><text x="1521.4" y="698.4">...</text><text x="1405.8" y="677">get</text><text x="1521.4" y="677">...</text><text x="1405.8" y="655.7">newInstance</text><text x="1521.4" y="655.7">...</text><text x="1405.8" y="634.4">newInstance</text><text x="1521.4" y="634.4">get</text><text x="1405.8" y="613">...</text><text x="1521.4" y="613">get</text><text x="1405.8" y="591.7">newInstance</text><text x="1521.4" y="591.7">get</text><text x="1405.8" y="570.4">newInstance</text><text x="1521.4" y="570.4">...</text><text x="1405.8" y="549">...</text><text x="1521.4" y="549">...</text><text x="1405.8" y="527.7">&lt;clinit&gt;</text><text x="1521.4" y="527.7">...</text><text x="1405.8" y="506.4">&lt;clinit&gt;</text><text x="1521.4" y="506.4">...</text><text x="1405.8" y="485">&lt;clinit&gt;</text><text x="1521.4" y="485">...</text><text x="1405.8" y="463.7">...</text><text x="1472.3" y="463.7">...</text><text x="1519.4" y="463.7">...</text><text x="1405.8" y="442.4">...</text><text x="1472.3" y="442.4">...</text><text x="1519.4" y="442.4">...</text><text x="1405.8" y="421">...</text><text x="1472.3" y="421">...</text><text x="1521.4" y="421">...</text><text x="1405.8" y="399.7">...</text><text x="1472.3" y="399.7">get</text><text x="1521.4" y="399.7">...</text><text x="1405.8" y="378.4">&lt;init&gt;</text><text x="1472.3" y="378.4">get</text><text x="1405.8" y="357">init</text><text x="1472.3" y="357">...</text><text x="1405.8" y="335.7">...</text><text x="1472.3" y="335.7">get</text><text x="1405.8" y="314.4">...</text><text x="1472.3" y="314.4">get</text><text x="1405.8" y="293">...</text><text x="1472.3" y="293">...</text><text x="1405.8" y="271.7">...</text><text x="1472.3" y="271.7">...</text><text x="1405.8" y="250.4">...</text><text x="1472.3" y="250.4">...</text><text x="1405.8" y="229">...</text><text x="1472.3" y="229">...</text><text x="1405.8" y="207.7">...</text><text x="1472.3" y="207.7">...</text><text x="1405.8" y="186.4">...</text><text x="1472.3" y="186.4">...</text><text x="1405.8" y="165">...</text><text x="1472.3" y="165">...</text><text x="1640.1" y="826.4">...</text><text x="1640.1" y="805">...</text></g>
<g fill="#303234" stroke="#303234" stroke-width="0.35"><text x="452.7" y="1167.7">all</text></g>
</svg>
</body></html>
